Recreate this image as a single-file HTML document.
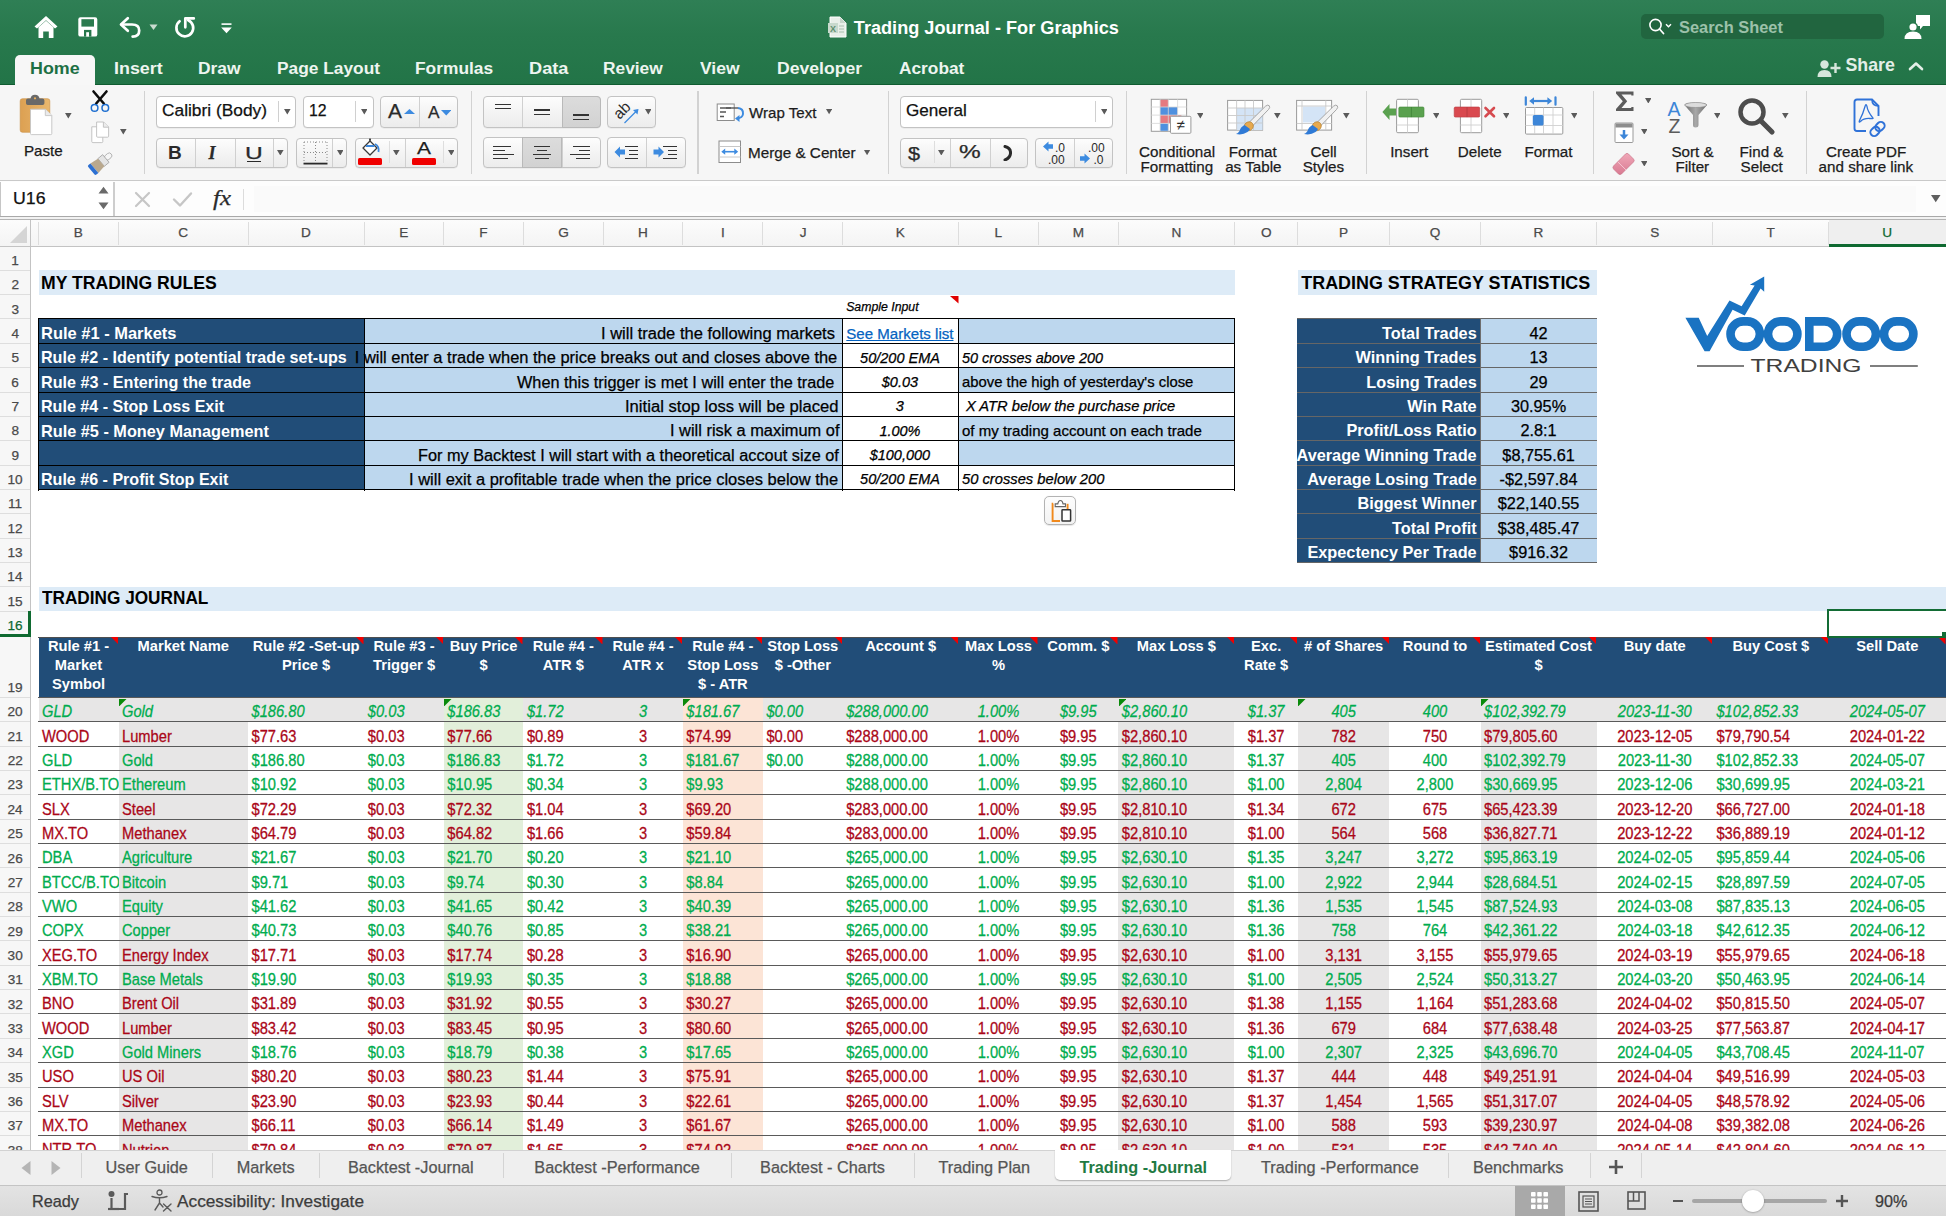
<!DOCTYPE html>
<html><head><meta charset="utf-8"><title>Trading Journal - For Graphics</title>
<style>
html,body{margin:0;padding:0;}
body{width:1946px;height:1216px;overflow:hidden;position:relative;background:#fff;font-family:"Liberation Sans",sans-serif;}
div{box-sizing:border-box;}
div[style*="font-weight:normal"]{-webkit-text-stroke:0.25px currentColor;}
</style></head><body>
<div style="position:absolute;left:0.00px;top:0.00px;width:1946.00px;height:85.00px;background:linear-gradient(180deg,#2f7f55 0%,#28794d 40%,#227447 100%);"></div><div style="position:absolute;left:0.00px;top:84.00px;width:1946.00px;height:1.00px;background:#105c31;"></div><svg style="position:absolute;left:33.00px;top:14.00px;" width="26" height="25" viewBox="0 0 26 25"><path d="M13 2 L1.5 12.5 L4 14.5 L13 6.3 L22 14.5 L24.5 12.5 Z" fill="#fff"/><path d="M5.5 13.2 L13 6.8 L20.5 13.2 L20.5 23.5 Q20.5 24 20 24 L15.8 24 L15.8 17.5 L10.2 17.5 L10.2 24 L6 24 Q5.5 24 5.5 23.5 Z" fill="#fff"/></svg><svg style="position:absolute;left:78.00px;top:17.00px;" width="20" height="20" viewBox="0 0 20 20"><rect x="0.3" y="0.2" width="19" height="19.4" rx="2.2" fill="#fff"/><rect x="3.4" y="2.2" width="12.6" height="7.4" fill="#2a7a4e"/><rect x="6" y="12.9" width="7.4" height="6.7" fill="#26774b"/><rect x="8.2" y="15.2" width="2.8" height="4.4" fill="#fff"/></svg><svg style="position:absolute;left:118.00px;top:15.00px;" width="25" height="24" viewBox="0 0 25 24"><path d="M9.8 3.2 L3 9.5 L9.8 15.8" stroke="#fff" stroke-width="2.7" fill="none" stroke-linecap="round" stroke-linejoin="round"/><path d="M3.8 9.5 L14 9.5 Q21.2 9.5 21.2 15.5 Q21.2 21.6 14.6 21.6" stroke="#fff" stroke-width="2.7" fill="none" stroke-linecap="round"/></svg><svg style="position:absolute;left:149.00px;top:24.00px;" width="9" height="7" viewBox="0 0 9 7"><path d="M0.5 0.5 L8.5 0.5 L4.5 6 Z" fill="#c9dccf"/></svg><svg style="position:absolute;left:172.00px;top:15.00px;" width="25" height="25" viewBox="0 0 25 25"><path d="M7.6 6.3 A8.4 8.4 0 1 0 16.2 5.2" stroke="#fff" stroke-width="2.7" fill="none" stroke-linecap="round"/><path d="M13.3 12.3 L13.3 3.4 L21.8 3.4" stroke="#fff" stroke-width="2.7" fill="none" stroke-linecap="round" stroke-linejoin="round"/></svg><svg style="position:absolute;left:220.00px;top:22.00px;" width="13" height="12" viewBox="0 0 13 12"><rect x="1.5" y="1.3" width="10" height="1.6" fill="#fff"/><path d="M1.2 5.6 L11.8 5.6 L6.5 11.2 Z" fill="#fff"/></svg><svg style="position:absolute;left:827.00px;top:16.00px;" width="21" height="22" viewBox="0 0 21 22"><path d="M3 1 L13 1 L19 7 L19 21 L3 21 Z" fill="#e8efe9" stroke="#fff" stroke-width="1"/><path d="M13 1 L13 7 L19 7" fill="#c7d6cb"/><rect x="1" y="7" width="10" height="10" fill="#c8d9cd"/><text x="6" y="15.5" font-size="9" font-weight="bold" text-anchor="middle" fill="#5d8f6d" font-family="Liberation Sans">X</text><path d="M12 10 h5 M12 13 h5 M12 16 h5" stroke="#a8c0ae" stroke-width="1"/></svg><div style="position:absolute;left:853.82px;top:19.43px;font-size:18.15px;line-height:18.15px;color:#fff;font-weight:bold;font-style:normal;white-space:nowrap;">Trading Journal - For Graphics</div><div style="position:absolute;left:1641.00px;top:14.20px;width:242.60px;height:25.30px;background:#21653f;border-radius:5px;"></div><svg style="position:absolute;left:1648.00px;top:18.00px;" width="26" height="18" viewBox="0 0 26 18"><circle cx="7.5" cy="7" r="5.6" stroke="#fff" stroke-width="1.6" fill="none"/><path d="M11.5 11 L15.5 15.5" stroke="#fff" stroke-width="1.8" stroke-linecap="round"/><path d="M18 6.2 L20.5 8.8 L23 6.2" stroke="#fff" stroke-width="1.4" fill="none"/></svg><div style="position:absolute;left:1678.51px;top:19.75px;font-size:16.60px;line-height:16.60px;color:#9cc1aa;font-weight:bold;font-style:normal;white-space:nowrap;transform:scaleX(0.9885);transform-origin:0 0;">Search Sheet</div><svg style="position:absolute;left:1903.00px;top:14.00px;" width="28" height="26" viewBox="0 0 28 26"><path d="M13 1 H27 V12 H20 L17 15.5 L17 12 H13 Z" fill="#fff"/><circle cx="10" cy="13" r="4.3" fill="#fff" stroke="#26784b" stroke-width="1.4"/><path d="M1.5 25 Q1.5 17.5 10 17.5 Q18.5 17.5 18.5 25 Z" fill="#fff"/></svg><div style="position:absolute;left:15.00px;top:55.00px;width:80.00px;height:31.00px;background:#f7f7f7;border-radius:5px 5px 0 0;"></div><div style="position:absolute;left:29.64px;top:59.57px;font-size:17.40px;line-height:17.40px;color:#1d7044;font-weight:bold;font-style:normal;white-space:nowrap;transform:scaleX(1.0270);transform-origin:0 0;">Home</div><div style="position:absolute;left:114.14px;top:59.57px;font-size:17.40px;line-height:17.40px;color:#eef5f0;font-weight:bold;font-style:normal;white-space:nowrap;transform:scaleX(1.0277);transform-origin:0 0;">Insert</div><div style="position:absolute;left:198.47px;top:59.57px;font-size:17.40px;line-height:17.40px;color:#eef5f0;font-weight:bold;font-style:normal;white-space:nowrap;transform:scaleX(1.0024);transform-origin:0 0;">Draw</div><div style="position:absolute;left:276.57px;top:59.57px;font-size:17.40px;line-height:17.40px;color:#eef5f0;font-weight:bold;font-style:normal;white-space:nowrap;transform:scaleX(0.9967);transform-origin:0 0;">Page Layout</div><div style="position:absolute;left:415.37px;top:59.57px;font-size:17.40px;line-height:17.40px;color:#eef5f0;font-weight:bold;font-style:normal;white-space:nowrap;transform:scaleX(0.9977);transform-origin:0 0;">Formulas</div><div style="position:absolute;left:528.72px;top:59.57px;font-size:17.40px;line-height:17.40px;color:#eef5f0;font-weight:bold;font-style:normal;white-space:nowrap;transform:scaleX(1.0459);transform-origin:0 0;">Data</div><div style="position:absolute;left:603.17px;top:59.57px;font-size:17.40px;line-height:17.40px;color:#eef5f0;font-weight:bold;font-style:normal;white-space:nowrap;transform:scaleX(0.9966);transform-origin:0 0;">Review</div><div style="position:absolute;left:700.31px;top:59.57px;font-size:17.40px;line-height:17.40px;color:#eef5f0;font-weight:bold;font-style:normal;white-space:nowrap;transform:scaleX(1.0070);transform-origin:0 0;">View</div><div style="position:absolute;left:776.55px;top:59.57px;font-size:17.40px;line-height:17.40px;color:#eef5f0;font-weight:bold;font-style:normal;white-space:nowrap;transform:scaleX(1.0128);transform-origin:0 0;">Developer</div><div style="position:absolute;left:898.87px;top:59.57px;font-size:17.40px;line-height:17.40px;color:#eef5f0;font-weight:bold;font-style:normal;white-space:nowrap;transform:scaleX(0.9942);transform-origin:0 0;">Acrobat</div><svg style="position:absolute;left:1817.00px;top:59.00px;" width="25" height="19" viewBox="0 0 25 19"><circle cx="7.5" cy="5.5" r="4.2" fill="#d6e6dc"/><path d="M0.5 18 Q0.5 11 7.5 11 Q14.5 11 14.5 18 Z" fill="#d6e6dc"/><path d="M18.5 4 V14 M13.5 9 H23.5" stroke="#d6e6dc" stroke-width="2.4"/></svg><div style="position:absolute;left:1845.47px;top:56.94px;font-size:17.79px;line-height:17.79px;color:#e3eee7;font-weight:bold;font-style:normal;white-space:nowrap;">Share</div><svg style="position:absolute;left:1908.00px;top:61.00px;" width="16" height="10" viewBox="0 0 16 10"><path d="M2 8 L8 2.5 L14 8" stroke="#e3eee7" stroke-width="2.6" fill="none" stroke-linecap="round" stroke-linejoin="round"/></svg><div style="position:absolute;left:0.00px;top:85.00px;width:1946.00px;height:95.50px;background:#f6f6f6;"></div><div style="position:absolute;left:0.00px;top:180.00px;width:1946.00px;height:1.20px;background:#c9c9c9;"></div><svg style="position:absolute;left:19.00px;top:94.00px;" width="34" height="42" viewBox="0 0 34 42">
<defs><linearGradient id="cb" x1="0" y1="0" x2="1" y2="0"><stop offset="0" stop-color="#dca052"/><stop offset="1" stop-color="#eab86e"/></linearGradient></defs>
<rect x="1.2" y="4.7" width="29.6" height="33.6" rx="2.2" fill="url(#cb)" stroke="#c98d3f" stroke-width="0.6"/>
<path d="M7 6.5 Q7 4.6 9 4.6 L11.5 4.6 Q12 0.8 16 0.8 Q20 0.8 20.5 4.6 L23.3 4.6 Q25.4 4.6 25.4 6.5 L25.4 9.3 Q25.4 10.9 23.6 10.9 L8.8 10.9 Q7 10.9 7 9.3 Z" fill="#696969"/>
<circle cx="16" cy="4.3" r="1.1" fill="#f0b35c"/>
<path d="M11.5 15.2 L26.5 15.2 L32.8 21.5 L32.8 39.6 Q32.8 40.6 31.8 40.6 L12.5 40.6 Q11.5 40.6 11.5 39.6 Z" fill="#fff" stroke="#c4c4c4" stroke-width="0.9"/>
<path d="M26.3 15.2 L26.3 21.6 L32.8 21.6" fill="#eaeaea" stroke="#c4c4c4" stroke-width="0.9"/>
</svg><svg style="position:absolute;left:65.00px;top:113.05px;" width="6.6" height="5.5" viewBox="0 0 6.6 5.5"><path d="M0 0 L6.6 0 L3.3 5.5 Z" fill="#5a5a5a"/></svg><div style="position:absolute;left:23.59px;top:144.14px;font-size:14.60px;line-height:14.60px;color:#1a1a1a;font-weight:normal;font-style:normal;white-space:nowrap;transform:scaleX(1.0373);transform-origin:0 0;">Paste</div><svg style="position:absolute;left:89.00px;top:89.00px;" width="22" height="25" viewBox="0 0 22 25">
<path d="M4.5 2.5 L14.8 14.5 M17.5 2.5 L7.2 14.5" stroke="#0d0d0d" stroke-width="2.6" stroke-linecap="round"/>
<circle cx="5.6" cy="18.9" r="3.3" fill="none" stroke="#1f6fd0" stroke-width="1.5"/>
<circle cx="16.3" cy="18.9" r="3.3" fill="none" stroke="#1f6fd0" stroke-width="1.5"/>
</svg><svg style="position:absolute;left:90.00px;top:121.00px;" width="20" height="23" viewBox="0 0 20 23">
<path d="M1.8 5.8 L8.3 5.8 L12.8 10.3 L12.8 20.6 Q12.8 21.6 11.8 21.6 L2.8 21.6 Q1.8 21.6 1.8 20.6 Z" fill="#fff" stroke="#bdbdbd" stroke-width="0.9"/>
<path d="M6.6 1 L13.6 1 L18.6 6 L18.6 15.2 Q18.6 16.2 17.6 16.2 L7.6 16.2 Q6.6 16.2 6.6 15.2 Z" fill="#fff" stroke="#bdbdbd" stroke-width="0.9"/>
<path d="M13.4 1 L13.4 6.2 L18.6 6.2" fill="#ececec" stroke="#bdbdbd" stroke-width="0.9"/>
</svg><svg style="position:absolute;left:120.40px;top:129.45px;" width="6.6" height="5.5" viewBox="0 0 6.6 5.5"><path d="M0 0 L6.6 0 L3.3 5.5 Z" fill="#5a5a5a"/></svg><svg style="position:absolute;left:86.00px;top:149.00px;" width="30" height="28" viewBox="0 0 30 28"><g transform="translate(14.5,14) rotate(50)">
<rect x="-2.7" y="-14" width="5.4" height="8" rx="2.6" fill="#f6f6f6" stroke="#a9a9a9" stroke-width="0.8"/>
<rect x="-5" y="-7" width="10" height="6.2" fill="#e4e4e4" stroke="#a3a3a3" stroke-width="0.8"/>
<path d="M-5 -0.8 L5 -0.8 L6.2 8 L-6.2 8 Z" fill="#b9a88d"/>
<path d="M-6.2 8 L6.2 8 L6.2 10.5 Q6.2 12 4.7 12 L-4.7 12 Q-6.2 12 -6.2 10.5 Z" fill="#2d70d2"/>
</g></svg><div style="position:absolute;left:143.50px;top:90.60px;width:1.20px;height:83.20px;background:#d2d2d2;"></div><div style="position:absolute;left:155.80px;top:96.20px;width:140.60px;height:31.60px;background:#ffffff;border:1px solid #c3c3c3;border-radius:4px;box-shadow:0 0.5px 0.5px rgba(0,0,0,0.08);"></div><div style="position:absolute;left:277.50px;top:100.80px;width:1.00px;height:21.70px;background:#d0d0d0;"></div><div style="position:absolute;left:161.93px;top:103.38px;font-size:16.80px;line-height:16.80px;color:#111;font-weight:normal;font-style:normal;white-space:nowrap;transform:scaleX(1.0333);transform-origin:0 0;">Calibri (Body)</div><svg style="position:absolute;left:284.00px;top:109.35px;" width="6.6" height="5.5" viewBox="0 0 6.6 5.5"><path d="M0 0 L6.6 0 L3.3 5.5 Z" fill="#5a5a5a"/></svg><div style="position:absolute;left:303.00px;top:96.20px;width:70.70px;height:31.60px;background:#ffffff;border:1px solid #c3c3c3;border-radius:4px;box-shadow:0 0.5px 0.5px rgba(0,0,0,0.08);"></div><div style="position:absolute;left:354.80px;top:100.80px;width:1.00px;height:21.70px;background:#d0d0d0;"></div><div style="position:absolute;left:309.21px;top:103.38px;font-size:16.80px;line-height:16.80px;color:#111;font-weight:normal;font-style:normal;white-space:nowrap;transform:scaleX(0.9427);transform-origin:0 0;">12</div><svg style="position:absolute;left:360.90px;top:109.35px;" width="6.6" height="5.5" viewBox="0 0 6.6 5.5"><path d="M0 0 L6.6 0 L3.3 5.5 Z" fill="#5a5a5a"/></svg><div style="position:absolute;left:380.30px;top:96.20px;width:78.10px;height:31.60px;background:linear-gradient(180deg,#fdfdfd 0%,#f3f3f3 55%,#ececec 100%);border:1px solid #c3c3c3;border-radius:4px;box-shadow:0 0.5px 0.5px rgba(0,0,0,0.08);"></div><div style="position:absolute;left:419.20px;top:97.20px;width:1.00px;height:29.60px;background:#d0d0d0;"></div><div style="position:absolute;left:387.70px;top:102.29px;font-size:19.50px;line-height:19.50px;color:#2a2a2a;font-weight:normal;font-style:normal;white-space:nowrap;transform:scaleX(1.0719);transform-origin:0 0;">A</div><svg style="position:absolute;left:403.50px;top:109.00px;" width="11" height="5" viewBox="0 0 11 5"><path d="M0 5 L5.5 0 L11 5 Z" fill="#3d8be0"/></svg><div style="position:absolute;left:428.00px;top:105.26px;font-size:16.00px;line-height:16.00px;color:#2a2a2a;font-weight:normal;font-style:normal;white-space:nowrap;transform:scaleX(1.0808);transform-origin:0 0;">A</div><svg style="position:absolute;left:440.80px;top:110.00px;" width="10.5" height="5.5" viewBox="0 0 10.5 5.5"><path d="M0 0 L10.5 0 L5.25 5.5 Z" fill="#3d8be0"/></svg><div style="position:absolute;left:156.20px;top:137.70px;width:132.00px;height:29.90px;background:linear-gradient(180deg,#fdfdfd 0%,#f3f3f3 55%,#ececec 100%);border:1px solid #c3c3c3;border-radius:4px;box-shadow:0 0.5px 0.5px rgba(0,0,0,0.08);"></div><div style="position:absolute;left:195.20px;top:138.70px;width:1.00px;height:27.90px;background:#d0d0d0;"></div><div style="position:absolute;left:234.70px;top:138.70px;width:1.00px;height:27.90px;background:#d0d0d0;"></div><div style="position:absolute;left:272.50px;top:138.70px;width:1.00px;height:27.90px;background:#d0d0d0;"></div><div style="position:absolute;left:168.46px;top:143.76px;font-size:18.00px;line-height:18.00px;color:#2a2a2a;font-weight:bold;font-style:normal;white-space:nowrap;transform:scaleX(1.0565);transform-origin:0 0;">B</div><div style="position:absolute;left:208.48px;top:143.76px;font-size:18.00px;line-height:18.00px;color:#2a2a2a;font-weight:normal;font-style:italic;white-space:nowrap;font-family:'Liberation Serif',serif;font-weight:bold;">I</div><div style="position:absolute;left:245.16px;top:144.61px;font-size:17.00px;line-height:17.00px;color:#2a2a2a;font-weight:normal;font-style:normal;white-space:nowrap;transform:scaleX(1.4448);transform-origin:0 0;">U</div><div style="position:absolute;left:247.00px;top:160.50px;width:14.00px;height:1.60px;background:#2a2a2a;"></div><svg style="position:absolute;left:277.40px;top:149.75px;" width="6.6" height="5.5" viewBox="0 0 6.6 5.5"><path d="M0 0 L6.6 0 L3.3 5.5 Z" fill="#5a5a5a"/></svg><div style="position:absolute;left:295.60px;top:137.70px;width:51.80px;height:29.90px;background:linear-gradient(180deg,#fdfdfd 0%,#f3f3f3 55%,#ececec 100%);border:1px solid #c3c3c3;border-radius:4px;box-shadow:0 0.5px 0.5px rgba(0,0,0,0.08);"></div><div style="position:absolute;left:331.70px;top:138.70px;width:1.00px;height:27.90px;background:#d0d0d0;"></div><svg style="position:absolute;left:302.50px;top:140.50px;" width="25" height="24" viewBox="0 0 25 24">
<g stroke="#8a8a8a" stroke-width="1" stroke-dasharray="1 2" fill="none">
<path d="M1 1 H24 M1 11.5 H24 M1 1 V22 M12.5 1 V22 M24 1 V22"/></g>
<path d="M0.5 22.6 H24.5" stroke="#2a2a2a" stroke-width="1.8"/></svg><svg style="position:absolute;left:336.70px;top:149.75px;" width="6.6" height="5.5" viewBox="0 0 6.6 5.5"><path d="M0 0 L6.6 0 L3.3 5.5 Z" fill="#5a5a5a"/></svg><div style="position:absolute;left:354.80px;top:137.70px;width:103.60px;height:29.90px;background:linear-gradient(180deg,#fdfdfd 0%,#f3f3f3 55%,#ececec 100%);border:1px solid #c3c3c3;border-radius:4px;box-shadow:0 0.5px 0.5px rgba(0,0,0,0.08);"></div><div style="position:absolute;left:405.00px;top:138.70px;width:1.00px;height:27.90px;background:#d0d0d0;"></div><div style="position:absolute;left:388.50px;top:141.00px;width:1.00px;height:22.00px;background:#dedede;"></div><div style="position:absolute;left:442.80px;top:141.00px;width:1.00px;height:22.00px;background:#dedede;"></div><svg style="position:absolute;left:360.00px;top:138.00px;" width="21" height="20" viewBox="0 0 21 20">
<path d="M3 10 L10 3 L17 10 L10 17 Z" fill="#fff" stroke="#3a3a3a" stroke-width="1.3" stroke-linejoin="round"/>
<path d="M10 3 L10 0.8" stroke="#3a3a3a" stroke-width="1.2"/><circle cx="10" cy="1.5" r="1" fill="#3a3a3a"/>
<path d="M6 8 L14.5 8" stroke="#3b87dc" stroke-width="2"/>
<path d="M15 6 Q19.5 8 18.5 14" stroke="#3b87dc" stroke-width="1.8" fill="none"/>
</svg><div style="position:absolute;left:358.00px;top:158.30px;width:24.20px;height:6.50px;background:#f00000;border-radius:1.5px;"></div><svg style="position:absolute;left:393.40px;top:149.75px;" width="6.6" height="5.5" viewBox="0 0 6.6 5.5"><path d="M0 0 L6.6 0 L3.3 5.5 Z" fill="#5a5a5a"/></svg><div style="position:absolute;left:417.30px;top:140.11px;font-size:17.00px;line-height:17.00px;color:#1e1e1e;font-weight:normal;font-style:normal;white-space:nowrap;transform:scaleX(1.2295);transform-origin:0 0;">A</div><div style="position:absolute;left:412.30px;top:158.30px;width:23.90px;height:6.50px;background:#f00000;border-radius:1.5px;"></div><svg style="position:absolute;left:447.70px;top:149.75px;" width="6.6" height="5.5" viewBox="0 0 6.6 5.5"><path d="M0 0 L6.6 0 L3.3 5.5 Z" fill="#5a5a5a"/></svg><div style="position:absolute;left:470.50px;top:90.60px;width:1.20px;height:83.20px;background:#d2d2d2;"></div><div style="position:absolute;left:483.20px;top:96.30px;width:117.40px;height:31.30px;background:linear-gradient(180deg,#fdfdfd 0%,#f3f3f3 55%,#ececec 100%);border:1px solid #c3c3c3;border-radius:4px;box-shadow:0 0.5px 0.5px rgba(0,0,0,0.08);"></div><div style="position:absolute;left:562.00px;top:96.30px;width:38.60px;height:31.30px;background:linear-gradient(180deg,#dcdcdc,#d2d2d2);border:1px solid #b9b9b9;border-radius:0 4px 4px 0;"></div><div style="position:absolute;left:522.30px;top:97.30px;width:1.00px;height:29.30px;background:#d0d0d0;"></div><div style="position:absolute;left:494.90px;top:103.95px;width:15.90px;height:1.50px;background:#333;"></div><div style="position:absolute;left:494.90px;top:107.95px;width:15.90px;height:1.50px;background:#333;"></div><div style="position:absolute;left:534.00px;top:109.05px;width:16.00px;height:1.50px;background:#333;"></div><div style="position:absolute;left:534.00px;top:113.65px;width:16.00px;height:1.50px;background:#333;"></div><div style="position:absolute;left:573.00px;top:114.45px;width:16.00px;height:1.50px;background:#333;"></div><div style="position:absolute;left:573.00px;top:118.75px;width:16.00px;height:1.50px;background:#333;"></div><div style="position:absolute;left:607.30px;top:96.30px;width:48.40px;height:31.30px;background:linear-gradient(180deg,#fdfdfd 0%,#f3f3f3 55%,#ececec 100%);border:1px solid #c3c3c3;border-radius:4px;box-shadow:0 0.5px 0.5px rgba(0,0,0,0.08);"></div><svg style="position:absolute;left:612.00px;top:100.00px;" width="30" height="26" viewBox="0 0 30 26">
<text x="0" y="0" transform="translate(7.5,20) rotate(-45)" font-family="Liberation Sans" font-size="15.5" fill="#2a2a2a">ab</text>
<path d="M12.5 23 L25.5 10" stroke="#3d8be0" stroke-width="1.3"/><path d="M26.5 9 L21 10 L25.5 14.5 Z" fill="#3d8be0"/></svg><svg style="position:absolute;left:644.50px;top:109.05px;" width="6.6" height="5.5" viewBox="0 0 6.6 5.5"><path d="M0 0 L6.6 0 L3.3 5.5 Z" fill="#5a5a5a"/></svg><div style="position:absolute;left:483.20px;top:137.30px;width:117.40px;height:30.80px;background:linear-gradient(180deg,#fdfdfd 0%,#f3f3f3 55%,#ececec 100%);border:1px solid #c3c3c3;border-radius:4px;box-shadow:0 0.5px 0.5px rgba(0,0,0,0.08);"></div><div style="position:absolute;left:522.30px;top:137.30px;width:39.70px;height:30.80px;background:linear-gradient(180deg,#dcdcdc,#d2d2d2);border:1px solid #b9b9b9;"></div><div style="position:absolute;left:562.00px;top:138.30px;width:1.00px;height:28.80px;background:#d0d0d0;"></div><div style="position:absolute;left:493.00px;top:145.75px;width:17.80px;height:1.50px;background:#333;"></div><div style="position:absolute;left:493.00px;top:149.75px;width:12.00px;height:1.50px;background:#333;"></div><div style="position:absolute;left:493.00px;top:153.85px;width:20.50px;height:1.50px;background:#333;"></div><div style="position:absolute;left:493.00px;top:157.95px;width:14.80px;height:1.50px;background:#333;"></div><div style="position:absolute;left:534.00px;top:145.75px;width:16.00px;height:1.50px;background:#333;"></div><div style="position:absolute;left:536.70px;top:149.75px;width:10.50px;height:1.50px;background:#333;"></div><div style="position:absolute;left:532.50px;top:153.85px;width:18.80px;height:1.50px;background:#333;"></div><div style="position:absolute;left:535.00px;top:157.95px;width:13.70px;height:1.50px;background:#333;"></div><div style="position:absolute;left:573.00px;top:145.75px;width:17.30px;height:1.50px;background:#333;"></div><div style="position:absolute;left:578.70px;top:149.75px;width:11.60px;height:1.50px;background:#333;"></div><div style="position:absolute;left:570.40px;top:153.85px;width:19.90px;height:1.50px;background:#333;"></div><div style="position:absolute;left:575.80px;top:157.95px;width:14.50px;height:1.50px;background:#333;"></div><div style="position:absolute;left:607.30px;top:137.30px;width:78.30px;height:30.80px;background:linear-gradient(180deg,#fdfdfd 0%,#f3f3f3 55%,#ececec 100%);border:1px solid #c3c3c3;border-radius:4px;box-shadow:0 0.5px 0.5px rgba(0,0,0,0.08);"></div><div style="position:absolute;left:646.20px;top:138.30px;width:1.00px;height:28.80px;background:#d0d0d0;"></div><svg style="position:absolute;left:614.00px;top:146.00px;" width="11.5" height="12" viewBox="0 0 11.5 12"><path d="M0.5 6 L6 0.5 L6 3.5 L11 3.5 L11 8.5 L6 8.5 L6 11.5 Z" fill="#3d8be0"/></svg><div style="position:absolute;left:624.60px;top:145.75px;width:13.20px;height:1.50px;background:#333;"></div><div style="position:absolute;left:629.30px;top:149.75px;width:8.50px;height:1.50px;background:#333;"></div><div style="position:absolute;left:629.30px;top:153.85px;width:8.50px;height:1.50px;background:#333;"></div><div style="position:absolute;left:624.60px;top:157.95px;width:13.20px;height:1.50px;background:#333;"></div><svg style="position:absolute;left:653.00px;top:146.00px;" width="11.5" height="12" viewBox="0 0 11.5 12"><path d="M11 6 L5.5 0.5 L5.5 3.5 L0.5 3.5 L0.5 8.5 L5.5 8.5 L5.5 11.5 Z" fill="#3d8be0"/></svg><div style="position:absolute;left:663.40px;top:145.75px;width:13.60px;height:1.50px;background:#333;"></div><div style="position:absolute;left:668.00px;top:149.75px;width:9.00px;height:1.50px;background:#333;"></div><div style="position:absolute;left:668.00px;top:153.85px;width:9.00px;height:1.50px;background:#333;"></div><div style="position:absolute;left:663.40px;top:157.95px;width:13.60px;height:1.50px;background:#333;"></div><div style="position:absolute;left:697.40px;top:90.60px;width:1.20px;height:83.20px;background:#d2d2d2;"></div><svg style="position:absolute;left:715.50px;top:102.00px;" width="30" height="21" viewBox="0 0 30 21">
<rect x="1.2" y="2" width="17" height="16.5" fill="#fff" stroke="#8c8c8c" stroke-width="1"/>
<path d="M4 6 H15 M4 10 H10 M4 14.5 H8" stroke="#555" stroke-width="1.4"/>
<path d="M10 6 H22" stroke="#555" stroke-width="1.4"/>
<path d="M22 6 Q27.5 6.5 27 12 Q26.5 16 21 16.5" stroke="#3d8be0" stroke-width="2" fill="none"/>
<path d="M19 16.5 L23.5 13 L23.5 20 Z" fill="#3d8be0"/></svg><div style="position:absolute;left:748.72px;top:105.26px;font-size:15.40px;line-height:15.40px;color:#1c1c1c;font-weight:normal;font-style:normal;white-space:nowrap;transform:scaleX(0.9806);transform-origin:0 0;">Wrap Text</div><svg style="position:absolute;left:825.90px;top:109.40px;" width="6.2" height="5.2" viewBox="0 0 6.2 5.2"><path d="M0 0 L6.2 0 L3.1 5.2 Z" fill="#5a5a5a"/></svg><svg style="position:absolute;left:717.50px;top:140.00px;" width="24" height="24" viewBox="0 0 24 24">
<rect x="1" y="1" width="21.5" height="21.5" fill="#fff" stroke="#8c8c8c" stroke-width="1"/>
<path d="M1 6.5 H22.5 M1 17 H22.5" stroke="#c8c8c8" stroke-width="1"/>
<path d="M5.5 11.7 H18" stroke="#3d8be0" stroke-width="1.6"/>
<path d="M3.3 11.7 L7.2 8.6 L7.2 14.8 Z M20.2 11.7 L16.3 8.6 L16.3 14.8 Z" fill="#3d8be0"/></svg><div style="position:absolute;left:747.58px;top:145.26px;font-size:15.40px;line-height:15.40px;color:#1c1c1c;font-weight:normal;font-style:normal;white-space:nowrap;transform:scaleX(0.9908);transform-origin:0 0;">Merge &amp; Center</div><svg style="position:absolute;left:864.40px;top:149.60px;" width="6.2" height="5.2" viewBox="0 0 6.2 5.2"><path d="M0 0 L6.2 0 L3.1 5.2 Z" fill="#5a5a5a"/></svg><div style="position:absolute;left:888.00px;top:90.60px;width:1.20px;height:83.20px;background:#d2d2d2;"></div><div style="position:absolute;left:899.80px;top:96.30px;width:213.50px;height:31.30px;background:#ffffff;border:1px solid #c3c3c3;border-radius:4px;box-shadow:0 0.5px 0.5px rgba(0,0,0,0.08);"></div><div style="position:absolute;left:1094.70px;top:100.80px;width:1.00px;height:21.70px;background:#d0d0d0;"></div><div style="position:absolute;left:905.74px;top:103.38px;font-size:16.80px;line-height:16.80px;color:#111;font-weight:normal;font-style:normal;white-space:nowrap;transform:scaleX(1.0192);transform-origin:0 0;">General</div><svg style="position:absolute;left:1100.70px;top:109.35px;" width="6.6" height="5.5" viewBox="0 0 6.6 5.5"><path d="M0 0 L6.6 0 L3.3 5.5 Z" fill="#5a5a5a"/></svg><div style="position:absolute;left:900.30px;top:137.50px;width:128.20px;height:30.50px;background:linear-gradient(180deg,#fdfdfd 0%,#f3f3f3 55%,#ececec 100%);border:1px solid #c3c3c3;border-radius:4px;box-shadow:0 0.5px 0.5px rgba(0,0,0,0.08);"></div><div style="position:absolute;left:950.00px;top:138.50px;width:1.00px;height:28.50px;background:#d0d0d0;"></div><div style="position:absolute;left:989.60px;top:138.50px;width:1.00px;height:28.50px;background:#d0d0d0;"></div><div style="position:absolute;left:933.70px;top:141.00px;width:1.00px;height:22.00px;background:#dedede;"></div><div style="position:absolute;left:907.78px;top:143.92px;font-size:19.00px;line-height:19.00px;color:#2a2a2a;font-weight:normal;font-style:normal;white-space:nowrap;transform:scaleX(1.1420);transform-origin:0 0;">$</div><svg style="position:absolute;left:938.20px;top:149.75px;" width="6.6" height="5.5" viewBox="0 0 6.6 5.5"><path d="M0 0 L6.6 0 L3.3 5.5 Z" fill="#5a5a5a"/></svg><div style="position:absolute;left:959.15px;top:143.34px;font-size:18.50px;line-height:18.50px;color:#2a2a2a;font-weight:normal;font-style:normal;white-space:nowrap;transform:scaleX(1.3184);transform-origin:0 0;">%</div><svg style="position:absolute;left:1003.00px;top:145.00px;" width="9" height="16" viewBox="0 0 9 16"><path d="M2 1.5 Q8 3 7.5 8.5 Q7 13 2 15" stroke="#2a2a2a" stroke-width="3" fill="none" stroke-linecap="round"/></svg><div style="position:absolute;left:1035.30px;top:137.50px;width:78.00px;height:30.50px;background:linear-gradient(180deg,#fdfdfd 0%,#f3f3f3 55%,#ececec 100%);border:1px solid #c3c3c3;border-radius:4px;box-shadow:0 0.5px 0.5px rgba(0,0,0,0.08);"></div><div style="position:absolute;left:1074.40px;top:138.50px;width:1.00px;height:28.50px;background:#d0d0d0;"></div><svg style="position:absolute;left:1042.00px;top:140.00px;" width="30" height="26" viewBox="0 0 30 26">
<path d="M1 6.5 L6.5 1.5 L6.5 4.3 L11 4.3 L11 8.7 L6.5 8.7 L6.5 11.5 Z" fill="#3d8be0"/>
<text x="13" y="11.5" font-family="Liberation Sans" font-size="12" fill="#2a2a2a">.0</text>
<text x="6" y="24" font-family="Liberation Sans" font-size="12" fill="#2a2a2a">.00</text></svg><svg style="position:absolute;left:1078.00px;top:140.00px;" width="32" height="26" viewBox="0 0 32 26">
<text x="10" y="11.5" font-family="Liberation Sans" font-size="12" fill="#2a2a2a">.00</text>
<path d="M12 18.5 L6.5 13.5 L6.5 16.3 L2 16.3 L2 20.7 L6.5 20.7 L6.5 23.5 Z" fill="#3d8be0"/>
<text x="15.5" y="24" font-family="Liberation Sans" font-size="12" fill="#2a2a2a">.0</text></svg><div style="position:absolute;left:1125.90px;top:90.60px;width:1.20px;height:83.20px;background:#d2d2d2;"></div><svg style="position:absolute;left:1150.00px;top:98.00px;" width="42" height="38" viewBox="0 0 42 38">
<g transform="translate(1.3,1.3)">
<rect x="0" y="0" width="35.3" height="32" fill="#fff" stroke="#9a9a9a" stroke-width="1"/>
<rect x="8.8" y="0.5" width="8.2" height="7.7" fill="#e57a80"/>
<rect x="8.8" y="7.7" width="17.5" height="8.1" fill="#4f90df"/>
<rect x="8.8" y="15.8" width="21.3" height="8.3" fill="#e57a80"/>
<rect x="8.8" y="24.1" width="8.2" height="7.4" fill="#4f90df"/>
<path d="M8.8 0 V32 M17 0 V32 M26.3 0 V32 M0 7.7 H35.3 M0 15.8 H35.3 M0 24.1 H35.3" stroke="#d6d6d6" stroke-width="0.8"/>
<rect x="19.2" y="17" width="20.4" height="17" rx="1" fill="#fff" stroke="#9a9a9a" stroke-width="1"/>
<text x="29.4" y="31" text-anchor="middle" font-family="Liberation Sans" font-size="15" fill="#2a2a2a">≠</text>
</g></svg><svg style="position:absolute;left:1196.90px;top:113.05px;" width="6.6" height="5.5" viewBox="0 0 6.6 5.5"><path d="M0 0 L6.6 0 L3.3 5.5 Z" fill="#5a5a5a"/></svg><div style="position:absolute;left:1139.11px;top:143.63px;font-size:15.20px;line-height:15.20px;color:#1c1c1c;font-weight:normal;font-style:normal;white-space:nowrap;">Conditional</div><div style="position:absolute;left:1140.56px;top:159.43px;font-size:15.20px;line-height:15.20px;color:#1c1c1c;font-weight:normal;font-style:normal;white-space:nowrap;">Formatting</div><svg style="position:absolute;left:1226.00px;top:99.00px;" width="46" height="38" viewBox="0 0 46 38">
<rect x="1.6" y="1.4" width="35" height="29.7" fill="#fff" stroke="#9a9a9a" stroke-width="1"/>
<rect x="10.6" y="9" width="26" height="22" fill="#d4e4f6"/>
<path d="M10.6 1.4 V31 M19 1.4 V31 M27.5 1.4 V31 M1.6 9 H36.6 M1.6 16.5 H36.6 M1.6 24 H36.6" stroke="#c9c9c9" stroke-width="0.9"/>
<g transform="translate(9.5,4)">
<path d="M13 20 L30 3.2 Q32.5 1.2 33.8 2.8 Q35 4.5 33 6.5 L16.5 23.5 Z" fill="#f1f1f1" stroke="#9c9c9c" stroke-width="0.9"/>
<ellipse cx="13.2" cy="23.3" rx="4.8" ry="4.3" transform="rotate(-40 13.2 23.3)" fill="#e6a94f" stroke="#b88434" stroke-width="0.7"/>
<path d="M9 22 Q5 24 4 28 Q2.5 30.5 0.5 31 Q7 32.5 12 29 Q14 27.5 14.5 26 Z" fill="#2f7ad6"/>
</g></svg><svg style="position:absolute;left:1274.30px;top:113.05px;" width="6.6" height="5.5" viewBox="0 0 6.6 5.5"><path d="M0 0 L6.6 0 L3.3 5.5 Z" fill="#5a5a5a"/></svg><div style="position:absolute;left:1228.68px;top:143.63px;font-size:15.20px;line-height:15.20px;color:#1c1c1c;font-weight:normal;font-style:normal;white-space:nowrap;">Format</div><div style="position:absolute;left:1225.18px;top:159.43px;font-size:15.20px;line-height:15.20px;color:#1c1c1c;font-weight:normal;font-style:normal;white-space:nowrap;">as Table</div><svg style="position:absolute;left:1295.00px;top:99.00px;" width="46" height="38" viewBox="0 0 46 38">
<rect x="1.6" y="1.4" width="35" height="29.7" fill="#fff" stroke="#9a9a9a" stroke-width="1"/>
<rect x="8" y="7.5" width="22" height="16" fill="#d4e4f6"/>
<path d="M7 1.4 V31 M30.8 1.4 V31 M1.6 7 H36.6 M1.6 24.5 H36.6" stroke="#c9c9c9" stroke-width="0.9"/>
<g transform="translate(8.5,4)">
<path d="M13 20 L30 3.2 Q32.5 1.2 33.8 2.8 Q35 4.5 33 6.5 L16.5 23.5 Z" fill="#f1f1f1" stroke="#9c9c9c" stroke-width="0.9"/>
<ellipse cx="13.2" cy="23.3" rx="4.8" ry="4.3" transform="rotate(-40 13.2 23.3)" fill="#e6a94f" stroke="#b88434" stroke-width="0.7"/>
<path d="M9 22 Q5 24 4 28 Q2.5 30.5 0.5 31 Q7 32.5 12 29 Q14 27.5 14.5 26 Z" fill="#2f7ad6"/>
</g></svg><svg style="position:absolute;left:1343.30px;top:113.05px;" width="6.6" height="5.5" viewBox="0 0 6.6 5.5"><path d="M0 0 L6.6 0 L3.3 5.5 Z" fill="#5a5a5a"/></svg><div style="position:absolute;left:1310.54px;top:143.63px;font-size:15.20px;line-height:15.20px;color:#1c1c1c;font-weight:normal;font-style:normal;white-space:nowrap;">Cell</div><div style="position:absolute;left:1302.71px;top:159.43px;font-size:15.20px;line-height:15.20px;color:#1c1c1c;font-weight:normal;font-style:normal;white-space:nowrap;">Styles</div><div style="position:absolute;left:1366.20px;top:90.60px;width:1.20px;height:83.20px;background:#d2d2d2;"></div><svg style="position:absolute;left:1381.00px;top:97.00px;" width="46" height="38" viewBox="0 0 46 38">
<rect x="15.6" y="2.3" width="21.8" height="33.4" rx="1.2" fill="#fff" stroke="#9a9a9a" stroke-width="1"/>
<path d="M26.5 2.3 V35.7 M15.6 28 H37.4" stroke="#cfcfcf" stroke-width="0.9"/>
<rect x="17.8" y="10" width="25.2" height="10.1" rx="1.2" fill="#5aa14f" stroke="#438a3a" stroke-width="0.6"/>
<path d="M30.4 10 V20.1" stroke="#3f8236" stroke-width="0.8"/>
<path d="M1.4 15 L8.5 7.1 L8.5 11.5 L15 11.5 L15 18.6 L8.5 18.6 L8.5 23 Z" fill="#5aa14f"/></svg><svg style="position:absolute;left:1432.60px;top:113.05px;" width="6.6" height="5.5" viewBox="0 0 6.6 5.5"><path d="M0 0 L6.6 0 L3.3 5.5 Z" fill="#5a5a5a"/></svg><div style="position:absolute;left:1390.15px;top:143.63px;font-size:15.20px;line-height:15.20px;color:#1c1c1c;font-weight:normal;font-style:normal;white-space:nowrap;">Insert</div><svg style="position:absolute;left:1453.00px;top:97.00px;" width="44" height="38" viewBox="0 0 44 38">
<rect x="7.4" y="2.3" width="21.3" height="33.4" rx="1.2" fill="#fff" stroke="#9a9a9a" stroke-width="1"/>
<path d="M18 2.3 V35.7 M7.4 28 H28.7" stroke="#cfcfcf" stroke-width="0.9"/>
<rect x="1.2" y="10" width="25.5" height="10.1" rx="1.2" fill="#d9494f" stroke="#b83a3f" stroke-width="0.6"/>
<path d="M14 10 V20.1" stroke="#b23a3f" stroke-width="0.8"/>
<path d="M32.5 11 L41 19.3 M41 11 L32.5 19.3" stroke="#d64a4f" stroke-width="2.6" stroke-linecap="round"/></svg><svg style="position:absolute;left:1502.90px;top:113.05px;" width="6.6" height="5.5" viewBox="0 0 6.6 5.5"><path d="M0 0 L6.6 0 L3.3 5.5 Z" fill="#5a5a5a"/></svg><div style="position:absolute;left:1457.77px;top:143.63px;font-size:15.20px;line-height:15.20px;color:#1c1c1c;font-weight:normal;font-style:normal;white-space:nowrap;">Delete</div><svg style="position:absolute;left:1524.00px;top:96.00px;" width="42" height="40" viewBox="0 0 42 40">
<rect x="1.5" y="11.5" width="37.3" height="26.6" rx="1" fill="#fff" stroke="#9a9a9a" stroke-width="1"/>
<path d="M10.7 11.5 V38 M19.5 11.5 V38 M29 11.5 V38 M1.5 19 H38.8 M1.5 29.5 H38.8" stroke="#d0d0d0" stroke-width="0.9"/>
<rect x="8.8" y="18.9" width="10.7" height="10.7" rx="1.5" fill="#3d86d8"/>
<path d="M1.8 1.3 V8.7 M31.5 1.3 V8.7" stroke="#3d86d8" stroke-width="2.2" stroke-linecap="round"/>
<path d="M9 5 H24.5" stroke="#3d86d8" stroke-width="2.2"/>
<path d="M5.2 5 L10 1.3 L10 8.7 Z M28.2 5 L23.4 1.3 L23.4 8.7 Z" fill="#3d86d8"/></svg><svg style="position:absolute;left:1570.60px;top:113.05px;" width="6.6" height="5.5" viewBox="0 0 6.6 5.5"><path d="M0 0 L6.6 0 L3.3 5.5 Z" fill="#5a5a5a"/></svg><div style="position:absolute;left:1524.38px;top:143.63px;font-size:15.20px;line-height:15.20px;color:#1c1c1c;font-weight:normal;font-style:normal;white-space:nowrap;">Format</div><div style="position:absolute;left:1593.10px;top:90.60px;width:1.20px;height:83.20px;background:#d2d2d2;"></div><svg style="position:absolute;left:1614.00px;top:89.00px;" width="22" height="25" viewBox="0 0 22 25"><path d="M2 2.5 H19.5 V6.5 H17.3 V5.5 H7.5 L13.2 12.2 L7.5 19 H17.3 V18 H19.5 V22 H2 V20 L8.8 12.2 L2 4.5 Z" fill="#5b5b5b"/></svg><svg style="position:absolute;left:1644.70px;top:97.75px;" width="6.6" height="5.5" viewBox="0 0 6.6 5.5"><path d="M0 0 L6.6 0 L3.3 5.5 Z" fill="#5a5a5a"/></svg><svg style="position:absolute;left:1614.00px;top:122.00px;" width="21" height="22" viewBox="0 0 21 22">
<rect x="1" y="1" width="18" height="19.5" rx="1" fill="#fff" stroke="#9a9a9a" stroke-width="1"/>
<rect x="1.5" y="1.5" width="17" height="4" fill="#8d8d8d"/>
<path d="M10 8 V14" stroke="#3d86d8" stroke-width="2.5"/><path d="M5.5 12.5 L10 17.5 L14.5 12.5 Z" fill="#3d86d8"/></svg><svg style="position:absolute;left:1640.70px;top:128.95px;" width="6.6" height="5.5" viewBox="0 0 6.6 5.5"><path d="M0 0 L6.6 0 L3.3 5.5 Z" fill="#5a5a5a"/></svg><svg style="position:absolute;left:1612.00px;top:151.00px;" width="24" height="24" viewBox="0 0 24 24">
<defs><linearGradient id="er" x1="0" y1="0" x2="0" y2="1"><stop offset="0" stop-color="#f0a8b8"/><stop offset="1" stop-color="#d97a92"/></linearGradient></defs>
<path d="M1.5 15 L13.5 3 Q15 1.6 16.5 3 L21.5 8 Q23 9.5 21.5 11 L9.5 23 Q8 24 6.5 23 L1.5 18 Q0.3 16.5 1.5 15 Z" fill="url(#er)" stroke="#c56b82" stroke-width="0.6"/>
<path d="M6 11 L14 19" stroke="#f7d0da" stroke-width="0.8"/></svg><svg style="position:absolute;left:1640.70px;top:160.55px;" width="6.6" height="5.5" viewBox="0 0 6.6 5.5"><path d="M0 0 L6.6 0 L3.3 5.5 Z" fill="#5a5a5a"/></svg><svg style="position:absolute;left:1667.00px;top:98.00px;" width="46" height="36" viewBox="0 0 46 36">
<text x="0.5" y="18" font-family="Liberation Sans" font-size="19.5" fill="#3d86d8">A</text>
<text x="1.5" y="35" font-family="Liberation Sans" font-size="19.5" fill="#5b5b5b">Z</text>
<defs><linearGradient id="fn" x1="0" y1="0" x2="1" y2="0"><stop offset="0" stop-color="#6d6d6d"/><stop offset="0.5" stop-color="#a9a9a9"/><stop offset="1" stop-color="#6d6d6d"/></linearGradient></defs>
<path d="M17.5 7 Q17.5 4.5 28.5 4.5 Q40 4.5 40 7 L31.5 17 L31.5 27 Q31.5 29.5 28.5 29.5 Q26 29.5 26 27 L26 17 Z" fill="url(#fn)"/>
<ellipse cx="28.7" cy="7" rx="11" ry="2.5" fill="#dcdcdc" stroke="#8a8a8a" stroke-width="0.6"/></svg><svg style="position:absolute;left:1713.70px;top:113.05px;" width="6.6" height="5.5" viewBox="0 0 6.6 5.5"><path d="M0 0 L6.6 0 L3.3 5.5 Z" fill="#5a5a5a"/></svg><div style="position:absolute;left:1671.48px;top:143.63px;font-size:15.20px;line-height:15.20px;color:#1c1c1c;font-weight:normal;font-style:normal;white-space:nowrap;">Sort &amp;</div><div style="position:absolute;left:1675.43px;top:159.43px;font-size:15.20px;line-height:15.20px;color:#1c1c1c;font-weight:normal;font-style:normal;white-space:nowrap;">Filter</div><svg style="position:absolute;left:1737.00px;top:97.00px;" width="40" height="40" viewBox="0 0 40 40"><circle cx="15" cy="15" r="11.5" fill="none" stroke="#4d4d4d" stroke-width="4.5"/><path d="M23.5 23.5 L35 35" stroke="#4d4d4d" stroke-width="5.2" stroke-linecap="round"/></svg><svg style="position:absolute;left:1782.40px;top:113.05px;" width="6.6" height="5.5" viewBox="0 0 6.6 5.5"><path d="M0 0 L6.6 0 L3.3 5.5 Z" fill="#5a5a5a"/></svg><div style="position:absolute;left:1739.54px;top:143.63px;font-size:15.20px;line-height:15.20px;color:#1c1c1c;font-weight:normal;font-style:normal;white-space:nowrap;">Find &amp;</div><div style="position:absolute;left:1740.61px;top:159.43px;font-size:15.20px;line-height:15.20px;color:#1c1c1c;font-weight:normal;font-style:normal;white-space:nowrap;">Select</div><div style="position:absolute;left:1805.50px;top:90.60px;width:1.20px;height:83.20px;background:#d2d2d2;"></div><svg style="position:absolute;left:1852.00px;top:98.00px;" width="38" height="42" viewBox="0 0 38 42">
<path d="M2.5 4 Q2.5 1.5 5 1.5 L20 1.5 L26.5 8 L26.5 18" fill="none" stroke="#2f72d8" stroke-width="1.9"/>
<path d="M2.5 4 L2.5 30.5 Q2.5 33 5 33 L14 33" fill="none" stroke="#2f72d8" stroke-width="1.9"/>
<path d="M20 1.5 Q20 8 26.5 8" fill="none" stroke="#2f72d8" stroke-width="1.6"/>
<path d="M7.5 22.5 Q11 16 13 8.5 Q14 5 15 8.5 Q15.5 13 20.5 19.5 Q22.5 21 18 20.5 Q12 20 8.5 23.5 Q6.5 25 7.5 22.5 Z" fill="none" stroke="#2f72d8" stroke-width="1.3"/>
<g transform="rotate(-45 25.5 31)"><rect x="17" y="27.2" width="10" height="7.6" rx="3.8" fill="none" stroke="#2f72d8" stroke-width="2"/><rect x="24" y="27.2" width="10" height="7.6" rx="3.8" fill="none" stroke="#2f72d8" stroke-width="2"/></g></svg><div style="position:absolute;left:1826.00px;top:143.63px;font-size:15.20px;line-height:15.20px;color:#1c1c1c;font-weight:normal;font-style:normal;white-space:nowrap;">Create PDF</div><div style="position:absolute;left:1818.59px;top:159.43px;font-size:15.20px;line-height:15.20px;color:#1c1c1c;font-weight:normal;font-style:normal;white-space:nowrap;">and share link</div><div style="position:absolute;left:0.00px;top:181.20px;width:1946.00px;height:35.30px;background:#fdfdfd;"></div><div style="position:absolute;left:254.00px;top:186.40px;width:1662.00px;height:25.20px;background:#fafafa;"></div><div style="position:absolute;left:0.00px;top:181.50px;width:115.00px;height:34.60px;background:#fff;border-left:1.5px solid #c6c6c6;border-right:2px solid #cdcdcd;"></div><div style="position:absolute;left:12.87px;top:191.15px;font-size:16.60px;line-height:16.60px;color:#111;font-weight:normal;font-style:normal;white-space:nowrap;transform:scaleX(1.0682);transform-origin:0 0;">U16</div><svg style="position:absolute;left:98.00px;top:186.00px;" width="11" height="25" viewBox="0 0 11 25"><path d="M0.5 7.5 L5.5 0.8 L10.5 7.5 Z M0.5 16.5 L10.5 16.5 L5.5 23.3 Z" fill="#6a6a6a"/></svg><svg style="position:absolute;left:134.00px;top:191.00px;" width="17" height="17" viewBox="0 0 17 17"><path d="M2 2 L15 15 M15 2 L2 15" stroke="#c6c6c6" stroke-width="2.2" stroke-linecap="round"/></svg><svg style="position:absolute;left:172.00px;top:191.00px;" width="21" height="17" viewBox="0 0 21 17"><path d="M2 8.5 L8 14.5 L19 2.5" stroke="#c6c6c6" stroke-width="2.4" fill="none" stroke-linecap="round" stroke-linejoin="round"/></svg><div style="position:absolute;left:212.63px;top:188.22px;font-size:21.00px;line-height:21.00px;color:#2a2a2a;font-weight:normal;font-style:italic;white-space:nowrap;transform:scaleX(1.1859);transform-origin:0 0;font-family:'Liberation Serif',serif;">fx</div><div style="position:absolute;left:243.10px;top:189.00px;width:1.20px;height:20.50px;background:#dcdcdc;"></div><svg style="position:absolute;left:1931.00px;top:195.00px;" width="9.5" height="7.5" viewBox="0 0 9.5 7.5"><path d="M0 0 L9.5 0 L4.75 7.3 Z" fill="#5e5e5e"/></svg><div style="position:absolute;left:0.00px;top:216.00px;width:1946.00px;height:1.10px;background:#a9a9a9;"></div><div style="position:absolute;left:0.00px;top:217.10px;width:1946.00px;height:2.00px;background:#f2f2f2;"></div><div style="position:absolute;left:0.00px;top:219.00px;width:1946.00px;height:1.10px;background:#b4b4b4;"></div><div style="position:absolute;left:0.00px;top:220.10px;width:1946.00px;height:26.20px;background:linear-gradient(180deg,#fcfcfc,#f4f4f4);"></div><div style="position:absolute;left:1828.60px;top:220.10px;width:117.40px;height:26.20px;background:#efefef;"></div><div style="position:absolute;left:0.00px;top:246.20px;width:1946.00px;height:1.20px;background:#c3c3c3;"></div><div style="position:absolute;left:1828.60px;top:244.30px;width:117.40px;height:2.80px;background:#0f6a31;"></div><div style="position:absolute;left:38.00px;top:222.00px;width:1.00px;height:23.00px;background:#dddddd;"></div><div style="position:absolute;left:118.00px;top:222.00px;width:1.00px;height:23.00px;background:#dddddd;"></div><div style="position:absolute;left:73.77px;top:226.49px;font-size:13.60px;line-height:13.60px;color:#4a4a4a;font-weight:normal;font-style:normal;white-space:nowrap;">B</div><div style="position:absolute;left:247.50px;top:222.00px;width:1.00px;height:23.00px;background:#dddddd;"></div><div style="position:absolute;left:178.25px;top:226.49px;font-size:13.60px;line-height:13.60px;color:#4a4a4a;font-weight:normal;font-style:normal;white-space:nowrap;">C</div><div style="position:absolute;left:363.80px;top:222.00px;width:1.00px;height:23.00px;background:#dddddd;"></div><div style="position:absolute;left:301.02px;top:226.49px;font-size:13.60px;line-height:13.60px;color:#4a4a4a;font-weight:normal;font-style:normal;white-space:nowrap;">D</div><div style="position:absolute;left:443.30px;top:222.00px;width:1.00px;height:23.00px;background:#dddddd;"></div><div style="position:absolute;left:399.26px;top:226.49px;font-size:13.60px;line-height:13.60px;color:#4a4a4a;font-weight:normal;font-style:normal;white-space:nowrap;">E</div><div style="position:absolute;left:522.90px;top:222.00px;width:1.00px;height:23.00px;background:#dddddd;"></div><div style="position:absolute;left:479.18px;top:226.49px;font-size:13.60px;line-height:13.60px;color:#4a4a4a;font-weight:normal;font-style:normal;white-space:nowrap;">F</div><div style="position:absolute;left:602.70px;top:222.00px;width:1.00px;height:23.00px;background:#dddddd;"></div><div style="position:absolute;left:558.17px;top:226.49px;font-size:13.60px;line-height:13.60px;color:#4a4a4a;font-weight:normal;font-style:normal;white-space:nowrap;">G</div><div style="position:absolute;left:682.30px;top:222.00px;width:1.00px;height:23.00px;background:#dddddd;"></div><div style="position:absolute;left:638.10px;top:226.49px;font-size:13.60px;line-height:13.60px;color:#4a4a4a;font-weight:normal;font-style:normal;white-space:nowrap;">H</div><div style="position:absolute;left:762.40px;top:222.00px;width:1.00px;height:23.00px;background:#dddddd;"></div><div style="position:absolute;left:720.98px;top:226.49px;font-size:13.60px;line-height:13.60px;color:#4a4a4a;font-weight:normal;font-style:normal;white-space:nowrap;">I</div><div style="position:absolute;left:842.20px;top:222.00px;width:1.00px;height:23.00px;background:#dddddd;"></div><div style="position:absolute;left:799.81px;top:226.49px;font-size:13.60px;line-height:13.60px;color:#4a4a4a;font-weight:normal;font-style:normal;white-space:nowrap;">J</div><div style="position:absolute;left:958.10px;top:222.00px;width:1.00px;height:23.00px;background:#dddddd;"></div><div style="position:absolute;left:895.65px;top:226.49px;font-size:13.60px;line-height:13.60px;color:#4a4a4a;font-weight:normal;font-style:normal;white-space:nowrap;">K</div><div style="position:absolute;left:1037.90px;top:222.00px;width:1.00px;height:23.00px;background:#dddddd;"></div><div style="position:absolute;left:994.39px;top:226.49px;font-size:13.60px;line-height:13.60px;color:#4a4a4a;font-weight:normal;font-style:normal;white-space:nowrap;">L</div><div style="position:absolute;left:1117.80px;top:222.00px;width:1.00px;height:23.00px;background:#dddddd;"></div><div style="position:absolute;left:1072.71px;top:226.49px;font-size:13.60px;line-height:13.60px;color:#4a4a4a;font-weight:normal;font-style:normal;white-space:nowrap;">M</div><div style="position:absolute;left:1234.00px;top:222.00px;width:1.00px;height:23.00px;background:#dddddd;"></div><div style="position:absolute;left:1171.50px;top:226.49px;font-size:13.60px;line-height:13.60px;color:#4a4a4a;font-weight:normal;font-style:normal;white-space:nowrap;">N</div><div style="position:absolute;left:1297.30px;top:222.00px;width:1.00px;height:23.00px;background:#dddddd;"></div><div style="position:absolute;left:1260.88px;top:226.49px;font-size:13.60px;line-height:13.60px;color:#4a4a4a;font-weight:normal;font-style:normal;white-space:nowrap;">O</div><div style="position:absolute;left:1389.00px;top:222.00px;width:1.00px;height:23.00px;background:#dddddd;"></div><div style="position:absolute;left:1338.92px;top:226.49px;font-size:13.60px;line-height:13.60px;color:#4a4a4a;font-weight:normal;font-style:normal;white-space:nowrap;">P</div><div style="position:absolute;left:1480.00px;top:222.00px;width:1.00px;height:23.00px;background:#dddddd;"></div><div style="position:absolute;left:1429.73px;top:226.49px;font-size:13.60px;line-height:13.60px;color:#4a4a4a;font-weight:normal;font-style:normal;white-space:nowrap;">Q</div><div style="position:absolute;left:1596.10px;top:222.00px;width:1.00px;height:23.00px;background:#dddddd;"></div><div style="position:absolute;left:1533.42px;top:226.49px;font-size:13.60px;line-height:13.60px;color:#4a4a4a;font-weight:normal;font-style:normal;white-space:nowrap;">R</div><div style="position:absolute;left:1712.40px;top:222.00px;width:1.00px;height:23.00px;background:#dddddd;"></div><div style="position:absolute;left:1650.23px;top:226.49px;font-size:13.60px;line-height:13.60px;color:#4a4a4a;font-weight:normal;font-style:normal;white-space:nowrap;">S</div><div style="position:absolute;left:1828.10px;top:222.00px;width:1.00px;height:23.00px;background:#dddddd;"></div><div style="position:absolute;left:1766.60px;top:226.49px;font-size:13.60px;line-height:13.60px;color:#4a4a4a;font-weight:normal;font-style:normal;white-space:nowrap;">T</div><div style="position:absolute;left:1959.50px;top:222.00px;width:1.00px;height:23.00px;background:#dddddd;"></div><div style="position:absolute;left:1882.30px;top:226.49px;font-size:13.60px;line-height:13.60px;color:#0f6a31;font-weight:normal;font-style:normal;white-space:nowrap;">U</div><div style="position:absolute;left:30.00px;top:220.10px;width:1.30px;height:1946.00px;background:#c3c3c3;"></div><svg style="position:absolute;left:9.00px;top:225.00px;" width="19" height="19" viewBox="0 0 19 19"><path d="M1 18 L18 1 L18 18 Z" fill="#d5d5d5"/></svg><div style="position:absolute;left:38.50px;top:270.25px;width:1196.00px;height:24.35px;background:#ddebf7;"></div><div style="position:absolute;left:1297.80px;top:270.25px;width:298.80px;height:24.35px;background:#ddebf7;"></div><div style="position:absolute;left:38.50px;top:586.80px;width:1907.50px;height:24.35px;background:#ddebf7;"></div><div style="position:absolute;left:41.36px;top:275.05px;font-size:17.90px;line-height:17.90px;color:#000;font-weight:bold;font-style:normal;white-space:nowrap;transform:scaleX(0.9839);transform-origin:0 0;">MY TRADING RULES</div><div style="position:absolute;left:1301.32px;top:275.25px;font-size:17.90px;line-height:17.90px;color:#000;font-weight:bold;font-style:normal;white-space:nowrap;">TRADING STRATEGY STATISTICS</div><div style="position:absolute;left:41.93px;top:590.05px;font-size:17.90px;line-height:17.90px;color:#000;font-weight:bold;font-style:normal;white-space:nowrap;transform:scaleX(0.9618);transform-origin:0 0;">TRADING JOURNAL</div><div style="position:absolute;left:846.13px;top:301.39px;font-size:12.30px;line-height:12.30px;color:#000;font-weight:normal;font-style:italic;white-space:nowrap;">Sample Input</div><svg style="position:absolute;left:950.00px;top:295.50px;" width="9" height="8" viewBox="0 0 9 8"><path d="M0 0 L8.5 0 L8.5 7.5 Z" fill="#e00000"/></svg><div style="position:absolute;left:38.50px;top:318.95px;width:325.80px;height:170.45px;background:#214d78;"></div><div style="position:absolute;left:364.30px;top:318.95px;width:478.40px;height:170.45px;background:#bdd7ee;"></div><div style="position:absolute;left:958.60px;top:318.95px;width:275.90px;height:24.35px;background:#bdd7ee;"></div><div style="position:absolute;left:958.60px;top:343.30px;width:275.90px;height:24.35px;background:#fff;"></div><div style="position:absolute;left:958.60px;top:367.65px;width:275.90px;height:24.35px;background:#bdd7ee;"></div><div style="position:absolute;left:958.60px;top:392.00px;width:275.90px;height:24.35px;background:#fff;"></div><div style="position:absolute;left:958.60px;top:416.35px;width:275.90px;height:24.35px;background:#bdd7ee;"></div><div style="position:absolute;left:958.60px;top:440.70px;width:275.90px;height:24.35px;background:#bdd7ee;"></div><div style="position:absolute;left:958.60px;top:465.05px;width:275.90px;height:24.35px;background:#fff;"></div><div style="position:absolute;left:40.93px;top:325.10px;font-size:16.30px;line-height:16.30px;color:#fff;font-weight:bold;font-style:normal;white-space:nowrap;transform:scaleX(1.0117);transform-origin:0 0;">Rule #1 - Markets</div><div style="position:absolute;left:600.61px;top:325.08px;font-size:16.45px;line-height:16.45px;color:#000;font-weight:normal;font-style:normal;white-space:nowrap;transform:scaleX(1.0042);transform-origin:0 0;">I will trade the following markets</div><div style="position:absolute;left:846.32px;top:325.54px;font-size:15.07px;line-height:15.07px;color:#0563c1;font-weight:normal;font-style:normal;white-space:nowrap;text-decoration:underline;">See Markets list</div><div style="position:absolute;left:40.95px;top:349.45px;font-size:16.30px;line-height:16.30px;color:#fff;font-weight:bold;font-style:normal;white-space:nowrap;transform:scaleX(0.9883);transform-origin:0 0;">Rule #2 - Identify potential trade set-ups</div><div style="position:absolute;left:354.82px;top:349.43px;font-size:16.45px;line-height:16.45px;color:#000;font-weight:normal;font-style:normal;white-space:nowrap;">I will enter a trade when the price breaks out and closes above the</div><div style="position:absolute;left:860.11px;top:350.68px;font-size:14.50px;line-height:14.50px;color:#000;font-weight:normal;font-style:italic;white-space:nowrap;">50/200 EMA</div><div style="position:absolute;left:961.94px;top:350.69px;font-size:14.60px;line-height:14.60px;color:#000;font-weight:normal;font-style:italic;white-space:nowrap;transform:scaleX(0.9879);transform-origin:0 0;">50 crosses above 200</div><div style="position:absolute;left:40.95px;top:373.80px;font-size:16.30px;line-height:16.30px;color:#fff;font-weight:bold;font-style:normal;white-space:nowrap;transform:scaleX(0.9921);transform-origin:0 0;">Rule #3 - Entering the trade</div><div style="position:absolute;left:517.02px;top:373.78px;font-size:16.45px;line-height:16.45px;color:#000;font-weight:normal;font-style:normal;white-space:nowrap;transform:scaleX(0.9896);transform-origin:0 0;">When this trigger is met I will enter the trade</div><div style="position:absolute;left:881.75px;top:375.03px;font-size:14.50px;line-height:14.50px;color:#000;font-weight:normal;font-style:italic;white-space:nowrap;">$0.03</div><div style="position:absolute;left:961.71px;top:375.04px;font-size:14.60px;line-height:14.60px;color:#000;font-weight:normal;font-style:normal;white-space:nowrap;transform:scaleX(1.0169);transform-origin:0 0;">above the high of yesterday&#x27;s close</div><div style="position:absolute;left:40.95px;top:398.15px;font-size:16.30px;line-height:16.30px;color:#fff;font-weight:bold;font-style:normal;white-space:nowrap;transform:scaleX(0.9873);transform-origin:0 0;">Rule #4 - Stop Loss Exit</div><div style="position:absolute;left:625.10px;top:398.13px;font-size:16.45px;line-height:16.45px;color:#000;font-weight:normal;font-style:normal;white-space:nowrap;transform:scaleX(1.0117);transform-origin:0 0;">Initial stop loss will be placed</div><div style="position:absolute;left:895.63px;top:399.38px;font-size:14.50px;line-height:14.50px;color:#000;font-weight:normal;font-style:italic;white-space:nowrap;">3</div><div style="position:absolute;left:966.22px;top:399.39px;font-size:14.60px;line-height:14.60px;color:#000;font-weight:normal;font-style:italic;white-space:nowrap;transform:scaleX(1.0079);transform-origin:0 0;">X ATR below the purchase price</div><div style="position:absolute;left:40.94px;top:422.50px;font-size:16.30px;line-height:16.30px;color:#fff;font-weight:bold;font-style:normal;white-space:nowrap;">Rule #5 - Money Management</div><div style="position:absolute;left:669.82px;top:422.48px;font-size:16.45px;line-height:16.45px;color:#000;font-weight:normal;font-style:normal;white-space:nowrap;transform:scaleX(0.9974);transform-origin:0 0;">I will risk a maximum of</div><div style="position:absolute;left:879.39px;top:423.73px;font-size:14.50px;line-height:14.50px;color:#000;font-weight:normal;font-style:italic;white-space:nowrap;">1.00%</div><div style="position:absolute;left:961.70px;top:423.74px;font-size:14.60px;line-height:14.60px;color:#000;font-weight:normal;font-style:normal;white-space:nowrap;transform:scaleX(1.0298);transform-origin:0 0;">of my trading account on each trade</div><div style="position:absolute;left:418.20px;top:446.83px;font-size:16.45px;line-height:16.45px;color:#000;font-weight:normal;font-style:normal;white-space:nowrap;transform:scaleX(0.9907);transform-origin:0 0;">For my Backtest I will start with a theoretical accout size of</div><div style="position:absolute;left:869.64px;top:448.08px;font-size:14.50px;line-height:14.50px;color:#000;font-weight:normal;font-style:italic;white-space:nowrap;">$100,000</div><div style="position:absolute;left:40.96px;top:471.20px;font-size:16.30px;line-height:16.30px;color:#fff;font-weight:bold;font-style:normal;white-space:nowrap;transform:scaleX(0.9861);transform-origin:0 0;">Rule #6 - Profit Stop Exit</div><div style="position:absolute;left:408.91px;top:471.18px;font-size:16.45px;line-height:16.45px;color:#000;font-weight:normal;font-style:normal;white-space:nowrap;transform:scaleX(1.0037);transform-origin:0 0;">I will exit a profitable trade when the price closes below the</div><div style="position:absolute;left:860.11px;top:472.43px;font-size:14.50px;line-height:14.50px;color:#000;font-weight:normal;font-style:italic;white-space:nowrap;">50/200 EMA</div><div style="position:absolute;left:961.93px;top:472.44px;font-size:14.60px;line-height:14.60px;color:#000;font-weight:normal;font-style:italic;white-space:nowrap;transform:scaleX(1.0089);transform-origin:0 0;">50 crosses below 200</div><div style="position:absolute;left:38.00px;top:318.00px;width:1197.00px;height:1.00px;background:#000;"></div><div style="position:absolute;left:38.00px;top:343.00px;width:1197.00px;height:1.00px;background:#000;"></div><div style="position:absolute;left:38.00px;top:367.00px;width:1197.00px;height:1.00px;background:#000;"></div><div style="position:absolute;left:38.00px;top:392.00px;width:1197.00px;height:1.00px;background:#000;"></div><div style="position:absolute;left:38.00px;top:416.00px;width:1197.00px;height:1.00px;background:#000;"></div><div style="position:absolute;left:38.00px;top:440.00px;width:1197.00px;height:1.00px;background:#000;"></div><div style="position:absolute;left:38.00px;top:465.00px;width:1197.00px;height:1.00px;background:#000;"></div><div style="position:absolute;left:38.00px;top:489.00px;width:1197.00px;height:1.00px;background:#000;"></div><div style="position:absolute;left:38.00px;top:318.00px;width:1.00px;height:173.00px;background:#000;"></div><div style="position:absolute;left:364.00px;top:318.00px;width:1.00px;height:173.00px;background:#000;"></div><div style="position:absolute;left:842.00px;top:318.00px;width:1.00px;height:173.00px;background:#000;"></div><div style="position:absolute;left:958.00px;top:318.00px;width:1.00px;height:173.00px;background:#000;"></div><div style="position:absolute;left:1234.00px;top:318.00px;width:1.00px;height:173.00px;background:#000;"></div><div style="position:absolute;left:1043.50px;top:496.00px;width:32.00px;height:29.00px;background:linear-gradient(#fdfdfd,#f3f3f3);border:1.3px solid #b3b3b3;border-radius:5px;box-shadow:0 0.5px 1px rgba(0,0,0,0.1);"></div><svg style="position:absolute;left:1043.50px;top:496.00px;" width="32" height="29" viewBox="0 0 32 29"><path d="M9.2 7.8 H8.6 V25 H16" fill="none" stroke="#f0891c" stroke-width="1.9"/><path d="M23.6 7.8 V13" fill="none" stroke="#f0891c" stroke-width="1.9"/><path d="M11.2 10.6 V7.9 H13.8 Q14.3 4.5 16.4 4.5 Q18.6 4.5 19 7.9 H21.5 V10.6 Z" fill="#fff" stroke="#666" stroke-width="1.1"/><rect x="18" y="13.8" width="8.6" height="11.2" rx="0.6" fill="#fff" stroke="#333" stroke-width="1.5"/></svg><div style="position:absolute;left:1297.20px;top:318.95px;width:182.80px;height:243.50px;background:#214d78;"></div><div style="position:absolute;left:1480.50px;top:318.95px;width:116.10px;height:243.50px;background:#bdd7ee;"></div><div style="position:absolute;left:476.70px;width:1000px;text-align:right;top:324.90px;font-size:16.3px;line-height:16.3px;color:#fff;font-weight:bold;font-style:normal;white-space:nowrap;">Total Trades</div><div style="position:absolute;left:1038.55px;width:1000px;text-align:center;top:324.90px;font-size:16.3px;line-height:16.3px;color:#000;font-weight:normal;font-style:normal;white-space:nowrap;">42</div><div style="position:absolute;left:476.70px;width:1000px;text-align:right;top:349.25px;font-size:16.3px;line-height:16.3px;color:#fff;font-weight:bold;font-style:normal;white-space:nowrap;">Winning Trades</div><div style="position:absolute;left:1038.55px;width:1000px;text-align:center;top:349.25px;font-size:16.3px;line-height:16.3px;color:#000;font-weight:normal;font-style:normal;white-space:nowrap;">13</div><div style="position:absolute;left:476.70px;width:1000px;text-align:right;top:373.60px;font-size:16.3px;line-height:16.3px;color:#fff;font-weight:bold;font-style:normal;white-space:nowrap;">Losing Trades</div><div style="position:absolute;left:1038.55px;width:1000px;text-align:center;top:373.60px;font-size:16.3px;line-height:16.3px;color:#000;font-weight:normal;font-style:normal;white-space:nowrap;">29</div><div style="position:absolute;left:476.70px;width:1000px;text-align:right;top:397.95px;font-size:16.3px;line-height:16.3px;color:#fff;font-weight:bold;font-style:normal;white-space:nowrap;">Win Rate</div><div style="position:absolute;left:1038.55px;width:1000px;text-align:center;top:397.95px;font-size:16.3px;line-height:16.3px;color:#000;font-weight:normal;font-style:normal;white-space:nowrap;">30.95%</div><div style="position:absolute;left:476.70px;width:1000px;text-align:right;top:422.30px;font-size:16.3px;line-height:16.3px;color:#fff;font-weight:bold;font-style:normal;white-space:nowrap;">Profit/Loss Ratio</div><div style="position:absolute;left:1038.55px;width:1000px;text-align:center;top:422.30px;font-size:16.3px;line-height:16.3px;color:#000;font-weight:normal;font-style:normal;white-space:nowrap;">2.8:1</div><div style="position:absolute;left:476.70px;width:1000px;text-align:right;top:446.65px;font-size:16.3px;line-height:16.3px;color:#fff;font-weight:bold;font-style:normal;white-space:nowrap;">Average Winning Trade</div><div style="position:absolute;left:1038.55px;width:1000px;text-align:center;top:446.65px;font-size:16.3px;line-height:16.3px;color:#000;font-weight:normal;font-style:normal;white-space:nowrap;">$8,755.61</div><div style="position:absolute;left:476.70px;width:1000px;text-align:right;top:471.00px;font-size:16.3px;line-height:16.3px;color:#fff;font-weight:bold;font-style:normal;white-space:nowrap;">Average Losing Trade</div><div style="position:absolute;left:1038.55px;width:1000px;text-align:center;top:471.00px;font-size:16.3px;line-height:16.3px;color:#000;font-weight:normal;font-style:normal;white-space:nowrap;">-$2,597.84</div><div style="position:absolute;left:476.70px;width:1000px;text-align:right;top:495.35px;font-size:16.3px;line-height:16.3px;color:#fff;font-weight:bold;font-style:normal;white-space:nowrap;">Biggest Winner</div><div style="position:absolute;left:1038.55px;width:1000px;text-align:center;top:495.35px;font-size:16.3px;line-height:16.3px;color:#000;font-weight:normal;font-style:normal;white-space:nowrap;">$22,140.55</div><div style="position:absolute;left:476.70px;width:1000px;text-align:right;top:519.70px;font-size:16.3px;line-height:16.3px;color:#fff;font-weight:bold;font-style:normal;white-space:nowrap;">Total Profit</div><div style="position:absolute;left:1038.55px;width:1000px;text-align:center;top:519.70px;font-size:16.3px;line-height:16.3px;color:#000;font-weight:normal;font-style:normal;white-space:nowrap;">$38,485.47</div><div style="position:absolute;left:476.70px;width:1000px;text-align:right;top:544.05px;font-size:16.3px;line-height:16.3px;color:#fff;font-weight:bold;font-style:normal;white-space:nowrap;">Expectency Per Trade</div><div style="position:absolute;left:1038.55px;width:1000px;text-align:center;top:544.05px;font-size:16.3px;line-height:16.3px;color:#000;font-weight:normal;font-style:normal;white-space:nowrap;">$916.32</div><div style="position:absolute;left:1297.00px;top:318.00px;width:300.00px;height:1.00px;background:#666666;"></div><div style="position:absolute;left:1297.00px;top:343.00px;width:300.00px;height:1.00px;background:#666666;"></div><div style="position:absolute;left:1297.00px;top:367.00px;width:300.00px;height:1.00px;background:#666666;"></div><div style="position:absolute;left:1297.00px;top:392.00px;width:300.00px;height:1.00px;background:#666666;"></div><div style="position:absolute;left:1297.00px;top:416.00px;width:300.00px;height:1.00px;background:#666666;"></div><div style="position:absolute;left:1297.00px;top:440.00px;width:300.00px;height:1.00px;background:#666666;"></div><div style="position:absolute;left:1297.00px;top:465.00px;width:300.00px;height:1.00px;background:#666666;"></div><div style="position:absolute;left:1297.00px;top:489.00px;width:300.00px;height:1.00px;background:#666666;"></div><div style="position:absolute;left:1297.00px;top:513.00px;width:300.00px;height:1.00px;background:#666666;"></div><div style="position:absolute;left:1297.00px;top:538.00px;width:300.00px;height:1.00px;background:#666666;"></div><div style="position:absolute;left:1297.00px;top:562.00px;width:300.00px;height:1.00px;background:#666666;"></div><div style="position:absolute;left:1480.00px;top:318.00px;width:1.00px;height:245.00px;background:#6e6e6e;"></div><div style="position:absolute;left:38.50px;top:636.60px;width:1907.50px;height:60.80px;background:#214d78;"></div><div style="position:absolute;left:38.00px;top:637.00px;width:1908.00px;height:1.00px;background:#4f4f4f;"></div><div style="position:absolute;left:-221.50px;width:600px;text-align:center;top:639.36px;font-size:14.7px;line-height:14.7px;color:#fff;font-weight:bold;white-space:nowrap;">Rule #1 -</div><div style="position:absolute;left:-221.50px;width:600px;text-align:center;top:658.26px;font-size:14.7px;line-height:14.7px;color:#fff;font-weight:bold;white-space:nowrap;">Market</div><div style="position:absolute;left:-221.50px;width:600px;text-align:center;top:677.16px;font-size:14.7px;line-height:14.7px;color:#fff;font-weight:bold;white-space:nowrap;">Symbol</div><div style="position:absolute;left:-116.75px;width:600px;text-align:center;top:639.36px;font-size:14.7px;line-height:14.7px;color:#fff;font-weight:bold;white-space:nowrap;">Market Name</div><div style="position:absolute;left:6.15px;width:600px;text-align:center;top:639.36px;font-size:14.7px;line-height:14.7px;color:#fff;font-weight:bold;white-space:nowrap;">Rule #2 -Set-up</div><div style="position:absolute;left:6.15px;width:600px;text-align:center;top:658.26px;font-size:14.7px;line-height:14.7px;color:#fff;font-weight:bold;white-space:nowrap;">Price $</div><div style="position:absolute;left:104.05px;width:600px;text-align:center;top:639.36px;font-size:14.7px;line-height:14.7px;color:#fff;font-weight:bold;white-space:nowrap;">Rule #3 -</div><div style="position:absolute;left:104.05px;width:600px;text-align:center;top:658.26px;font-size:14.7px;line-height:14.7px;color:#fff;font-weight:bold;white-space:nowrap;">Trigger $</div><div style="position:absolute;left:183.60px;width:600px;text-align:center;top:639.36px;font-size:14.7px;line-height:14.7px;color:#fff;font-weight:bold;white-space:nowrap;">Buy Price</div><div style="position:absolute;left:183.60px;width:600px;text-align:center;top:658.26px;font-size:14.7px;line-height:14.7px;color:#fff;font-weight:bold;white-space:nowrap;">$</div><div style="position:absolute;left:263.30px;width:600px;text-align:center;top:639.36px;font-size:14.7px;line-height:14.7px;color:#fff;font-weight:bold;white-space:nowrap;">Rule #4 -</div><div style="position:absolute;left:263.30px;width:600px;text-align:center;top:658.26px;font-size:14.7px;line-height:14.7px;color:#fff;font-weight:bold;white-space:nowrap;">ATR $</div><div style="position:absolute;left:343.00px;width:600px;text-align:center;top:639.36px;font-size:14.7px;line-height:14.7px;color:#fff;font-weight:bold;white-space:nowrap;">Rule #4 -</div><div style="position:absolute;left:343.00px;width:600px;text-align:center;top:658.26px;font-size:14.7px;line-height:14.7px;color:#fff;font-weight:bold;white-space:nowrap;">ATR x</div><div style="position:absolute;left:422.85px;width:600px;text-align:center;top:639.36px;font-size:14.7px;line-height:14.7px;color:#fff;font-weight:bold;white-space:nowrap;">Rule #4 -</div><div style="position:absolute;left:422.85px;width:600px;text-align:center;top:658.26px;font-size:14.7px;line-height:14.7px;color:#fff;font-weight:bold;white-space:nowrap;">Stop Loss</div><div style="position:absolute;left:422.85px;width:600px;text-align:center;top:677.16px;font-size:14.7px;line-height:14.7px;color:#fff;font-weight:bold;white-space:nowrap;">$ - ATR</div><div style="position:absolute;left:502.80px;width:600px;text-align:center;top:639.36px;font-size:14.7px;line-height:14.7px;color:#fff;font-weight:bold;white-space:nowrap;">Stop Loss</div><div style="position:absolute;left:502.80px;width:600px;text-align:center;top:658.26px;font-size:14.7px;line-height:14.7px;color:#fff;font-weight:bold;white-space:nowrap;">$ -Other</div><div style="position:absolute;left:600.65px;width:600px;text-align:center;top:639.36px;font-size:14.7px;line-height:14.7px;color:#fff;font-weight:bold;white-space:nowrap;">Account $</div><div style="position:absolute;left:698.50px;width:600px;text-align:center;top:639.36px;font-size:14.7px;line-height:14.7px;color:#fff;font-weight:bold;white-space:nowrap;">Max Loss</div><div style="position:absolute;left:698.50px;width:600px;text-align:center;top:658.26px;font-size:14.7px;line-height:14.7px;color:#fff;font-weight:bold;white-space:nowrap;">%</div><div style="position:absolute;left:778.35px;width:600px;text-align:center;top:639.36px;font-size:14.7px;line-height:14.7px;color:#fff;font-weight:bold;white-space:nowrap;">Comm. $</div><div style="position:absolute;left:876.40px;width:600px;text-align:center;top:639.36px;font-size:14.7px;line-height:14.7px;color:#fff;font-weight:bold;white-space:nowrap;">Max Loss $</div><div style="position:absolute;left:966.15px;width:600px;text-align:center;top:639.36px;font-size:14.7px;line-height:14.7px;color:#fff;font-weight:bold;white-space:nowrap;">Exc.</div><div style="position:absolute;left:966.15px;width:600px;text-align:center;top:658.26px;font-size:14.7px;line-height:14.7px;color:#fff;font-weight:bold;white-space:nowrap;">Rate $</div><div style="position:absolute;left:1043.65px;width:600px;text-align:center;top:639.36px;font-size:14.7px;line-height:14.7px;color:#fff;font-weight:bold;white-space:nowrap;"># of Shares</div><div style="position:absolute;left:1135.00px;width:600px;text-align:center;top:639.36px;font-size:14.7px;line-height:14.7px;color:#fff;font-weight:bold;white-space:nowrap;">Round to</div><div style="position:absolute;left:1238.55px;width:600px;text-align:center;top:639.36px;font-size:14.7px;line-height:14.7px;color:#fff;font-weight:bold;white-space:nowrap;">Estimated Cost</div><div style="position:absolute;left:1238.55px;width:600px;text-align:center;top:658.26px;font-size:14.7px;line-height:14.7px;color:#fff;font-weight:bold;white-space:nowrap;">$</div><div style="position:absolute;left:1354.75px;width:600px;text-align:center;top:639.36px;font-size:14.7px;line-height:14.7px;color:#fff;font-weight:bold;white-space:nowrap;">Buy date</div><div style="position:absolute;left:1470.75px;width:600px;text-align:center;top:639.36px;font-size:14.7px;line-height:14.7px;color:#fff;font-weight:bold;white-space:nowrap;">Buy Cost $</div><div style="position:absolute;left:1587.30px;width:600px;text-align:center;top:639.36px;font-size:14.7px;line-height:14.7px;color:#fff;font-weight:bold;white-space:nowrap;">Sell Date</div><svg style="position:absolute;left:110.50px;top:636.70px;" width="7.5" height="7.5" viewBox="0 0 7.5 7.5"><path d="M0 0 L7.5 0 L7.5 7.5 Z" fill="#f00000"/></svg><svg style="position:absolute;left:356.30px;top:636.70px;" width="7.5" height="7.5" viewBox="0 0 7.5 7.5"><path d="M0 0 L7.5 0 L7.5 7.5 Z" fill="#f00000"/></svg><svg style="position:absolute;left:435.80px;top:636.70px;" width="7.5" height="7.5" viewBox="0 0 7.5 7.5"><path d="M0 0 L7.5 0 L7.5 7.5 Z" fill="#f00000"/></svg><svg style="position:absolute;left:515.40px;top:636.70px;" width="7.5" height="7.5" viewBox="0 0 7.5 7.5"><path d="M0 0 L7.5 0 L7.5 7.5 Z" fill="#f00000"/></svg><svg style="position:absolute;left:595.20px;top:636.70px;" width="7.5" height="7.5" viewBox="0 0 7.5 7.5"><path d="M0 0 L7.5 0 L7.5 7.5 Z" fill="#f00000"/></svg><svg style="position:absolute;left:674.80px;top:636.70px;" width="7.5" height="7.5" viewBox="0 0 7.5 7.5"><path d="M0 0 L7.5 0 L7.5 7.5 Z" fill="#f00000"/></svg><svg style="position:absolute;left:754.90px;top:636.70px;" width="7.5" height="7.5" viewBox="0 0 7.5 7.5"><path d="M0 0 L7.5 0 L7.5 7.5 Z" fill="#f00000"/></svg><svg style="position:absolute;left:834.70px;top:636.70px;" width="7.5" height="7.5" viewBox="0 0 7.5 7.5"><path d="M0 0 L7.5 0 L7.5 7.5 Z" fill="#f00000"/></svg><svg style="position:absolute;left:950.60px;top:636.70px;" width="7.5" height="7.5" viewBox="0 0 7.5 7.5"><path d="M0 0 L7.5 0 L7.5 7.5 Z" fill="#f00000"/></svg><svg style="position:absolute;left:1030.40px;top:636.70px;" width="7.5" height="7.5" viewBox="0 0 7.5 7.5"><path d="M0 0 L7.5 0 L7.5 7.5 Z" fill="#f00000"/></svg><svg style="position:absolute;left:1110.30px;top:636.70px;" width="7.5" height="7.5" viewBox="0 0 7.5 7.5"><path d="M0 0 L7.5 0 L7.5 7.5 Z" fill="#f00000"/></svg><svg style="position:absolute;left:1226.50px;top:636.70px;" width="7.5" height="7.5" viewBox="0 0 7.5 7.5"><path d="M0 0 L7.5 0 L7.5 7.5 Z" fill="#f00000"/></svg><svg style="position:absolute;left:1289.80px;top:636.70px;" width="7.5" height="7.5" viewBox="0 0 7.5 7.5"><path d="M0 0 L7.5 0 L7.5 7.5 Z" fill="#f00000"/></svg><svg style="position:absolute;left:1381.50px;top:636.70px;" width="7.5" height="7.5" viewBox="0 0 7.5 7.5"><path d="M0 0 L7.5 0 L7.5 7.5 Z" fill="#f00000"/></svg><svg style="position:absolute;left:1472.50px;top:636.70px;" width="7.5" height="7.5" viewBox="0 0 7.5 7.5"><path d="M0 0 L7.5 0 L7.5 7.5 Z" fill="#f00000"/></svg><svg style="position:absolute;left:1588.60px;top:636.70px;" width="7.5" height="7.5" viewBox="0 0 7.5 7.5"><path d="M0 0 L7.5 0 L7.5 7.5 Z" fill="#f00000"/></svg><svg style="position:absolute;left:1704.90px;top:636.70px;" width="7.5" height="7.5" viewBox="0 0 7.5 7.5"><path d="M0 0 L7.5 0 L7.5 7.5 Z" fill="#f00000"/></svg><svg style="position:absolute;left:1820.60px;top:636.70px;" width="7.5" height="7.5" viewBox="0 0 7.5 7.5"><path d="M0 0 L7.5 0 L7.5 7.5 Z" fill="#f00000"/></svg><svg style="position:absolute;left:1938.00px;top:636.70px;" width="7.5" height="7.5" viewBox="0 0 7.5 7.5"><path d="M0 0 L7.5 0 L7.5 7.5 Z" fill="#f00000"/></svg><div style="position:absolute;left:38.50px;top:697.40px;width:1907.50px;height:24.35px;background:#e7e6e6;"></div><div style="position:absolute;left:443.80px;top:697.40px;width:79.60px;height:24.35px;background:#e2efda;"></div><div style="position:absolute;left:682.80px;top:697.40px;width:80.10px;height:24.35px;background:#fce4d6;"></div><div style="position:absolute;left:118.50px;top:721.75px;width:129.50px;height:428.25px;background:#e7e6e6;"></div><div style="position:absolute;left:443.80px;top:721.75px;width:79.60px;height:428.25px;background:#e2efda;"></div><div style="position:absolute;left:682.80px;top:721.75px;width:80.10px;height:428.25px;background:#fce4d6;"></div><div style="position:absolute;left:1118.30px;top:721.75px;width:116.20px;height:428.25px;background:#e7e6e6;"></div><div style="position:absolute;left:1297.80px;top:721.75px;width:91.70px;height:428.25px;background:#e7e6e6;"></div><div style="position:absolute;left:1480.50px;top:721.75px;width:116.10px;height:428.25px;background:#e7e6e6;"></div><div style="position:absolute;left:38.5px;top:697.40px;width:80px;height:24.35px;overflow:hidden;"><div style="position:absolute;left:3.5px;top:7.81px;font-size:14.7px;line-height:14.7px;color:#00ac4e;font-weight:normal;font-style:italic;white-space:nowrap;transform:scaleY(1.08);transform-origin:0 12.44px;">GLD</div></div><div style="position:absolute;left:122.00px;top:705.21px;font-size:14.7px;line-height:14.7px;color:#00ac4e;font-weight:normal;font-style:italic;white-space:nowrap;transform:scaleY(1.08);transform-origin:0 12.44px;">Gold</div><div style="position:absolute;left:251.50px;top:705.21px;font-size:14.7px;line-height:14.7px;color:#00ac4e;font-weight:normal;font-style:italic;white-space:nowrap;transform:scaleY(1.08);transform-origin:0 12.44px;">$186.80</div><div style="position:absolute;left:367.80px;top:705.21px;font-size:14.7px;line-height:14.7px;color:#00ac4e;font-weight:normal;font-style:italic;white-space:nowrap;transform:scaleY(1.08);transform-origin:0 12.44px;">$0.03</div><div style="position:absolute;left:447.30px;top:705.21px;font-size:14.7px;line-height:14.7px;color:#00ac4e;font-weight:normal;font-style:italic;white-space:nowrap;transform:scaleY(1.08);transform-origin:0 12.44px;">$186.83</div><div style="position:absolute;left:526.90px;top:705.21px;font-size:14.7px;line-height:14.7px;color:#00ac4e;font-weight:normal;font-style:italic;white-space:nowrap;transform:scaleY(1.08);transform-origin:0 12.44px;">$1.72</div><div style="position:absolute;left:143.00px;width:1000px;text-align:center;top:705.21px;font-size:14.7px;line-height:14.7px;color:#00ac4e;font-weight:normal;font-style:italic;white-space:nowrap;transform:scaleY(1.08);transform-origin:0 12.44px;">3</div><div style="position:absolute;left:686.30px;top:705.21px;font-size:14.7px;line-height:14.7px;color:#00ac4e;font-weight:normal;font-style:italic;white-space:nowrap;transform:scaleY(1.08);transform-origin:0 12.44px;">$181.67</div><div style="position:absolute;left:766.40px;top:705.21px;font-size:14.7px;line-height:14.7px;color:#00ac4e;font-weight:normal;font-style:italic;white-space:nowrap;transform:scaleY(1.08);transform-origin:0 12.44px;">$0.00</div><div style="position:absolute;left:846.20px;top:705.21px;font-size:14.7px;line-height:14.7px;color:#00ac4e;font-weight:normal;font-style:italic;white-space:nowrap;transform:scaleY(1.08);transform-origin:0 12.44px;">$288,000.00</div><div style="position:absolute;left:498.50px;width:1000px;text-align:center;top:705.21px;font-size:14.7px;line-height:14.7px;color:#00ac4e;font-weight:normal;font-style:italic;white-space:nowrap;transform:scaleY(1.08);transform-origin:0 12.44px;">1.00%</div><div style="position:absolute;left:578.35px;width:1000px;text-align:center;top:705.21px;font-size:14.7px;line-height:14.7px;color:#00ac4e;font-weight:normal;font-style:italic;white-space:nowrap;transform:scaleY(1.08);transform-origin:0 12.44px;">$9.95</div><div style="position:absolute;left:1121.80px;top:705.21px;font-size:14.7px;line-height:14.7px;color:#00ac4e;font-weight:normal;font-style:italic;white-space:nowrap;transform:scaleY(1.08);transform-origin:0 12.44px;">$2,860.10</div><div style="position:absolute;left:766.15px;width:1000px;text-align:center;top:705.21px;font-size:14.7px;line-height:14.7px;color:#00ac4e;font-weight:normal;font-style:italic;white-space:nowrap;transform:scaleY(1.08);transform-origin:0 12.44px;">$1.37</div><div style="position:absolute;left:843.65px;width:1000px;text-align:center;top:705.21px;font-size:14.7px;line-height:14.7px;color:#00ac4e;font-weight:normal;font-style:italic;white-space:nowrap;transform:scaleY(1.08);transform-origin:0 12.44px;">405</div><div style="position:absolute;left:935.00px;width:1000px;text-align:center;top:705.21px;font-size:14.7px;line-height:14.7px;color:#00ac4e;font-weight:normal;font-style:italic;white-space:nowrap;transform:scaleY(1.08);transform-origin:0 12.44px;">400</div><div style="position:absolute;left:1484.00px;top:705.21px;font-size:14.7px;line-height:14.7px;color:#00ac4e;font-weight:normal;font-style:italic;white-space:nowrap;transform:scaleY(1.08);transform-origin:0 12.44px;">$102,392.79</div><div style="position:absolute;left:1154.75px;width:1000px;text-align:center;top:705.21px;font-size:14.7px;line-height:14.7px;color:#00ac4e;font-weight:normal;font-style:italic;white-space:nowrap;transform:scaleY(1.08);transform-origin:0 12.44px;">2023-11-30</div><div style="position:absolute;left:1716.40px;top:705.21px;font-size:14.7px;line-height:14.7px;color:#00ac4e;font-weight:normal;font-style:italic;white-space:nowrap;transform:scaleY(1.08);transform-origin:0 12.44px;">$102,852.33</div><div style="position:absolute;left:1587.30px;width:600px;text-align:center;top:705.21px;font-size:14.7px;line-height:14.7px;color:#00ac4e;font-weight:normal;font-style:italic;white-space:nowrap;transform:scaleY(1.08);transform-origin:0 12.44px;">2024-05-07</div><div style="position:absolute;left:38.5px;top:721.75px;width:80px;height:24.35px;overflow:hidden;"><div style="position:absolute;left:3.5px;top:7.81px;font-size:14.7px;line-height:14.7px;color:#aa0618;font-weight:normal;font-style:normal;white-space:nowrap;transform:scaleY(1.08);transform-origin:0 12.44px;">WOOD</div></div><div style="position:absolute;left:122.00px;top:729.56px;font-size:14.7px;line-height:14.7px;color:#aa0618;font-weight:normal;font-style:normal;white-space:nowrap;transform:scaleY(1.08);transform-origin:0 12.44px;">Lumber</div><div style="position:absolute;left:251.50px;top:729.56px;font-size:14.7px;line-height:14.7px;color:#aa0618;font-weight:normal;font-style:normal;white-space:nowrap;transform:scaleY(1.08);transform-origin:0 12.44px;">$77.63</div><div style="position:absolute;left:367.80px;top:729.56px;font-size:14.7px;line-height:14.7px;color:#aa0618;font-weight:normal;font-style:normal;white-space:nowrap;transform:scaleY(1.08);transform-origin:0 12.44px;">$0.03</div><div style="position:absolute;left:447.30px;top:729.56px;font-size:14.7px;line-height:14.7px;color:#aa0618;font-weight:normal;font-style:normal;white-space:nowrap;transform:scaleY(1.08);transform-origin:0 12.44px;">$77.66</div><div style="position:absolute;left:526.90px;top:729.56px;font-size:14.7px;line-height:14.7px;color:#aa0618;font-weight:normal;font-style:normal;white-space:nowrap;transform:scaleY(1.08);transform-origin:0 12.44px;">$0.89</div><div style="position:absolute;left:143.00px;width:1000px;text-align:center;top:729.56px;font-size:14.7px;line-height:14.7px;color:#aa0618;font-weight:normal;font-style:normal;white-space:nowrap;transform:scaleY(1.08);transform-origin:0 12.44px;">3</div><div style="position:absolute;left:686.30px;top:729.56px;font-size:14.7px;line-height:14.7px;color:#aa0618;font-weight:normal;font-style:normal;white-space:nowrap;transform:scaleY(1.08);transform-origin:0 12.44px;">$74.99</div><div style="position:absolute;left:766.40px;top:729.56px;font-size:14.7px;line-height:14.7px;color:#aa0618;font-weight:normal;font-style:normal;white-space:nowrap;transform:scaleY(1.08);transform-origin:0 12.44px;">$0.00</div><div style="position:absolute;left:846.20px;top:729.56px;font-size:14.7px;line-height:14.7px;color:#aa0618;font-weight:normal;font-style:normal;white-space:nowrap;transform:scaleY(1.08);transform-origin:0 12.44px;">$288,000.00</div><div style="position:absolute;left:498.50px;width:1000px;text-align:center;top:729.56px;font-size:14.7px;line-height:14.7px;color:#aa0618;font-weight:normal;font-style:normal;white-space:nowrap;transform:scaleY(1.08);transform-origin:0 12.44px;">1.00%</div><div style="position:absolute;left:578.35px;width:1000px;text-align:center;top:729.56px;font-size:14.7px;line-height:14.7px;color:#aa0618;font-weight:normal;font-style:normal;white-space:nowrap;transform:scaleY(1.08);transform-origin:0 12.44px;">$9.95</div><div style="position:absolute;left:1121.80px;top:729.56px;font-size:14.7px;line-height:14.7px;color:#aa0618;font-weight:normal;font-style:normal;white-space:nowrap;transform:scaleY(1.08);transform-origin:0 12.44px;">$2,860.10</div><div style="position:absolute;left:766.15px;width:1000px;text-align:center;top:729.56px;font-size:14.7px;line-height:14.7px;color:#aa0618;font-weight:normal;font-style:normal;white-space:nowrap;transform:scaleY(1.08);transform-origin:0 12.44px;">$1.37</div><div style="position:absolute;left:843.65px;width:1000px;text-align:center;top:729.56px;font-size:14.7px;line-height:14.7px;color:#aa0618;font-weight:normal;font-style:normal;white-space:nowrap;transform:scaleY(1.08);transform-origin:0 12.44px;">782</div><div style="position:absolute;left:935.00px;width:1000px;text-align:center;top:729.56px;font-size:14.7px;line-height:14.7px;color:#aa0618;font-weight:normal;font-style:normal;white-space:nowrap;transform:scaleY(1.08);transform-origin:0 12.44px;">750</div><div style="position:absolute;left:1484.00px;top:729.56px;font-size:14.7px;line-height:14.7px;color:#aa0618;font-weight:normal;font-style:normal;white-space:nowrap;transform:scaleY(1.08);transform-origin:0 12.44px;">$79,805.60</div><div style="position:absolute;left:1154.75px;width:1000px;text-align:center;top:729.56px;font-size:14.7px;line-height:14.7px;color:#aa0618;font-weight:normal;font-style:normal;white-space:nowrap;transform:scaleY(1.08);transform-origin:0 12.44px;">2023-12-05</div><div style="position:absolute;left:1716.40px;top:729.56px;font-size:14.7px;line-height:14.7px;color:#aa0618;font-weight:normal;font-style:normal;white-space:nowrap;transform:scaleY(1.08);transform-origin:0 12.44px;">$79,790.54</div><div style="position:absolute;left:1587.30px;width:600px;text-align:center;top:729.56px;font-size:14.7px;line-height:14.7px;color:#aa0618;font-weight:normal;font-style:normal;white-space:nowrap;transform:scaleY(1.08);transform-origin:0 12.44px;">2024-01-22</div><div style="position:absolute;left:38.5px;top:746.10px;width:80px;height:24.35px;overflow:hidden;"><div style="position:absolute;left:3.5px;top:7.81px;font-size:14.7px;line-height:14.7px;color:#00ac4e;font-weight:normal;font-style:normal;white-space:nowrap;transform:scaleY(1.08);transform-origin:0 12.44px;">GLD</div></div><div style="position:absolute;left:122.00px;top:753.91px;font-size:14.7px;line-height:14.7px;color:#00ac4e;font-weight:normal;font-style:normal;white-space:nowrap;transform:scaleY(1.08);transform-origin:0 12.44px;">Gold</div><div style="position:absolute;left:251.50px;top:753.91px;font-size:14.7px;line-height:14.7px;color:#00ac4e;font-weight:normal;font-style:normal;white-space:nowrap;transform:scaleY(1.08);transform-origin:0 12.44px;">$186.80</div><div style="position:absolute;left:367.80px;top:753.91px;font-size:14.7px;line-height:14.7px;color:#00ac4e;font-weight:normal;font-style:normal;white-space:nowrap;transform:scaleY(1.08);transform-origin:0 12.44px;">$0.03</div><div style="position:absolute;left:447.30px;top:753.91px;font-size:14.7px;line-height:14.7px;color:#00ac4e;font-weight:normal;font-style:normal;white-space:nowrap;transform:scaleY(1.08);transform-origin:0 12.44px;">$186.83</div><div style="position:absolute;left:526.90px;top:753.91px;font-size:14.7px;line-height:14.7px;color:#00ac4e;font-weight:normal;font-style:normal;white-space:nowrap;transform:scaleY(1.08);transform-origin:0 12.44px;">$1.72</div><div style="position:absolute;left:143.00px;width:1000px;text-align:center;top:753.91px;font-size:14.7px;line-height:14.7px;color:#00ac4e;font-weight:normal;font-style:normal;white-space:nowrap;transform:scaleY(1.08);transform-origin:0 12.44px;">3</div><div style="position:absolute;left:686.30px;top:753.91px;font-size:14.7px;line-height:14.7px;color:#00ac4e;font-weight:normal;font-style:normal;white-space:nowrap;transform:scaleY(1.08);transform-origin:0 12.44px;">$181.67</div><div style="position:absolute;left:766.40px;top:753.91px;font-size:14.7px;line-height:14.7px;color:#00ac4e;font-weight:normal;font-style:normal;white-space:nowrap;transform:scaleY(1.08);transform-origin:0 12.44px;">$0.00</div><div style="position:absolute;left:846.20px;top:753.91px;font-size:14.7px;line-height:14.7px;color:#00ac4e;font-weight:normal;font-style:normal;white-space:nowrap;transform:scaleY(1.08);transform-origin:0 12.44px;">$288,000.00</div><div style="position:absolute;left:498.50px;width:1000px;text-align:center;top:753.91px;font-size:14.7px;line-height:14.7px;color:#00ac4e;font-weight:normal;font-style:normal;white-space:nowrap;transform:scaleY(1.08);transform-origin:0 12.44px;">1.00%</div><div style="position:absolute;left:578.35px;width:1000px;text-align:center;top:753.91px;font-size:14.7px;line-height:14.7px;color:#00ac4e;font-weight:normal;font-style:normal;white-space:nowrap;transform:scaleY(1.08);transform-origin:0 12.44px;">$9.95</div><div style="position:absolute;left:1121.80px;top:753.91px;font-size:14.7px;line-height:14.7px;color:#00ac4e;font-weight:normal;font-style:normal;white-space:nowrap;transform:scaleY(1.08);transform-origin:0 12.44px;">$2,860.10</div><div style="position:absolute;left:766.15px;width:1000px;text-align:center;top:753.91px;font-size:14.7px;line-height:14.7px;color:#00ac4e;font-weight:normal;font-style:normal;white-space:nowrap;transform:scaleY(1.08);transform-origin:0 12.44px;">$1.37</div><div style="position:absolute;left:843.65px;width:1000px;text-align:center;top:753.91px;font-size:14.7px;line-height:14.7px;color:#00ac4e;font-weight:normal;font-style:normal;white-space:nowrap;transform:scaleY(1.08);transform-origin:0 12.44px;">405</div><div style="position:absolute;left:935.00px;width:1000px;text-align:center;top:753.91px;font-size:14.7px;line-height:14.7px;color:#00ac4e;font-weight:normal;font-style:normal;white-space:nowrap;transform:scaleY(1.08);transform-origin:0 12.44px;">400</div><div style="position:absolute;left:1484.00px;top:753.91px;font-size:14.7px;line-height:14.7px;color:#00ac4e;font-weight:normal;font-style:normal;white-space:nowrap;transform:scaleY(1.08);transform-origin:0 12.44px;">$102,392.79</div><div style="position:absolute;left:1154.75px;width:1000px;text-align:center;top:753.91px;font-size:14.7px;line-height:14.7px;color:#00ac4e;font-weight:normal;font-style:normal;white-space:nowrap;transform:scaleY(1.08);transform-origin:0 12.44px;">2023-11-30</div><div style="position:absolute;left:1716.40px;top:753.91px;font-size:14.7px;line-height:14.7px;color:#00ac4e;font-weight:normal;font-style:normal;white-space:nowrap;transform:scaleY(1.08);transform-origin:0 12.44px;">$102,852.33</div><div style="position:absolute;left:1587.30px;width:600px;text-align:center;top:753.91px;font-size:14.7px;line-height:14.7px;color:#00ac4e;font-weight:normal;font-style:normal;white-space:nowrap;transform:scaleY(1.08);transform-origin:0 12.44px;">2024-05-07</div><div style="position:absolute;left:38.5px;top:770.45px;width:80px;height:24.35px;overflow:hidden;"><div style="position:absolute;left:3.5px;top:7.81px;font-size:14.7px;line-height:14.7px;color:#00ac4e;font-weight:normal;font-style:normal;white-space:nowrap;transform:scaleY(1.08);transform-origin:0 12.44px;">ETHX/B.TO</div></div><div style="position:absolute;left:122.00px;top:778.26px;font-size:14.7px;line-height:14.7px;color:#00ac4e;font-weight:normal;font-style:normal;white-space:nowrap;transform:scaleY(1.08);transform-origin:0 12.44px;">Ethereum</div><div style="position:absolute;left:251.50px;top:778.26px;font-size:14.7px;line-height:14.7px;color:#00ac4e;font-weight:normal;font-style:normal;white-space:nowrap;transform:scaleY(1.08);transform-origin:0 12.44px;">$10.92</div><div style="position:absolute;left:367.80px;top:778.26px;font-size:14.7px;line-height:14.7px;color:#00ac4e;font-weight:normal;font-style:normal;white-space:nowrap;transform:scaleY(1.08);transform-origin:0 12.44px;">$0.03</div><div style="position:absolute;left:447.30px;top:778.26px;font-size:14.7px;line-height:14.7px;color:#00ac4e;font-weight:normal;font-style:normal;white-space:nowrap;transform:scaleY(1.08);transform-origin:0 12.44px;">$10.95</div><div style="position:absolute;left:526.90px;top:778.26px;font-size:14.7px;line-height:14.7px;color:#00ac4e;font-weight:normal;font-style:normal;white-space:nowrap;transform:scaleY(1.08);transform-origin:0 12.44px;">$0.34</div><div style="position:absolute;left:143.00px;width:1000px;text-align:center;top:778.26px;font-size:14.7px;line-height:14.7px;color:#00ac4e;font-weight:normal;font-style:normal;white-space:nowrap;transform:scaleY(1.08);transform-origin:0 12.44px;">3</div><div style="position:absolute;left:686.30px;top:778.26px;font-size:14.7px;line-height:14.7px;color:#00ac4e;font-weight:normal;font-style:normal;white-space:nowrap;transform:scaleY(1.08);transform-origin:0 12.44px;">$9.93</div><div style="position:absolute;left:846.20px;top:778.26px;font-size:14.7px;line-height:14.7px;color:#00ac4e;font-weight:normal;font-style:normal;white-space:nowrap;transform:scaleY(1.08);transform-origin:0 12.44px;">$288,000.00</div><div style="position:absolute;left:498.50px;width:1000px;text-align:center;top:778.26px;font-size:14.7px;line-height:14.7px;color:#00ac4e;font-weight:normal;font-style:normal;white-space:nowrap;transform:scaleY(1.08);transform-origin:0 12.44px;">1.00%</div><div style="position:absolute;left:578.35px;width:1000px;text-align:center;top:778.26px;font-size:14.7px;line-height:14.7px;color:#00ac4e;font-weight:normal;font-style:normal;white-space:nowrap;transform:scaleY(1.08);transform-origin:0 12.44px;">$9.95</div><div style="position:absolute;left:1121.80px;top:778.26px;font-size:14.7px;line-height:14.7px;color:#00ac4e;font-weight:normal;font-style:normal;white-space:nowrap;transform:scaleY(1.08);transform-origin:0 12.44px;">$2,860.10</div><div style="position:absolute;left:766.15px;width:1000px;text-align:center;top:778.26px;font-size:14.7px;line-height:14.7px;color:#00ac4e;font-weight:normal;font-style:normal;white-space:nowrap;transform:scaleY(1.08);transform-origin:0 12.44px;">$1.00</div><div style="position:absolute;left:843.65px;width:1000px;text-align:center;top:778.26px;font-size:14.7px;line-height:14.7px;color:#00ac4e;font-weight:normal;font-style:normal;white-space:nowrap;transform:scaleY(1.08);transform-origin:0 12.44px;">2,804</div><div style="position:absolute;left:935.00px;width:1000px;text-align:center;top:778.26px;font-size:14.7px;line-height:14.7px;color:#00ac4e;font-weight:normal;font-style:normal;white-space:nowrap;transform:scaleY(1.08);transform-origin:0 12.44px;">2,800</div><div style="position:absolute;left:1484.00px;top:778.26px;font-size:14.7px;line-height:14.7px;color:#00ac4e;font-weight:normal;font-style:normal;white-space:nowrap;transform:scaleY(1.08);transform-origin:0 12.44px;">$30,669.95</div><div style="position:absolute;left:1154.75px;width:1000px;text-align:center;top:778.26px;font-size:14.7px;line-height:14.7px;color:#00ac4e;font-weight:normal;font-style:normal;white-space:nowrap;transform:scaleY(1.08);transform-origin:0 12.44px;">2023-12-06</div><div style="position:absolute;left:1716.40px;top:778.26px;font-size:14.7px;line-height:14.7px;color:#00ac4e;font-weight:normal;font-style:normal;white-space:nowrap;transform:scaleY(1.08);transform-origin:0 12.44px;">$30,699.95</div><div style="position:absolute;left:1587.30px;width:600px;text-align:center;top:778.26px;font-size:14.7px;line-height:14.7px;color:#00ac4e;font-weight:normal;font-style:normal;white-space:nowrap;transform:scaleY(1.08);transform-origin:0 12.44px;">2024-03-21</div><div style="position:absolute;left:38.5px;top:794.80px;width:80px;height:24.35px;overflow:hidden;"><div style="position:absolute;left:3.5px;top:7.81px;font-size:14.7px;line-height:14.7px;color:#aa0618;font-weight:normal;font-style:normal;white-space:nowrap;transform:scaleY(1.08);transform-origin:0 12.44px;">SLX</div></div><div style="position:absolute;left:122.00px;top:802.61px;font-size:14.7px;line-height:14.7px;color:#aa0618;font-weight:normal;font-style:normal;white-space:nowrap;transform:scaleY(1.08);transform-origin:0 12.44px;">Steel</div><div style="position:absolute;left:251.50px;top:802.61px;font-size:14.7px;line-height:14.7px;color:#aa0618;font-weight:normal;font-style:normal;white-space:nowrap;transform:scaleY(1.08);transform-origin:0 12.44px;">$72.29</div><div style="position:absolute;left:367.80px;top:802.61px;font-size:14.7px;line-height:14.7px;color:#aa0618;font-weight:normal;font-style:normal;white-space:nowrap;transform:scaleY(1.08);transform-origin:0 12.44px;">$0.03</div><div style="position:absolute;left:447.30px;top:802.61px;font-size:14.7px;line-height:14.7px;color:#aa0618;font-weight:normal;font-style:normal;white-space:nowrap;transform:scaleY(1.08);transform-origin:0 12.44px;">$72.32</div><div style="position:absolute;left:526.90px;top:802.61px;font-size:14.7px;line-height:14.7px;color:#aa0618;font-weight:normal;font-style:normal;white-space:nowrap;transform:scaleY(1.08);transform-origin:0 12.44px;">$1.04</div><div style="position:absolute;left:143.00px;width:1000px;text-align:center;top:802.61px;font-size:14.7px;line-height:14.7px;color:#aa0618;font-weight:normal;font-style:normal;white-space:nowrap;transform:scaleY(1.08);transform-origin:0 12.44px;">3</div><div style="position:absolute;left:686.30px;top:802.61px;font-size:14.7px;line-height:14.7px;color:#aa0618;font-weight:normal;font-style:normal;white-space:nowrap;transform:scaleY(1.08);transform-origin:0 12.44px;">$69.20</div><div style="position:absolute;left:846.20px;top:802.61px;font-size:14.7px;line-height:14.7px;color:#aa0618;font-weight:normal;font-style:normal;white-space:nowrap;transform:scaleY(1.08);transform-origin:0 12.44px;">$283,000.00</div><div style="position:absolute;left:498.50px;width:1000px;text-align:center;top:802.61px;font-size:14.7px;line-height:14.7px;color:#aa0618;font-weight:normal;font-style:normal;white-space:nowrap;transform:scaleY(1.08);transform-origin:0 12.44px;">1.00%</div><div style="position:absolute;left:578.35px;width:1000px;text-align:center;top:802.61px;font-size:14.7px;line-height:14.7px;color:#aa0618;font-weight:normal;font-style:normal;white-space:nowrap;transform:scaleY(1.08);transform-origin:0 12.44px;">$9.95</div><div style="position:absolute;left:1121.80px;top:802.61px;font-size:14.7px;line-height:14.7px;color:#aa0618;font-weight:normal;font-style:normal;white-space:nowrap;transform:scaleY(1.08);transform-origin:0 12.44px;">$2,810.10</div><div style="position:absolute;left:766.15px;width:1000px;text-align:center;top:802.61px;font-size:14.7px;line-height:14.7px;color:#aa0618;font-weight:normal;font-style:normal;white-space:nowrap;transform:scaleY(1.08);transform-origin:0 12.44px;">$1.34</div><div style="position:absolute;left:843.65px;width:1000px;text-align:center;top:802.61px;font-size:14.7px;line-height:14.7px;color:#aa0618;font-weight:normal;font-style:normal;white-space:nowrap;transform:scaleY(1.08);transform-origin:0 12.44px;">672</div><div style="position:absolute;left:935.00px;width:1000px;text-align:center;top:802.61px;font-size:14.7px;line-height:14.7px;color:#aa0618;font-weight:normal;font-style:normal;white-space:nowrap;transform:scaleY(1.08);transform-origin:0 12.44px;">675</div><div style="position:absolute;left:1484.00px;top:802.61px;font-size:14.7px;line-height:14.7px;color:#aa0618;font-weight:normal;font-style:normal;white-space:nowrap;transform:scaleY(1.08);transform-origin:0 12.44px;">$65,423.39</div><div style="position:absolute;left:1154.75px;width:1000px;text-align:center;top:802.61px;font-size:14.7px;line-height:14.7px;color:#aa0618;font-weight:normal;font-style:normal;white-space:nowrap;transform:scaleY(1.08);transform-origin:0 12.44px;">2023-12-20</div><div style="position:absolute;left:1716.40px;top:802.61px;font-size:14.7px;line-height:14.7px;color:#aa0618;font-weight:normal;font-style:normal;white-space:nowrap;transform:scaleY(1.08);transform-origin:0 12.44px;">$66,727.00</div><div style="position:absolute;left:1587.30px;width:600px;text-align:center;top:802.61px;font-size:14.7px;line-height:14.7px;color:#aa0618;font-weight:normal;font-style:normal;white-space:nowrap;transform:scaleY(1.08);transform-origin:0 12.44px;">2024-01-18</div><div style="position:absolute;left:38.5px;top:819.15px;width:80px;height:24.35px;overflow:hidden;"><div style="position:absolute;left:3.5px;top:7.81px;font-size:14.7px;line-height:14.7px;color:#aa0618;font-weight:normal;font-style:normal;white-space:nowrap;transform:scaleY(1.08);transform-origin:0 12.44px;">MX.TO</div></div><div style="position:absolute;left:122.00px;top:826.96px;font-size:14.7px;line-height:14.7px;color:#aa0618;font-weight:normal;font-style:normal;white-space:nowrap;transform:scaleY(1.08);transform-origin:0 12.44px;">Methanex</div><div style="position:absolute;left:251.50px;top:826.96px;font-size:14.7px;line-height:14.7px;color:#aa0618;font-weight:normal;font-style:normal;white-space:nowrap;transform:scaleY(1.08);transform-origin:0 12.44px;">$64.79</div><div style="position:absolute;left:367.80px;top:826.96px;font-size:14.7px;line-height:14.7px;color:#aa0618;font-weight:normal;font-style:normal;white-space:nowrap;transform:scaleY(1.08);transform-origin:0 12.44px;">$0.03</div><div style="position:absolute;left:447.30px;top:826.96px;font-size:14.7px;line-height:14.7px;color:#aa0618;font-weight:normal;font-style:normal;white-space:nowrap;transform:scaleY(1.08);transform-origin:0 12.44px;">$64.82</div><div style="position:absolute;left:526.90px;top:826.96px;font-size:14.7px;line-height:14.7px;color:#aa0618;font-weight:normal;font-style:normal;white-space:nowrap;transform:scaleY(1.08);transform-origin:0 12.44px;">$1.66</div><div style="position:absolute;left:143.00px;width:1000px;text-align:center;top:826.96px;font-size:14.7px;line-height:14.7px;color:#aa0618;font-weight:normal;font-style:normal;white-space:nowrap;transform:scaleY(1.08);transform-origin:0 12.44px;">3</div><div style="position:absolute;left:686.30px;top:826.96px;font-size:14.7px;line-height:14.7px;color:#aa0618;font-weight:normal;font-style:normal;white-space:nowrap;transform:scaleY(1.08);transform-origin:0 12.44px;">$59.84</div><div style="position:absolute;left:846.20px;top:826.96px;font-size:14.7px;line-height:14.7px;color:#aa0618;font-weight:normal;font-style:normal;white-space:nowrap;transform:scaleY(1.08);transform-origin:0 12.44px;">$283,000.00</div><div style="position:absolute;left:498.50px;width:1000px;text-align:center;top:826.96px;font-size:14.7px;line-height:14.7px;color:#aa0618;font-weight:normal;font-style:normal;white-space:nowrap;transform:scaleY(1.08);transform-origin:0 12.44px;">1.00%</div><div style="position:absolute;left:578.35px;width:1000px;text-align:center;top:826.96px;font-size:14.7px;line-height:14.7px;color:#aa0618;font-weight:normal;font-style:normal;white-space:nowrap;transform:scaleY(1.08);transform-origin:0 12.44px;">$9.95</div><div style="position:absolute;left:1121.80px;top:826.96px;font-size:14.7px;line-height:14.7px;color:#aa0618;font-weight:normal;font-style:normal;white-space:nowrap;transform:scaleY(1.08);transform-origin:0 12.44px;">$2,810.10</div><div style="position:absolute;left:766.15px;width:1000px;text-align:center;top:826.96px;font-size:14.7px;line-height:14.7px;color:#aa0618;font-weight:normal;font-style:normal;white-space:nowrap;transform:scaleY(1.08);transform-origin:0 12.44px;">$1.00</div><div style="position:absolute;left:843.65px;width:1000px;text-align:center;top:826.96px;font-size:14.7px;line-height:14.7px;color:#aa0618;font-weight:normal;font-style:normal;white-space:nowrap;transform:scaleY(1.08);transform-origin:0 12.44px;">564</div><div style="position:absolute;left:935.00px;width:1000px;text-align:center;top:826.96px;font-size:14.7px;line-height:14.7px;color:#aa0618;font-weight:normal;font-style:normal;white-space:nowrap;transform:scaleY(1.08);transform-origin:0 12.44px;">568</div><div style="position:absolute;left:1484.00px;top:826.96px;font-size:14.7px;line-height:14.7px;color:#aa0618;font-weight:normal;font-style:normal;white-space:nowrap;transform:scaleY(1.08);transform-origin:0 12.44px;">$36,827.71</div><div style="position:absolute;left:1154.75px;width:1000px;text-align:center;top:826.96px;font-size:14.7px;line-height:14.7px;color:#aa0618;font-weight:normal;font-style:normal;white-space:nowrap;transform:scaleY(1.08);transform-origin:0 12.44px;">2023-12-22</div><div style="position:absolute;left:1716.40px;top:826.96px;font-size:14.7px;line-height:14.7px;color:#aa0618;font-weight:normal;font-style:normal;white-space:nowrap;transform:scaleY(1.08);transform-origin:0 12.44px;">$36,889.19</div><div style="position:absolute;left:1587.30px;width:600px;text-align:center;top:826.96px;font-size:14.7px;line-height:14.7px;color:#aa0618;font-weight:normal;font-style:normal;white-space:nowrap;transform:scaleY(1.08);transform-origin:0 12.44px;">2024-01-12</div><div style="position:absolute;left:38.5px;top:843.50px;width:80px;height:24.35px;overflow:hidden;"><div style="position:absolute;left:3.5px;top:7.81px;font-size:14.7px;line-height:14.7px;color:#00ac4e;font-weight:normal;font-style:normal;white-space:nowrap;transform:scaleY(1.08);transform-origin:0 12.44px;">DBA</div></div><div style="position:absolute;left:122.00px;top:851.31px;font-size:14.7px;line-height:14.7px;color:#00ac4e;font-weight:normal;font-style:normal;white-space:nowrap;transform:scaleY(1.08);transform-origin:0 12.44px;">Agriculture</div><div style="position:absolute;left:251.50px;top:851.31px;font-size:14.7px;line-height:14.7px;color:#00ac4e;font-weight:normal;font-style:normal;white-space:nowrap;transform:scaleY(1.08);transform-origin:0 12.44px;">$21.67</div><div style="position:absolute;left:367.80px;top:851.31px;font-size:14.7px;line-height:14.7px;color:#00ac4e;font-weight:normal;font-style:normal;white-space:nowrap;transform:scaleY(1.08);transform-origin:0 12.44px;">$0.03</div><div style="position:absolute;left:447.30px;top:851.31px;font-size:14.7px;line-height:14.7px;color:#00ac4e;font-weight:normal;font-style:normal;white-space:nowrap;transform:scaleY(1.08);transform-origin:0 12.44px;">$21.70</div><div style="position:absolute;left:526.90px;top:851.31px;font-size:14.7px;line-height:14.7px;color:#00ac4e;font-weight:normal;font-style:normal;white-space:nowrap;transform:scaleY(1.08);transform-origin:0 12.44px;">$0.20</div><div style="position:absolute;left:143.00px;width:1000px;text-align:center;top:851.31px;font-size:14.7px;line-height:14.7px;color:#00ac4e;font-weight:normal;font-style:normal;white-space:nowrap;transform:scaleY(1.08);transform-origin:0 12.44px;">3</div><div style="position:absolute;left:686.30px;top:851.31px;font-size:14.7px;line-height:14.7px;color:#00ac4e;font-weight:normal;font-style:normal;white-space:nowrap;transform:scaleY(1.08);transform-origin:0 12.44px;">$21.10</div><div style="position:absolute;left:846.20px;top:851.31px;font-size:14.7px;line-height:14.7px;color:#00ac4e;font-weight:normal;font-style:normal;white-space:nowrap;transform:scaleY(1.08);transform-origin:0 12.44px;">$265,000.00</div><div style="position:absolute;left:498.50px;width:1000px;text-align:center;top:851.31px;font-size:14.7px;line-height:14.7px;color:#00ac4e;font-weight:normal;font-style:normal;white-space:nowrap;transform:scaleY(1.08);transform-origin:0 12.44px;">1.00%</div><div style="position:absolute;left:578.35px;width:1000px;text-align:center;top:851.31px;font-size:14.7px;line-height:14.7px;color:#00ac4e;font-weight:normal;font-style:normal;white-space:nowrap;transform:scaleY(1.08);transform-origin:0 12.44px;">$9.95</div><div style="position:absolute;left:1121.80px;top:851.31px;font-size:14.7px;line-height:14.7px;color:#00ac4e;font-weight:normal;font-style:normal;white-space:nowrap;transform:scaleY(1.08);transform-origin:0 12.44px;">$2,630.10</div><div style="position:absolute;left:766.15px;width:1000px;text-align:center;top:851.31px;font-size:14.7px;line-height:14.7px;color:#00ac4e;font-weight:normal;font-style:normal;white-space:nowrap;transform:scaleY(1.08);transform-origin:0 12.44px;">$1.35</div><div style="position:absolute;left:843.65px;width:1000px;text-align:center;top:851.31px;font-size:14.7px;line-height:14.7px;color:#00ac4e;font-weight:normal;font-style:normal;white-space:nowrap;transform:scaleY(1.08);transform-origin:0 12.44px;">3,247</div><div style="position:absolute;left:935.00px;width:1000px;text-align:center;top:851.31px;font-size:14.7px;line-height:14.7px;color:#00ac4e;font-weight:normal;font-style:normal;white-space:nowrap;transform:scaleY(1.08);transform-origin:0 12.44px;">3,272</div><div style="position:absolute;left:1484.00px;top:851.31px;font-size:14.7px;line-height:14.7px;color:#00ac4e;font-weight:normal;font-style:normal;white-space:nowrap;transform:scaleY(1.08);transform-origin:0 12.44px;">$95,863.19</div><div style="position:absolute;left:1154.75px;width:1000px;text-align:center;top:851.31px;font-size:14.7px;line-height:14.7px;color:#00ac4e;font-weight:normal;font-style:normal;white-space:nowrap;transform:scaleY(1.08);transform-origin:0 12.44px;">2024-02-05</div><div style="position:absolute;left:1716.40px;top:851.31px;font-size:14.7px;line-height:14.7px;color:#00ac4e;font-weight:normal;font-style:normal;white-space:nowrap;transform:scaleY(1.08);transform-origin:0 12.44px;">$95,859.44</div><div style="position:absolute;left:1587.30px;width:600px;text-align:center;top:851.31px;font-size:14.7px;line-height:14.7px;color:#00ac4e;font-weight:normal;font-style:normal;white-space:nowrap;transform:scaleY(1.08);transform-origin:0 12.44px;">2024-05-06</div><div style="position:absolute;left:38.5px;top:867.85px;width:80px;height:24.35px;overflow:hidden;"><div style="position:absolute;left:3.5px;top:7.81px;font-size:14.7px;line-height:14.7px;color:#00ac4e;font-weight:normal;font-style:normal;white-space:nowrap;transform:scaleY(1.08);transform-origin:0 12.44px;">BTCC/B.TO</div></div><div style="position:absolute;left:122.00px;top:875.66px;font-size:14.7px;line-height:14.7px;color:#00ac4e;font-weight:normal;font-style:normal;white-space:nowrap;transform:scaleY(1.08);transform-origin:0 12.44px;">Bitcoin</div><div style="position:absolute;left:251.50px;top:875.66px;font-size:14.7px;line-height:14.7px;color:#00ac4e;font-weight:normal;font-style:normal;white-space:nowrap;transform:scaleY(1.08);transform-origin:0 12.44px;">$9.71</div><div style="position:absolute;left:367.80px;top:875.66px;font-size:14.7px;line-height:14.7px;color:#00ac4e;font-weight:normal;font-style:normal;white-space:nowrap;transform:scaleY(1.08);transform-origin:0 12.44px;">$0.03</div><div style="position:absolute;left:447.30px;top:875.66px;font-size:14.7px;line-height:14.7px;color:#00ac4e;font-weight:normal;font-style:normal;white-space:nowrap;transform:scaleY(1.08);transform-origin:0 12.44px;">$9.74</div><div style="position:absolute;left:526.90px;top:875.66px;font-size:14.7px;line-height:14.7px;color:#00ac4e;font-weight:normal;font-style:normal;white-space:nowrap;transform:scaleY(1.08);transform-origin:0 12.44px;">$0.30</div><div style="position:absolute;left:143.00px;width:1000px;text-align:center;top:875.66px;font-size:14.7px;line-height:14.7px;color:#00ac4e;font-weight:normal;font-style:normal;white-space:nowrap;transform:scaleY(1.08);transform-origin:0 12.44px;">3</div><div style="position:absolute;left:686.30px;top:875.66px;font-size:14.7px;line-height:14.7px;color:#00ac4e;font-weight:normal;font-style:normal;white-space:nowrap;transform:scaleY(1.08);transform-origin:0 12.44px;">$8.84</div><div style="position:absolute;left:846.20px;top:875.66px;font-size:14.7px;line-height:14.7px;color:#00ac4e;font-weight:normal;font-style:normal;white-space:nowrap;transform:scaleY(1.08);transform-origin:0 12.44px;">$265,000.00</div><div style="position:absolute;left:498.50px;width:1000px;text-align:center;top:875.66px;font-size:14.7px;line-height:14.7px;color:#00ac4e;font-weight:normal;font-style:normal;white-space:nowrap;transform:scaleY(1.08);transform-origin:0 12.44px;">1.00%</div><div style="position:absolute;left:578.35px;width:1000px;text-align:center;top:875.66px;font-size:14.7px;line-height:14.7px;color:#00ac4e;font-weight:normal;font-style:normal;white-space:nowrap;transform:scaleY(1.08);transform-origin:0 12.44px;">$9.95</div><div style="position:absolute;left:1121.80px;top:875.66px;font-size:14.7px;line-height:14.7px;color:#00ac4e;font-weight:normal;font-style:normal;white-space:nowrap;transform:scaleY(1.08);transform-origin:0 12.44px;">$2,630.10</div><div style="position:absolute;left:766.15px;width:1000px;text-align:center;top:875.66px;font-size:14.7px;line-height:14.7px;color:#00ac4e;font-weight:normal;font-style:normal;white-space:nowrap;transform:scaleY(1.08);transform-origin:0 12.44px;">$1.00</div><div style="position:absolute;left:843.65px;width:1000px;text-align:center;top:875.66px;font-size:14.7px;line-height:14.7px;color:#00ac4e;font-weight:normal;font-style:normal;white-space:nowrap;transform:scaleY(1.08);transform-origin:0 12.44px;">2,922</div><div style="position:absolute;left:935.00px;width:1000px;text-align:center;top:875.66px;font-size:14.7px;line-height:14.7px;color:#00ac4e;font-weight:normal;font-style:normal;white-space:nowrap;transform:scaleY(1.08);transform-origin:0 12.44px;">2,944</div><div style="position:absolute;left:1484.00px;top:875.66px;font-size:14.7px;line-height:14.7px;color:#00ac4e;font-weight:normal;font-style:normal;white-space:nowrap;transform:scaleY(1.08);transform-origin:0 12.44px;">$28,684.51</div><div style="position:absolute;left:1154.75px;width:1000px;text-align:center;top:875.66px;font-size:14.7px;line-height:14.7px;color:#00ac4e;font-weight:normal;font-style:normal;white-space:nowrap;transform:scaleY(1.08);transform-origin:0 12.44px;">2024-02-15</div><div style="position:absolute;left:1716.40px;top:875.66px;font-size:14.7px;line-height:14.7px;color:#00ac4e;font-weight:normal;font-style:normal;white-space:nowrap;transform:scaleY(1.08);transform-origin:0 12.44px;">$28,897.59</div><div style="position:absolute;left:1587.30px;width:600px;text-align:center;top:875.66px;font-size:14.7px;line-height:14.7px;color:#00ac4e;font-weight:normal;font-style:normal;white-space:nowrap;transform:scaleY(1.08);transform-origin:0 12.44px;">2024-07-05</div><div style="position:absolute;left:38.5px;top:892.20px;width:80px;height:24.35px;overflow:hidden;"><div style="position:absolute;left:3.5px;top:7.81px;font-size:14.7px;line-height:14.7px;color:#00ac4e;font-weight:normal;font-style:normal;white-space:nowrap;transform:scaleY(1.08);transform-origin:0 12.44px;">VWO</div></div><div style="position:absolute;left:122.00px;top:900.01px;font-size:14.7px;line-height:14.7px;color:#00ac4e;font-weight:normal;font-style:normal;white-space:nowrap;transform:scaleY(1.08);transform-origin:0 12.44px;">Equity</div><div style="position:absolute;left:251.50px;top:900.01px;font-size:14.7px;line-height:14.7px;color:#00ac4e;font-weight:normal;font-style:normal;white-space:nowrap;transform:scaleY(1.08);transform-origin:0 12.44px;">$41.62</div><div style="position:absolute;left:367.80px;top:900.01px;font-size:14.7px;line-height:14.7px;color:#00ac4e;font-weight:normal;font-style:normal;white-space:nowrap;transform:scaleY(1.08);transform-origin:0 12.44px;">$0.03</div><div style="position:absolute;left:447.30px;top:900.01px;font-size:14.7px;line-height:14.7px;color:#00ac4e;font-weight:normal;font-style:normal;white-space:nowrap;transform:scaleY(1.08);transform-origin:0 12.44px;">$41.65</div><div style="position:absolute;left:526.90px;top:900.01px;font-size:14.7px;line-height:14.7px;color:#00ac4e;font-weight:normal;font-style:normal;white-space:nowrap;transform:scaleY(1.08);transform-origin:0 12.44px;">$0.42</div><div style="position:absolute;left:143.00px;width:1000px;text-align:center;top:900.01px;font-size:14.7px;line-height:14.7px;color:#00ac4e;font-weight:normal;font-style:normal;white-space:nowrap;transform:scaleY(1.08);transform-origin:0 12.44px;">3</div><div style="position:absolute;left:686.30px;top:900.01px;font-size:14.7px;line-height:14.7px;color:#00ac4e;font-weight:normal;font-style:normal;white-space:nowrap;transform:scaleY(1.08);transform-origin:0 12.44px;">$40.39</div><div style="position:absolute;left:846.20px;top:900.01px;font-size:14.7px;line-height:14.7px;color:#00ac4e;font-weight:normal;font-style:normal;white-space:nowrap;transform:scaleY(1.08);transform-origin:0 12.44px;">$265,000.00</div><div style="position:absolute;left:498.50px;width:1000px;text-align:center;top:900.01px;font-size:14.7px;line-height:14.7px;color:#00ac4e;font-weight:normal;font-style:normal;white-space:nowrap;transform:scaleY(1.08);transform-origin:0 12.44px;">1.00%</div><div style="position:absolute;left:578.35px;width:1000px;text-align:center;top:900.01px;font-size:14.7px;line-height:14.7px;color:#00ac4e;font-weight:normal;font-style:normal;white-space:nowrap;transform:scaleY(1.08);transform-origin:0 12.44px;">$9.95</div><div style="position:absolute;left:1121.80px;top:900.01px;font-size:14.7px;line-height:14.7px;color:#00ac4e;font-weight:normal;font-style:normal;white-space:nowrap;transform:scaleY(1.08);transform-origin:0 12.44px;">$2,630.10</div><div style="position:absolute;left:766.15px;width:1000px;text-align:center;top:900.01px;font-size:14.7px;line-height:14.7px;color:#00ac4e;font-weight:normal;font-style:normal;white-space:nowrap;transform:scaleY(1.08);transform-origin:0 12.44px;">$1.36</div><div style="position:absolute;left:843.65px;width:1000px;text-align:center;top:900.01px;font-size:14.7px;line-height:14.7px;color:#00ac4e;font-weight:normal;font-style:normal;white-space:nowrap;transform:scaleY(1.08);transform-origin:0 12.44px;">1,535</div><div style="position:absolute;left:935.00px;width:1000px;text-align:center;top:900.01px;font-size:14.7px;line-height:14.7px;color:#00ac4e;font-weight:normal;font-style:normal;white-space:nowrap;transform:scaleY(1.08);transform-origin:0 12.44px;">1,545</div><div style="position:absolute;left:1484.00px;top:900.01px;font-size:14.7px;line-height:14.7px;color:#00ac4e;font-weight:normal;font-style:normal;white-space:nowrap;transform:scaleY(1.08);transform-origin:0 12.44px;">$87,524.93</div><div style="position:absolute;left:1154.75px;width:1000px;text-align:center;top:900.01px;font-size:14.7px;line-height:14.7px;color:#00ac4e;font-weight:normal;font-style:normal;white-space:nowrap;transform:scaleY(1.08);transform-origin:0 12.44px;">2024-03-08</div><div style="position:absolute;left:1716.40px;top:900.01px;font-size:14.7px;line-height:14.7px;color:#00ac4e;font-weight:normal;font-style:normal;white-space:nowrap;transform:scaleY(1.08);transform-origin:0 12.44px;">$87,835.13</div><div style="position:absolute;left:1587.30px;width:600px;text-align:center;top:900.01px;font-size:14.7px;line-height:14.7px;color:#00ac4e;font-weight:normal;font-style:normal;white-space:nowrap;transform:scaleY(1.08);transform-origin:0 12.44px;">2024-06-05</div><div style="position:absolute;left:38.5px;top:916.55px;width:80px;height:24.35px;overflow:hidden;"><div style="position:absolute;left:3.5px;top:7.81px;font-size:14.7px;line-height:14.7px;color:#00ac4e;font-weight:normal;font-style:normal;white-space:nowrap;transform:scaleY(1.08);transform-origin:0 12.44px;">COPX</div></div><div style="position:absolute;left:122.00px;top:924.36px;font-size:14.7px;line-height:14.7px;color:#00ac4e;font-weight:normal;font-style:normal;white-space:nowrap;transform:scaleY(1.08);transform-origin:0 12.44px;">Copper</div><div style="position:absolute;left:251.50px;top:924.36px;font-size:14.7px;line-height:14.7px;color:#00ac4e;font-weight:normal;font-style:normal;white-space:nowrap;transform:scaleY(1.08);transform-origin:0 12.44px;">$40.73</div><div style="position:absolute;left:367.80px;top:924.36px;font-size:14.7px;line-height:14.7px;color:#00ac4e;font-weight:normal;font-style:normal;white-space:nowrap;transform:scaleY(1.08);transform-origin:0 12.44px;">$0.03</div><div style="position:absolute;left:447.30px;top:924.36px;font-size:14.7px;line-height:14.7px;color:#00ac4e;font-weight:normal;font-style:normal;white-space:nowrap;transform:scaleY(1.08);transform-origin:0 12.44px;">$40.76</div><div style="position:absolute;left:526.90px;top:924.36px;font-size:14.7px;line-height:14.7px;color:#00ac4e;font-weight:normal;font-style:normal;white-space:nowrap;transform:scaleY(1.08);transform-origin:0 12.44px;">$0.85</div><div style="position:absolute;left:143.00px;width:1000px;text-align:center;top:924.36px;font-size:14.7px;line-height:14.7px;color:#00ac4e;font-weight:normal;font-style:normal;white-space:nowrap;transform:scaleY(1.08);transform-origin:0 12.44px;">3</div><div style="position:absolute;left:686.30px;top:924.36px;font-size:14.7px;line-height:14.7px;color:#00ac4e;font-weight:normal;font-style:normal;white-space:nowrap;transform:scaleY(1.08);transform-origin:0 12.44px;">$38.21</div><div style="position:absolute;left:846.20px;top:924.36px;font-size:14.7px;line-height:14.7px;color:#00ac4e;font-weight:normal;font-style:normal;white-space:nowrap;transform:scaleY(1.08);transform-origin:0 12.44px;">$265,000.00</div><div style="position:absolute;left:498.50px;width:1000px;text-align:center;top:924.36px;font-size:14.7px;line-height:14.7px;color:#00ac4e;font-weight:normal;font-style:normal;white-space:nowrap;transform:scaleY(1.08);transform-origin:0 12.44px;">1.00%</div><div style="position:absolute;left:578.35px;width:1000px;text-align:center;top:924.36px;font-size:14.7px;line-height:14.7px;color:#00ac4e;font-weight:normal;font-style:normal;white-space:nowrap;transform:scaleY(1.08);transform-origin:0 12.44px;">$9.95</div><div style="position:absolute;left:1121.80px;top:924.36px;font-size:14.7px;line-height:14.7px;color:#00ac4e;font-weight:normal;font-style:normal;white-space:nowrap;transform:scaleY(1.08);transform-origin:0 12.44px;">$2,630.10</div><div style="position:absolute;left:766.15px;width:1000px;text-align:center;top:924.36px;font-size:14.7px;line-height:14.7px;color:#00ac4e;font-weight:normal;font-style:normal;white-space:nowrap;transform:scaleY(1.08);transform-origin:0 12.44px;">$1.36</div><div style="position:absolute;left:843.65px;width:1000px;text-align:center;top:924.36px;font-size:14.7px;line-height:14.7px;color:#00ac4e;font-weight:normal;font-style:normal;white-space:nowrap;transform:scaleY(1.08);transform-origin:0 12.44px;">758</div><div style="position:absolute;left:935.00px;width:1000px;text-align:center;top:924.36px;font-size:14.7px;line-height:14.7px;color:#00ac4e;font-weight:normal;font-style:normal;white-space:nowrap;transform:scaleY(1.08);transform-origin:0 12.44px;">764</div><div style="position:absolute;left:1484.00px;top:924.36px;font-size:14.7px;line-height:14.7px;color:#00ac4e;font-weight:normal;font-style:normal;white-space:nowrap;transform:scaleY(1.08);transform-origin:0 12.44px;">$42,361.22</div><div style="position:absolute;left:1154.75px;width:1000px;text-align:center;top:924.36px;font-size:14.7px;line-height:14.7px;color:#00ac4e;font-weight:normal;font-style:normal;white-space:nowrap;transform:scaleY(1.08);transform-origin:0 12.44px;">2024-03-18</div><div style="position:absolute;left:1716.40px;top:924.36px;font-size:14.7px;line-height:14.7px;color:#00ac4e;font-weight:normal;font-style:normal;white-space:nowrap;transform:scaleY(1.08);transform-origin:0 12.44px;">$42,612.35</div><div style="position:absolute;left:1587.30px;width:600px;text-align:center;top:924.36px;font-size:14.7px;line-height:14.7px;color:#00ac4e;font-weight:normal;font-style:normal;white-space:nowrap;transform:scaleY(1.08);transform-origin:0 12.44px;">2024-06-12</div><div style="position:absolute;left:38.5px;top:940.90px;width:80px;height:24.35px;overflow:hidden;"><div style="position:absolute;left:3.5px;top:7.81px;font-size:14.7px;line-height:14.7px;color:#aa0618;font-weight:normal;font-style:normal;white-space:nowrap;transform:scaleY(1.08);transform-origin:0 12.44px;">XEG.TO</div></div><div style="position:absolute;left:122.00px;top:948.71px;font-size:14.7px;line-height:14.7px;color:#aa0618;font-weight:normal;font-style:normal;white-space:nowrap;transform:scaleY(1.08);transform-origin:0 12.44px;">Energy Index</div><div style="position:absolute;left:251.50px;top:948.71px;font-size:14.7px;line-height:14.7px;color:#aa0618;font-weight:normal;font-style:normal;white-space:nowrap;transform:scaleY(1.08);transform-origin:0 12.44px;">$17.71</div><div style="position:absolute;left:367.80px;top:948.71px;font-size:14.7px;line-height:14.7px;color:#aa0618;font-weight:normal;font-style:normal;white-space:nowrap;transform:scaleY(1.08);transform-origin:0 12.44px;">$0.03</div><div style="position:absolute;left:447.30px;top:948.71px;font-size:14.7px;line-height:14.7px;color:#aa0618;font-weight:normal;font-style:normal;white-space:nowrap;transform:scaleY(1.08);transform-origin:0 12.44px;">$17.74</div><div style="position:absolute;left:526.90px;top:948.71px;font-size:14.7px;line-height:14.7px;color:#aa0618;font-weight:normal;font-style:normal;white-space:nowrap;transform:scaleY(1.08);transform-origin:0 12.44px;">$0.28</div><div style="position:absolute;left:143.00px;width:1000px;text-align:center;top:948.71px;font-size:14.7px;line-height:14.7px;color:#aa0618;font-weight:normal;font-style:normal;white-space:nowrap;transform:scaleY(1.08);transform-origin:0 12.44px;">3</div><div style="position:absolute;left:686.30px;top:948.71px;font-size:14.7px;line-height:14.7px;color:#aa0618;font-weight:normal;font-style:normal;white-space:nowrap;transform:scaleY(1.08);transform-origin:0 12.44px;">$16.90</div><div style="position:absolute;left:846.20px;top:948.71px;font-size:14.7px;line-height:14.7px;color:#aa0618;font-weight:normal;font-style:normal;white-space:nowrap;transform:scaleY(1.08);transform-origin:0 12.44px;">$265,000.00</div><div style="position:absolute;left:498.50px;width:1000px;text-align:center;top:948.71px;font-size:14.7px;line-height:14.7px;color:#aa0618;font-weight:normal;font-style:normal;white-space:nowrap;transform:scaleY(1.08);transform-origin:0 12.44px;">1.00%</div><div style="position:absolute;left:578.35px;width:1000px;text-align:center;top:948.71px;font-size:14.7px;line-height:14.7px;color:#aa0618;font-weight:normal;font-style:normal;white-space:nowrap;transform:scaleY(1.08);transform-origin:0 12.44px;">$9.95</div><div style="position:absolute;left:1121.80px;top:948.71px;font-size:14.7px;line-height:14.7px;color:#aa0618;font-weight:normal;font-style:normal;white-space:nowrap;transform:scaleY(1.08);transform-origin:0 12.44px;">$2,630.10</div><div style="position:absolute;left:766.15px;width:1000px;text-align:center;top:948.71px;font-size:14.7px;line-height:14.7px;color:#aa0618;font-weight:normal;font-style:normal;white-space:nowrap;transform:scaleY(1.08);transform-origin:0 12.44px;">$1.00</div><div style="position:absolute;left:843.65px;width:1000px;text-align:center;top:948.71px;font-size:14.7px;line-height:14.7px;color:#aa0618;font-weight:normal;font-style:normal;white-space:nowrap;transform:scaleY(1.08);transform-origin:0 12.44px;">3,131</div><div style="position:absolute;left:935.00px;width:1000px;text-align:center;top:948.71px;font-size:14.7px;line-height:14.7px;color:#aa0618;font-weight:normal;font-style:normal;white-space:nowrap;transform:scaleY(1.08);transform-origin:0 12.44px;">3,155</div><div style="position:absolute;left:1484.00px;top:948.71px;font-size:14.7px;line-height:14.7px;color:#aa0618;font-weight:normal;font-style:normal;white-space:nowrap;transform:scaleY(1.08);transform-origin:0 12.44px;">$55,979.65</div><div style="position:absolute;left:1154.75px;width:1000px;text-align:center;top:948.71px;font-size:14.7px;line-height:14.7px;color:#aa0618;font-weight:normal;font-style:normal;white-space:nowrap;transform:scaleY(1.08);transform-origin:0 12.44px;">2024-03-19</div><div style="position:absolute;left:1716.40px;top:948.71px;font-size:14.7px;line-height:14.7px;color:#aa0618;font-weight:normal;font-style:normal;white-space:nowrap;transform:scaleY(1.08);transform-origin:0 12.44px;">$55,979.65</div><div style="position:absolute;left:1587.30px;width:600px;text-align:center;top:948.71px;font-size:14.7px;line-height:14.7px;color:#aa0618;font-weight:normal;font-style:normal;white-space:nowrap;transform:scaleY(1.08);transform-origin:0 12.44px;">2024-06-18</div><div style="position:absolute;left:38.5px;top:965.25px;width:80px;height:24.35px;overflow:hidden;"><div style="position:absolute;left:3.5px;top:7.81px;font-size:14.7px;line-height:14.7px;color:#00ac4e;font-weight:normal;font-style:normal;white-space:nowrap;transform:scaleY(1.08);transform-origin:0 12.44px;">XBM.TO</div></div><div style="position:absolute;left:122.00px;top:973.06px;font-size:14.7px;line-height:14.7px;color:#00ac4e;font-weight:normal;font-style:normal;white-space:nowrap;transform:scaleY(1.08);transform-origin:0 12.44px;">Base Metals</div><div style="position:absolute;left:251.50px;top:973.06px;font-size:14.7px;line-height:14.7px;color:#00ac4e;font-weight:normal;font-style:normal;white-space:nowrap;transform:scaleY(1.08);transform-origin:0 12.44px;">$19.90</div><div style="position:absolute;left:367.80px;top:973.06px;font-size:14.7px;line-height:14.7px;color:#00ac4e;font-weight:normal;font-style:normal;white-space:nowrap;transform:scaleY(1.08);transform-origin:0 12.44px;">$0.03</div><div style="position:absolute;left:447.30px;top:973.06px;font-size:14.7px;line-height:14.7px;color:#00ac4e;font-weight:normal;font-style:normal;white-space:nowrap;transform:scaleY(1.08);transform-origin:0 12.44px;">$19.93</div><div style="position:absolute;left:526.90px;top:973.06px;font-size:14.7px;line-height:14.7px;color:#00ac4e;font-weight:normal;font-style:normal;white-space:nowrap;transform:scaleY(1.08);transform-origin:0 12.44px;">$0.35</div><div style="position:absolute;left:143.00px;width:1000px;text-align:center;top:973.06px;font-size:14.7px;line-height:14.7px;color:#00ac4e;font-weight:normal;font-style:normal;white-space:nowrap;transform:scaleY(1.08);transform-origin:0 12.44px;">3</div><div style="position:absolute;left:686.30px;top:973.06px;font-size:14.7px;line-height:14.7px;color:#00ac4e;font-weight:normal;font-style:normal;white-space:nowrap;transform:scaleY(1.08);transform-origin:0 12.44px;">$18.88</div><div style="position:absolute;left:846.20px;top:973.06px;font-size:14.7px;line-height:14.7px;color:#00ac4e;font-weight:normal;font-style:normal;white-space:nowrap;transform:scaleY(1.08);transform-origin:0 12.44px;">$265,000.00</div><div style="position:absolute;left:498.50px;width:1000px;text-align:center;top:973.06px;font-size:14.7px;line-height:14.7px;color:#00ac4e;font-weight:normal;font-style:normal;white-space:nowrap;transform:scaleY(1.08);transform-origin:0 12.44px;">1.00%</div><div style="position:absolute;left:578.35px;width:1000px;text-align:center;top:973.06px;font-size:14.7px;line-height:14.7px;color:#00ac4e;font-weight:normal;font-style:normal;white-space:nowrap;transform:scaleY(1.08);transform-origin:0 12.44px;">$9.95</div><div style="position:absolute;left:1121.80px;top:973.06px;font-size:14.7px;line-height:14.7px;color:#00ac4e;font-weight:normal;font-style:normal;white-space:nowrap;transform:scaleY(1.08);transform-origin:0 12.44px;">$2,630.10</div><div style="position:absolute;left:766.15px;width:1000px;text-align:center;top:973.06px;font-size:14.7px;line-height:14.7px;color:#00ac4e;font-weight:normal;font-style:normal;white-space:nowrap;transform:scaleY(1.08);transform-origin:0 12.44px;">$1.00</div><div style="position:absolute;left:843.65px;width:1000px;text-align:center;top:973.06px;font-size:14.7px;line-height:14.7px;color:#00ac4e;font-weight:normal;font-style:normal;white-space:nowrap;transform:scaleY(1.08);transform-origin:0 12.44px;">2,505</div><div style="position:absolute;left:935.00px;width:1000px;text-align:center;top:973.06px;font-size:14.7px;line-height:14.7px;color:#00ac4e;font-weight:normal;font-style:normal;white-space:nowrap;transform:scaleY(1.08);transform-origin:0 12.44px;">2,524</div><div style="position:absolute;left:1484.00px;top:973.06px;font-size:14.7px;line-height:14.7px;color:#00ac4e;font-weight:normal;font-style:normal;white-space:nowrap;transform:scaleY(1.08);transform-origin:0 12.44px;">$50,313.27</div><div style="position:absolute;left:1154.75px;width:1000px;text-align:center;top:973.06px;font-size:14.7px;line-height:14.7px;color:#00ac4e;font-weight:normal;font-style:normal;white-space:nowrap;transform:scaleY(1.08);transform-origin:0 12.44px;">2024-03-20</div><div style="position:absolute;left:1716.40px;top:973.06px;font-size:14.7px;line-height:14.7px;color:#00ac4e;font-weight:normal;font-style:normal;white-space:nowrap;transform:scaleY(1.08);transform-origin:0 12.44px;">$50,463.95</div><div style="position:absolute;left:1587.30px;width:600px;text-align:center;top:973.06px;font-size:14.7px;line-height:14.7px;color:#00ac4e;font-weight:normal;font-style:normal;white-space:nowrap;transform:scaleY(1.08);transform-origin:0 12.44px;">2024-06-14</div><div style="position:absolute;left:38.5px;top:989.60px;width:80px;height:24.35px;overflow:hidden;"><div style="position:absolute;left:3.5px;top:7.81px;font-size:14.7px;line-height:14.7px;color:#aa0618;font-weight:normal;font-style:normal;white-space:nowrap;transform:scaleY(1.08);transform-origin:0 12.44px;">BNO</div></div><div style="position:absolute;left:122.00px;top:997.41px;font-size:14.7px;line-height:14.7px;color:#aa0618;font-weight:normal;font-style:normal;white-space:nowrap;transform:scaleY(1.08);transform-origin:0 12.44px;">Brent Oil</div><div style="position:absolute;left:251.50px;top:997.41px;font-size:14.7px;line-height:14.7px;color:#aa0618;font-weight:normal;font-style:normal;white-space:nowrap;transform:scaleY(1.08);transform-origin:0 12.44px;">$31.89</div><div style="position:absolute;left:367.80px;top:997.41px;font-size:14.7px;line-height:14.7px;color:#aa0618;font-weight:normal;font-style:normal;white-space:nowrap;transform:scaleY(1.08);transform-origin:0 12.44px;">$0.03</div><div style="position:absolute;left:447.30px;top:997.41px;font-size:14.7px;line-height:14.7px;color:#aa0618;font-weight:normal;font-style:normal;white-space:nowrap;transform:scaleY(1.08);transform-origin:0 12.44px;">$31.92</div><div style="position:absolute;left:526.90px;top:997.41px;font-size:14.7px;line-height:14.7px;color:#aa0618;font-weight:normal;font-style:normal;white-space:nowrap;transform:scaleY(1.08);transform-origin:0 12.44px;">$0.55</div><div style="position:absolute;left:143.00px;width:1000px;text-align:center;top:997.41px;font-size:14.7px;line-height:14.7px;color:#aa0618;font-weight:normal;font-style:normal;white-space:nowrap;transform:scaleY(1.08);transform-origin:0 12.44px;">3</div><div style="position:absolute;left:686.30px;top:997.41px;font-size:14.7px;line-height:14.7px;color:#aa0618;font-weight:normal;font-style:normal;white-space:nowrap;transform:scaleY(1.08);transform-origin:0 12.44px;">$30.27</div><div style="position:absolute;left:846.20px;top:997.41px;font-size:14.7px;line-height:14.7px;color:#aa0618;font-weight:normal;font-style:normal;white-space:nowrap;transform:scaleY(1.08);transform-origin:0 12.44px;">$265,000.00</div><div style="position:absolute;left:498.50px;width:1000px;text-align:center;top:997.41px;font-size:14.7px;line-height:14.7px;color:#aa0618;font-weight:normal;font-style:normal;white-space:nowrap;transform:scaleY(1.08);transform-origin:0 12.44px;">1.00%</div><div style="position:absolute;left:578.35px;width:1000px;text-align:center;top:997.41px;font-size:14.7px;line-height:14.7px;color:#aa0618;font-weight:normal;font-style:normal;white-space:nowrap;transform:scaleY(1.08);transform-origin:0 12.44px;">$9.95</div><div style="position:absolute;left:1121.80px;top:997.41px;font-size:14.7px;line-height:14.7px;color:#aa0618;font-weight:normal;font-style:normal;white-space:nowrap;transform:scaleY(1.08);transform-origin:0 12.44px;">$2,630.10</div><div style="position:absolute;left:766.15px;width:1000px;text-align:center;top:997.41px;font-size:14.7px;line-height:14.7px;color:#aa0618;font-weight:normal;font-style:normal;white-space:nowrap;transform:scaleY(1.08);transform-origin:0 12.44px;">$1.38</div><div style="position:absolute;left:843.65px;width:1000px;text-align:center;top:997.41px;font-size:14.7px;line-height:14.7px;color:#aa0618;font-weight:normal;font-style:normal;white-space:nowrap;transform:scaleY(1.08);transform-origin:0 12.44px;">1,155</div><div style="position:absolute;left:935.00px;width:1000px;text-align:center;top:997.41px;font-size:14.7px;line-height:14.7px;color:#aa0618;font-weight:normal;font-style:normal;white-space:nowrap;transform:scaleY(1.08);transform-origin:0 12.44px;">1,164</div><div style="position:absolute;left:1484.00px;top:997.41px;font-size:14.7px;line-height:14.7px;color:#aa0618;font-weight:normal;font-style:normal;white-space:nowrap;transform:scaleY(1.08);transform-origin:0 12.44px;">$51,283.68</div><div style="position:absolute;left:1154.75px;width:1000px;text-align:center;top:997.41px;font-size:14.7px;line-height:14.7px;color:#aa0618;font-weight:normal;font-style:normal;white-space:nowrap;transform:scaleY(1.08);transform-origin:0 12.44px;">2024-04-02</div><div style="position:absolute;left:1716.40px;top:997.41px;font-size:14.7px;line-height:14.7px;color:#aa0618;font-weight:normal;font-style:normal;white-space:nowrap;transform:scaleY(1.08);transform-origin:0 12.44px;">$50,815.50</div><div style="position:absolute;left:1587.30px;width:600px;text-align:center;top:997.41px;font-size:14.7px;line-height:14.7px;color:#aa0618;font-weight:normal;font-style:normal;white-space:nowrap;transform:scaleY(1.08);transform-origin:0 12.44px;">2024-05-07</div><div style="position:absolute;left:38.5px;top:1013.95px;width:80px;height:24.35px;overflow:hidden;"><div style="position:absolute;left:3.5px;top:7.81px;font-size:14.7px;line-height:14.7px;color:#aa0618;font-weight:normal;font-style:normal;white-space:nowrap;transform:scaleY(1.08);transform-origin:0 12.44px;">WOOD</div></div><div style="position:absolute;left:122.00px;top:1021.76px;font-size:14.7px;line-height:14.7px;color:#aa0618;font-weight:normal;font-style:normal;white-space:nowrap;transform:scaleY(1.08);transform-origin:0 12.44px;">Lumber</div><div style="position:absolute;left:251.50px;top:1021.76px;font-size:14.7px;line-height:14.7px;color:#aa0618;font-weight:normal;font-style:normal;white-space:nowrap;transform:scaleY(1.08);transform-origin:0 12.44px;">$83.42</div><div style="position:absolute;left:367.80px;top:1021.76px;font-size:14.7px;line-height:14.7px;color:#aa0618;font-weight:normal;font-style:normal;white-space:nowrap;transform:scaleY(1.08);transform-origin:0 12.44px;">$0.03</div><div style="position:absolute;left:447.30px;top:1021.76px;font-size:14.7px;line-height:14.7px;color:#aa0618;font-weight:normal;font-style:normal;white-space:nowrap;transform:scaleY(1.08);transform-origin:0 12.44px;">$83.45</div><div style="position:absolute;left:526.90px;top:1021.76px;font-size:14.7px;line-height:14.7px;color:#aa0618;font-weight:normal;font-style:normal;white-space:nowrap;transform:scaleY(1.08);transform-origin:0 12.44px;">$0.95</div><div style="position:absolute;left:143.00px;width:1000px;text-align:center;top:1021.76px;font-size:14.7px;line-height:14.7px;color:#aa0618;font-weight:normal;font-style:normal;white-space:nowrap;transform:scaleY(1.08);transform-origin:0 12.44px;">3</div><div style="position:absolute;left:686.30px;top:1021.76px;font-size:14.7px;line-height:14.7px;color:#aa0618;font-weight:normal;font-style:normal;white-space:nowrap;transform:scaleY(1.08);transform-origin:0 12.44px;">$80.60</div><div style="position:absolute;left:846.20px;top:1021.76px;font-size:14.7px;line-height:14.7px;color:#aa0618;font-weight:normal;font-style:normal;white-space:nowrap;transform:scaleY(1.08);transform-origin:0 12.44px;">$265,000.00</div><div style="position:absolute;left:498.50px;width:1000px;text-align:center;top:1021.76px;font-size:14.7px;line-height:14.7px;color:#aa0618;font-weight:normal;font-style:normal;white-space:nowrap;transform:scaleY(1.08);transform-origin:0 12.44px;">1.00%</div><div style="position:absolute;left:578.35px;width:1000px;text-align:center;top:1021.76px;font-size:14.7px;line-height:14.7px;color:#aa0618;font-weight:normal;font-style:normal;white-space:nowrap;transform:scaleY(1.08);transform-origin:0 12.44px;">$9.95</div><div style="position:absolute;left:1121.80px;top:1021.76px;font-size:14.7px;line-height:14.7px;color:#aa0618;font-weight:normal;font-style:normal;white-space:nowrap;transform:scaleY(1.08);transform-origin:0 12.44px;">$2,630.10</div><div style="position:absolute;left:766.15px;width:1000px;text-align:center;top:1021.76px;font-size:14.7px;line-height:14.7px;color:#aa0618;font-weight:normal;font-style:normal;white-space:nowrap;transform:scaleY(1.08);transform-origin:0 12.44px;">$1.36</div><div style="position:absolute;left:843.65px;width:1000px;text-align:center;top:1021.76px;font-size:14.7px;line-height:14.7px;color:#aa0618;font-weight:normal;font-style:normal;white-space:nowrap;transform:scaleY(1.08);transform-origin:0 12.44px;">679</div><div style="position:absolute;left:935.00px;width:1000px;text-align:center;top:1021.76px;font-size:14.7px;line-height:14.7px;color:#aa0618;font-weight:normal;font-style:normal;white-space:nowrap;transform:scaleY(1.08);transform-origin:0 12.44px;">684</div><div style="position:absolute;left:1484.00px;top:1021.76px;font-size:14.7px;line-height:14.7px;color:#aa0618;font-weight:normal;font-style:normal;white-space:nowrap;transform:scaleY(1.08);transform-origin:0 12.44px;">$77,638.48</div><div style="position:absolute;left:1154.75px;width:1000px;text-align:center;top:1021.76px;font-size:14.7px;line-height:14.7px;color:#aa0618;font-weight:normal;font-style:normal;white-space:nowrap;transform:scaleY(1.08);transform-origin:0 12.44px;">2024-03-25</div><div style="position:absolute;left:1716.40px;top:1021.76px;font-size:14.7px;line-height:14.7px;color:#aa0618;font-weight:normal;font-style:normal;white-space:nowrap;transform:scaleY(1.08);transform-origin:0 12.44px;">$77,563.87</div><div style="position:absolute;left:1587.30px;width:600px;text-align:center;top:1021.76px;font-size:14.7px;line-height:14.7px;color:#aa0618;font-weight:normal;font-style:normal;white-space:nowrap;transform:scaleY(1.08);transform-origin:0 12.44px;">2024-04-17</div><div style="position:absolute;left:38.5px;top:1038.30px;width:80px;height:24.35px;overflow:hidden;"><div style="position:absolute;left:3.5px;top:7.81px;font-size:14.7px;line-height:14.7px;color:#00ac4e;font-weight:normal;font-style:normal;white-space:nowrap;transform:scaleY(1.08);transform-origin:0 12.44px;">XGD</div></div><div style="position:absolute;left:122.00px;top:1046.11px;font-size:14.7px;line-height:14.7px;color:#00ac4e;font-weight:normal;font-style:normal;white-space:nowrap;transform:scaleY(1.08);transform-origin:0 12.44px;">Gold Miners</div><div style="position:absolute;left:251.50px;top:1046.11px;font-size:14.7px;line-height:14.7px;color:#00ac4e;font-weight:normal;font-style:normal;white-space:nowrap;transform:scaleY(1.08);transform-origin:0 12.44px;">$18.76</div><div style="position:absolute;left:367.80px;top:1046.11px;font-size:14.7px;line-height:14.7px;color:#00ac4e;font-weight:normal;font-style:normal;white-space:nowrap;transform:scaleY(1.08);transform-origin:0 12.44px;">$0.03</div><div style="position:absolute;left:447.30px;top:1046.11px;font-size:14.7px;line-height:14.7px;color:#00ac4e;font-weight:normal;font-style:normal;white-space:nowrap;transform:scaleY(1.08);transform-origin:0 12.44px;">$18.79</div><div style="position:absolute;left:526.90px;top:1046.11px;font-size:14.7px;line-height:14.7px;color:#00ac4e;font-weight:normal;font-style:normal;white-space:nowrap;transform:scaleY(1.08);transform-origin:0 12.44px;">$0.38</div><div style="position:absolute;left:143.00px;width:1000px;text-align:center;top:1046.11px;font-size:14.7px;line-height:14.7px;color:#00ac4e;font-weight:normal;font-style:normal;white-space:nowrap;transform:scaleY(1.08);transform-origin:0 12.44px;">3</div><div style="position:absolute;left:686.30px;top:1046.11px;font-size:14.7px;line-height:14.7px;color:#00ac4e;font-weight:normal;font-style:normal;white-space:nowrap;transform:scaleY(1.08);transform-origin:0 12.44px;">$17.65</div><div style="position:absolute;left:846.20px;top:1046.11px;font-size:14.7px;line-height:14.7px;color:#00ac4e;font-weight:normal;font-style:normal;white-space:nowrap;transform:scaleY(1.08);transform-origin:0 12.44px;">$265,000.00</div><div style="position:absolute;left:498.50px;width:1000px;text-align:center;top:1046.11px;font-size:14.7px;line-height:14.7px;color:#00ac4e;font-weight:normal;font-style:normal;white-space:nowrap;transform:scaleY(1.08);transform-origin:0 12.44px;">1.00%</div><div style="position:absolute;left:578.35px;width:1000px;text-align:center;top:1046.11px;font-size:14.7px;line-height:14.7px;color:#00ac4e;font-weight:normal;font-style:normal;white-space:nowrap;transform:scaleY(1.08);transform-origin:0 12.44px;">$9.95</div><div style="position:absolute;left:1121.80px;top:1046.11px;font-size:14.7px;line-height:14.7px;color:#00ac4e;font-weight:normal;font-style:normal;white-space:nowrap;transform:scaleY(1.08);transform-origin:0 12.44px;">$2,630.10</div><div style="position:absolute;left:766.15px;width:1000px;text-align:center;top:1046.11px;font-size:14.7px;line-height:14.7px;color:#00ac4e;font-weight:normal;font-style:normal;white-space:nowrap;transform:scaleY(1.08);transform-origin:0 12.44px;">$1.00</div><div style="position:absolute;left:843.65px;width:1000px;text-align:center;top:1046.11px;font-size:14.7px;line-height:14.7px;color:#00ac4e;font-weight:normal;font-style:normal;white-space:nowrap;transform:scaleY(1.08);transform-origin:0 12.44px;">2,307</div><div style="position:absolute;left:935.00px;width:1000px;text-align:center;top:1046.11px;font-size:14.7px;line-height:14.7px;color:#00ac4e;font-weight:normal;font-style:normal;white-space:nowrap;transform:scaleY(1.08);transform-origin:0 12.44px;">2,325</div><div style="position:absolute;left:1484.00px;top:1046.11px;font-size:14.7px;line-height:14.7px;color:#00ac4e;font-weight:normal;font-style:normal;white-space:nowrap;transform:scaleY(1.08);transform-origin:0 12.44px;">$43,696.70</div><div style="position:absolute;left:1154.75px;width:1000px;text-align:center;top:1046.11px;font-size:14.7px;line-height:14.7px;color:#00ac4e;font-weight:normal;font-style:normal;white-space:nowrap;transform:scaleY(1.08);transform-origin:0 12.44px;">2024-04-05</div><div style="position:absolute;left:1716.40px;top:1046.11px;font-size:14.7px;line-height:14.7px;color:#00ac4e;font-weight:normal;font-style:normal;white-space:nowrap;transform:scaleY(1.08);transform-origin:0 12.44px;">$43,708.45</div><div style="position:absolute;left:1587.30px;width:600px;text-align:center;top:1046.11px;font-size:14.7px;line-height:14.7px;color:#00ac4e;font-weight:normal;font-style:normal;white-space:nowrap;transform:scaleY(1.08);transform-origin:0 12.44px;">2024-11-07</div><div style="position:absolute;left:38.5px;top:1062.65px;width:80px;height:24.35px;overflow:hidden;"><div style="position:absolute;left:3.5px;top:7.81px;font-size:14.7px;line-height:14.7px;color:#aa0618;font-weight:normal;font-style:normal;white-space:nowrap;transform:scaleY(1.08);transform-origin:0 12.44px;">USO</div></div><div style="position:absolute;left:122.00px;top:1070.46px;font-size:14.7px;line-height:14.7px;color:#aa0618;font-weight:normal;font-style:normal;white-space:nowrap;transform:scaleY(1.08);transform-origin:0 12.44px;">US Oil</div><div style="position:absolute;left:251.50px;top:1070.46px;font-size:14.7px;line-height:14.7px;color:#aa0618;font-weight:normal;font-style:normal;white-space:nowrap;transform:scaleY(1.08);transform-origin:0 12.44px;">$80.20</div><div style="position:absolute;left:367.80px;top:1070.46px;font-size:14.7px;line-height:14.7px;color:#aa0618;font-weight:normal;font-style:normal;white-space:nowrap;transform:scaleY(1.08);transform-origin:0 12.44px;">$0.03</div><div style="position:absolute;left:447.30px;top:1070.46px;font-size:14.7px;line-height:14.7px;color:#aa0618;font-weight:normal;font-style:normal;white-space:nowrap;transform:scaleY(1.08);transform-origin:0 12.44px;">$80.23</div><div style="position:absolute;left:526.90px;top:1070.46px;font-size:14.7px;line-height:14.7px;color:#aa0618;font-weight:normal;font-style:normal;white-space:nowrap;transform:scaleY(1.08);transform-origin:0 12.44px;">$1.44</div><div style="position:absolute;left:143.00px;width:1000px;text-align:center;top:1070.46px;font-size:14.7px;line-height:14.7px;color:#aa0618;font-weight:normal;font-style:normal;white-space:nowrap;transform:scaleY(1.08);transform-origin:0 12.44px;">3</div><div style="position:absolute;left:686.30px;top:1070.46px;font-size:14.7px;line-height:14.7px;color:#aa0618;font-weight:normal;font-style:normal;white-space:nowrap;transform:scaleY(1.08);transform-origin:0 12.44px;">$75.91</div><div style="position:absolute;left:846.20px;top:1070.46px;font-size:14.7px;line-height:14.7px;color:#aa0618;font-weight:normal;font-style:normal;white-space:nowrap;transform:scaleY(1.08);transform-origin:0 12.44px;">$265,000.00</div><div style="position:absolute;left:498.50px;width:1000px;text-align:center;top:1070.46px;font-size:14.7px;line-height:14.7px;color:#aa0618;font-weight:normal;font-style:normal;white-space:nowrap;transform:scaleY(1.08);transform-origin:0 12.44px;">1.00%</div><div style="position:absolute;left:578.35px;width:1000px;text-align:center;top:1070.46px;font-size:14.7px;line-height:14.7px;color:#aa0618;font-weight:normal;font-style:normal;white-space:nowrap;transform:scaleY(1.08);transform-origin:0 12.44px;">$9.95</div><div style="position:absolute;left:1121.80px;top:1070.46px;font-size:14.7px;line-height:14.7px;color:#aa0618;font-weight:normal;font-style:normal;white-space:nowrap;transform:scaleY(1.08);transform-origin:0 12.44px;">$2,630.10</div><div style="position:absolute;left:766.15px;width:1000px;text-align:center;top:1070.46px;font-size:14.7px;line-height:14.7px;color:#aa0618;font-weight:normal;font-style:normal;white-space:nowrap;transform:scaleY(1.08);transform-origin:0 12.44px;">$1.37</div><div style="position:absolute;left:843.65px;width:1000px;text-align:center;top:1070.46px;font-size:14.7px;line-height:14.7px;color:#aa0618;font-weight:normal;font-style:normal;white-space:nowrap;transform:scaleY(1.08);transform-origin:0 12.44px;">444</div><div style="position:absolute;left:935.00px;width:1000px;text-align:center;top:1070.46px;font-size:14.7px;line-height:14.7px;color:#aa0618;font-weight:normal;font-style:normal;white-space:nowrap;transform:scaleY(1.08);transform-origin:0 12.44px;">448</div><div style="position:absolute;left:1484.00px;top:1070.46px;font-size:14.7px;line-height:14.7px;color:#aa0618;font-weight:normal;font-style:normal;white-space:nowrap;transform:scaleY(1.08);transform-origin:0 12.44px;">$49,251.91</div><div style="position:absolute;left:1154.75px;width:1000px;text-align:center;top:1070.46px;font-size:14.7px;line-height:14.7px;color:#aa0618;font-weight:normal;font-style:normal;white-space:nowrap;transform:scaleY(1.08);transform-origin:0 12.44px;">2024-04-04</div><div style="position:absolute;left:1716.40px;top:1070.46px;font-size:14.7px;line-height:14.7px;color:#aa0618;font-weight:normal;font-style:normal;white-space:nowrap;transform:scaleY(1.08);transform-origin:0 12.44px;">$49,516.99</div><div style="position:absolute;left:1587.30px;width:600px;text-align:center;top:1070.46px;font-size:14.7px;line-height:14.7px;color:#aa0618;font-weight:normal;font-style:normal;white-space:nowrap;transform:scaleY(1.08);transform-origin:0 12.44px;">2024-05-03</div><div style="position:absolute;left:38.5px;top:1087.00px;width:80px;height:24.35px;overflow:hidden;"><div style="position:absolute;left:3.5px;top:7.81px;font-size:14.7px;line-height:14.7px;color:#aa0618;font-weight:normal;font-style:normal;white-space:nowrap;transform:scaleY(1.08);transform-origin:0 12.44px;">SLV</div></div><div style="position:absolute;left:122.00px;top:1094.81px;font-size:14.7px;line-height:14.7px;color:#aa0618;font-weight:normal;font-style:normal;white-space:nowrap;transform:scaleY(1.08);transform-origin:0 12.44px;">Silver</div><div style="position:absolute;left:251.50px;top:1094.81px;font-size:14.7px;line-height:14.7px;color:#aa0618;font-weight:normal;font-style:normal;white-space:nowrap;transform:scaleY(1.08);transform-origin:0 12.44px;">$23.90</div><div style="position:absolute;left:367.80px;top:1094.81px;font-size:14.7px;line-height:14.7px;color:#aa0618;font-weight:normal;font-style:normal;white-space:nowrap;transform:scaleY(1.08);transform-origin:0 12.44px;">$0.03</div><div style="position:absolute;left:447.30px;top:1094.81px;font-size:14.7px;line-height:14.7px;color:#aa0618;font-weight:normal;font-style:normal;white-space:nowrap;transform:scaleY(1.08);transform-origin:0 12.44px;">$23.93</div><div style="position:absolute;left:526.90px;top:1094.81px;font-size:14.7px;line-height:14.7px;color:#aa0618;font-weight:normal;font-style:normal;white-space:nowrap;transform:scaleY(1.08);transform-origin:0 12.44px;">$0.44</div><div style="position:absolute;left:143.00px;width:1000px;text-align:center;top:1094.81px;font-size:14.7px;line-height:14.7px;color:#aa0618;font-weight:normal;font-style:normal;white-space:nowrap;transform:scaleY(1.08);transform-origin:0 12.44px;">3</div><div style="position:absolute;left:686.30px;top:1094.81px;font-size:14.7px;line-height:14.7px;color:#aa0618;font-weight:normal;font-style:normal;white-space:nowrap;transform:scaleY(1.08);transform-origin:0 12.44px;">$22.61</div><div style="position:absolute;left:846.20px;top:1094.81px;font-size:14.7px;line-height:14.7px;color:#aa0618;font-weight:normal;font-style:normal;white-space:nowrap;transform:scaleY(1.08);transform-origin:0 12.44px;">$265,000.00</div><div style="position:absolute;left:498.50px;width:1000px;text-align:center;top:1094.81px;font-size:14.7px;line-height:14.7px;color:#aa0618;font-weight:normal;font-style:normal;white-space:nowrap;transform:scaleY(1.08);transform-origin:0 12.44px;">1.00%</div><div style="position:absolute;left:578.35px;width:1000px;text-align:center;top:1094.81px;font-size:14.7px;line-height:14.7px;color:#aa0618;font-weight:normal;font-style:normal;white-space:nowrap;transform:scaleY(1.08);transform-origin:0 12.44px;">$9.95</div><div style="position:absolute;left:1121.80px;top:1094.81px;font-size:14.7px;line-height:14.7px;color:#aa0618;font-weight:normal;font-style:normal;white-space:nowrap;transform:scaleY(1.08);transform-origin:0 12.44px;">$2,630.10</div><div style="position:absolute;left:766.15px;width:1000px;text-align:center;top:1094.81px;font-size:14.7px;line-height:14.7px;color:#aa0618;font-weight:normal;font-style:normal;white-space:nowrap;transform:scaleY(1.08);transform-origin:0 12.44px;">$1.37</div><div style="position:absolute;left:843.65px;width:1000px;text-align:center;top:1094.81px;font-size:14.7px;line-height:14.7px;color:#aa0618;font-weight:normal;font-style:normal;white-space:nowrap;transform:scaleY(1.08);transform-origin:0 12.44px;">1,454</div><div style="position:absolute;left:935.00px;width:1000px;text-align:center;top:1094.81px;font-size:14.7px;line-height:14.7px;color:#aa0618;font-weight:normal;font-style:normal;white-space:nowrap;transform:scaleY(1.08);transform-origin:0 12.44px;">1,565</div><div style="position:absolute;left:1484.00px;top:1094.81px;font-size:14.7px;line-height:14.7px;color:#aa0618;font-weight:normal;font-style:normal;white-space:nowrap;transform:scaleY(1.08);transform-origin:0 12.44px;">$51,317.07</div><div style="position:absolute;left:1154.75px;width:1000px;text-align:center;top:1094.81px;font-size:14.7px;line-height:14.7px;color:#aa0618;font-weight:normal;font-style:normal;white-space:nowrap;transform:scaleY(1.08);transform-origin:0 12.44px;">2024-04-05</div><div style="position:absolute;left:1716.40px;top:1094.81px;font-size:14.7px;line-height:14.7px;color:#aa0618;font-weight:normal;font-style:normal;white-space:nowrap;transform:scaleY(1.08);transform-origin:0 12.44px;">$48,578.92</div><div style="position:absolute;left:1587.30px;width:600px;text-align:center;top:1094.81px;font-size:14.7px;line-height:14.7px;color:#aa0618;font-weight:normal;font-style:normal;white-space:nowrap;transform:scaleY(1.08);transform-origin:0 12.44px;">2024-05-06</div><div style="position:absolute;left:38.5px;top:1111.35px;width:80px;height:24.35px;overflow:hidden;"><div style="position:absolute;left:3.5px;top:7.81px;font-size:14.7px;line-height:14.7px;color:#aa0618;font-weight:normal;font-style:normal;white-space:nowrap;transform:scaleY(1.08);transform-origin:0 12.44px;">MX.TO</div></div><div style="position:absolute;left:122.00px;top:1119.16px;font-size:14.7px;line-height:14.7px;color:#aa0618;font-weight:normal;font-style:normal;white-space:nowrap;transform:scaleY(1.08);transform-origin:0 12.44px;">Methanex</div><div style="position:absolute;left:251.50px;top:1119.16px;font-size:14.7px;line-height:14.7px;color:#aa0618;font-weight:normal;font-style:normal;white-space:nowrap;transform:scaleY(1.08);transform-origin:0 12.44px;">$66.11</div><div style="position:absolute;left:367.80px;top:1119.16px;font-size:14.7px;line-height:14.7px;color:#aa0618;font-weight:normal;font-style:normal;white-space:nowrap;transform:scaleY(1.08);transform-origin:0 12.44px;">$0.03</div><div style="position:absolute;left:447.30px;top:1119.16px;font-size:14.7px;line-height:14.7px;color:#aa0618;font-weight:normal;font-style:normal;white-space:nowrap;transform:scaleY(1.08);transform-origin:0 12.44px;">$66.14</div><div style="position:absolute;left:526.90px;top:1119.16px;font-size:14.7px;line-height:14.7px;color:#aa0618;font-weight:normal;font-style:normal;white-space:nowrap;transform:scaleY(1.08);transform-origin:0 12.44px;">$1.49</div><div style="position:absolute;left:143.00px;width:1000px;text-align:center;top:1119.16px;font-size:14.7px;line-height:14.7px;color:#aa0618;font-weight:normal;font-style:normal;white-space:nowrap;transform:scaleY(1.08);transform-origin:0 12.44px;">3</div><div style="position:absolute;left:686.30px;top:1119.16px;font-size:14.7px;line-height:14.7px;color:#aa0618;font-weight:normal;font-style:normal;white-space:nowrap;transform:scaleY(1.08);transform-origin:0 12.44px;">$61.67</div><div style="position:absolute;left:846.20px;top:1119.16px;font-size:14.7px;line-height:14.7px;color:#aa0618;font-weight:normal;font-style:normal;white-space:nowrap;transform:scaleY(1.08);transform-origin:0 12.44px;">$265,000.00</div><div style="position:absolute;left:498.50px;width:1000px;text-align:center;top:1119.16px;font-size:14.7px;line-height:14.7px;color:#aa0618;font-weight:normal;font-style:normal;white-space:nowrap;transform:scaleY(1.08);transform-origin:0 12.44px;">1.00%</div><div style="position:absolute;left:578.35px;width:1000px;text-align:center;top:1119.16px;font-size:14.7px;line-height:14.7px;color:#aa0618;font-weight:normal;font-style:normal;white-space:nowrap;transform:scaleY(1.08);transform-origin:0 12.44px;">$9.95</div><div style="position:absolute;left:1121.80px;top:1119.16px;font-size:14.7px;line-height:14.7px;color:#aa0618;font-weight:normal;font-style:normal;white-space:nowrap;transform:scaleY(1.08);transform-origin:0 12.44px;">$2,630.10</div><div style="position:absolute;left:766.15px;width:1000px;text-align:center;top:1119.16px;font-size:14.7px;line-height:14.7px;color:#aa0618;font-weight:normal;font-style:normal;white-space:nowrap;transform:scaleY(1.08);transform-origin:0 12.44px;">$1.00</div><div style="position:absolute;left:843.65px;width:1000px;text-align:center;top:1119.16px;font-size:14.7px;line-height:14.7px;color:#aa0618;font-weight:normal;font-style:normal;white-space:nowrap;transform:scaleY(1.08);transform-origin:0 12.44px;">588</div><div style="position:absolute;left:935.00px;width:1000px;text-align:center;top:1119.16px;font-size:14.7px;line-height:14.7px;color:#aa0618;font-weight:normal;font-style:normal;white-space:nowrap;transform:scaleY(1.08);transform-origin:0 12.44px;">593</div><div style="position:absolute;left:1484.00px;top:1119.16px;font-size:14.7px;line-height:14.7px;color:#aa0618;font-weight:normal;font-style:normal;white-space:nowrap;transform:scaleY(1.08);transform-origin:0 12.44px;">$39,230.97</div><div style="position:absolute;left:1154.75px;width:1000px;text-align:center;top:1119.16px;font-size:14.7px;line-height:14.7px;color:#aa0618;font-weight:normal;font-style:normal;white-space:nowrap;transform:scaleY(1.08);transform-origin:0 12.44px;">2024-04-08</div><div style="position:absolute;left:1716.40px;top:1119.16px;font-size:14.7px;line-height:14.7px;color:#aa0618;font-weight:normal;font-style:normal;white-space:nowrap;transform:scaleY(1.08);transform-origin:0 12.44px;">$39,382.08</div><div style="position:absolute;left:1587.30px;width:600px;text-align:center;top:1119.16px;font-size:14.7px;line-height:14.7px;color:#aa0618;font-weight:normal;font-style:normal;white-space:nowrap;transform:scaleY(1.08);transform-origin:0 12.44px;">2024-06-26</div><div style="position:absolute;left:38.5px;top:1135.70px;width:80px;height:24.35px;overflow:hidden;"><div style="position:absolute;left:3.5px;top:7.81px;font-size:14.7px;line-height:14.7px;color:#aa0618;font-weight:normal;font-style:normal;white-space:nowrap;transform:scaleY(1.08);transform-origin:0 12.44px;">NTR.TO</div></div><div style="position:absolute;left:122.00px;top:1143.51px;font-size:14.7px;line-height:14.7px;color:#aa0618;font-weight:normal;font-style:normal;white-space:nowrap;transform:scaleY(1.08);transform-origin:0 12.44px;">Nutrien</div><div style="position:absolute;left:251.50px;top:1143.51px;font-size:14.7px;line-height:14.7px;color:#aa0618;font-weight:normal;font-style:normal;white-space:nowrap;transform:scaleY(1.08);transform-origin:0 12.44px;">$79.84</div><div style="position:absolute;left:367.80px;top:1143.51px;font-size:14.7px;line-height:14.7px;color:#aa0618;font-weight:normal;font-style:normal;white-space:nowrap;transform:scaleY(1.08);transform-origin:0 12.44px;">$0.03</div><div style="position:absolute;left:447.30px;top:1143.51px;font-size:14.7px;line-height:14.7px;color:#aa0618;font-weight:normal;font-style:normal;white-space:nowrap;transform:scaleY(1.08);transform-origin:0 12.44px;">$79.87</div><div style="position:absolute;left:526.90px;top:1143.51px;font-size:14.7px;line-height:14.7px;color:#aa0618;font-weight:normal;font-style:normal;white-space:nowrap;transform:scaleY(1.08);transform-origin:0 12.44px;">$1.65</div><div style="position:absolute;left:143.00px;width:1000px;text-align:center;top:1143.51px;font-size:14.7px;line-height:14.7px;color:#aa0618;font-weight:normal;font-style:normal;white-space:nowrap;transform:scaleY(1.08);transform-origin:0 12.44px;">3</div><div style="position:absolute;left:686.30px;top:1143.51px;font-size:14.7px;line-height:14.7px;color:#aa0618;font-weight:normal;font-style:normal;white-space:nowrap;transform:scaleY(1.08);transform-origin:0 12.44px;">$74.92</div><div style="position:absolute;left:846.20px;top:1143.51px;font-size:14.7px;line-height:14.7px;color:#aa0618;font-weight:normal;font-style:normal;white-space:nowrap;transform:scaleY(1.08);transform-origin:0 12.44px;">$265,000.00</div><div style="position:absolute;left:498.50px;width:1000px;text-align:center;top:1143.51px;font-size:14.7px;line-height:14.7px;color:#aa0618;font-weight:normal;font-style:normal;white-space:nowrap;transform:scaleY(1.08);transform-origin:0 12.44px;">1.00%</div><div style="position:absolute;left:578.35px;width:1000px;text-align:center;top:1143.51px;font-size:14.7px;line-height:14.7px;color:#aa0618;font-weight:normal;font-style:normal;white-space:nowrap;transform:scaleY(1.08);transform-origin:0 12.44px;">$9.95</div><div style="position:absolute;left:1121.80px;top:1143.51px;font-size:14.7px;line-height:14.7px;color:#aa0618;font-weight:normal;font-style:normal;white-space:nowrap;transform:scaleY(1.08);transform-origin:0 12.44px;">$2,630.10</div><div style="position:absolute;left:766.15px;width:1000px;text-align:center;top:1143.51px;font-size:14.7px;line-height:14.7px;color:#aa0618;font-weight:normal;font-style:normal;white-space:nowrap;transform:scaleY(1.08);transform-origin:0 12.44px;">$1.00</div><div style="position:absolute;left:843.65px;width:1000px;text-align:center;top:1143.51px;font-size:14.7px;line-height:14.7px;color:#aa0618;font-weight:normal;font-style:normal;white-space:nowrap;transform:scaleY(1.08);transform-origin:0 12.44px;">531</div><div style="position:absolute;left:935.00px;width:1000px;text-align:center;top:1143.51px;font-size:14.7px;line-height:14.7px;color:#aa0618;font-weight:normal;font-style:normal;white-space:nowrap;transform:scaleY(1.08);transform-origin:0 12.44px;">535</div><div style="position:absolute;left:1484.00px;top:1143.51px;font-size:14.7px;line-height:14.7px;color:#aa0618;font-weight:normal;font-style:normal;white-space:nowrap;transform:scaleY(1.08);transform-origin:0 12.44px;">$42,740.40</div><div style="position:absolute;left:1154.75px;width:1000px;text-align:center;top:1143.51px;font-size:14.7px;line-height:14.7px;color:#aa0618;font-weight:normal;font-style:normal;white-space:nowrap;transform:scaleY(1.08);transform-origin:0 12.44px;">2024-05-14</div><div style="position:absolute;left:1716.40px;top:1143.51px;font-size:14.7px;line-height:14.7px;color:#aa0618;font-weight:normal;font-style:normal;white-space:nowrap;transform:scaleY(1.08);transform-origin:0 12.44px;">$42,804.60</div><div style="position:absolute;left:1587.30px;width:600px;text-align:center;top:1143.51px;font-size:14.7px;line-height:14.7px;color:#aa0618;font-weight:normal;font-style:normal;white-space:nowrap;transform:scaleY(1.08);transform-origin:0 12.44px;">2024-06-12</div><svg style="position:absolute;left:119.00px;top:698.60px;" width="7.5" height="7.5" viewBox="0 0 7.5 7.5"><path d="M0 0 L7.5 0 L0 7.5 Z" fill="#0a8a0a"/></svg><svg style="position:absolute;left:444.30px;top:698.60px;" width="7.5" height="7.5" viewBox="0 0 7.5 7.5"><path d="M0 0 L7.5 0 L0 7.5 Z" fill="#0a8a0a"/></svg><svg style="position:absolute;left:683.30px;top:698.60px;" width="7.5" height="7.5" viewBox="0 0 7.5 7.5"><path d="M0 0 L7.5 0 L0 7.5 Z" fill="#0a8a0a"/></svg><svg style="position:absolute;left:1118.80px;top:698.60px;" width="7.5" height="7.5" viewBox="0 0 7.5 7.5"><path d="M0 0 L7.5 0 L0 7.5 Z" fill="#0a8a0a"/></svg><svg style="position:absolute;left:1298.30px;top:698.60px;" width="7.5" height="7.5" viewBox="0 0 7.5 7.5"><path d="M0 0 L7.5 0 L0 7.5 Z" fill="#0a8a0a"/></svg><svg style="position:absolute;left:1481.00px;top:698.60px;" width="7.5" height="7.5" viewBox="0 0 7.5 7.5"><path d="M0 0 L7.5 0 L0 7.5 Z" fill="#0a8a0a"/></svg><div style="position:absolute;left:38.00px;top:721.00px;width:1908.00px;height:1.00px;background:#5a5a5a;"></div><div style="position:absolute;left:38.00px;top:746.00px;width:1908.00px;height:1.00px;background:#5a5a5a;"></div><div style="position:absolute;left:38.00px;top:770.00px;width:1908.00px;height:1.00px;background:#5a5a5a;"></div><div style="position:absolute;left:38.00px;top:794.00px;width:1908.00px;height:1.00px;background:#5a5a5a;"></div><div style="position:absolute;left:38.00px;top:819.00px;width:1908.00px;height:1.00px;background:#5a5a5a;"></div><div style="position:absolute;left:38.00px;top:843.00px;width:1908.00px;height:1.00px;background:#5a5a5a;"></div><div style="position:absolute;left:38.00px;top:867.00px;width:1908.00px;height:1.00px;background:#5a5a5a;"></div><div style="position:absolute;left:38.00px;top:892.00px;width:1908.00px;height:1.00px;background:#5a5a5a;"></div><div style="position:absolute;left:38.00px;top:916.00px;width:1908.00px;height:1.00px;background:#5a5a5a;"></div><div style="position:absolute;left:38.00px;top:940.00px;width:1908.00px;height:1.00px;background:#5a5a5a;"></div><div style="position:absolute;left:38.00px;top:965.00px;width:1908.00px;height:1.00px;background:#5a5a5a;"></div><div style="position:absolute;left:38.00px;top:989.00px;width:1908.00px;height:1.00px;background:#5a5a5a;"></div><div style="position:absolute;left:38.00px;top:1013.00px;width:1908.00px;height:1.00px;background:#5a5a5a;"></div><div style="position:absolute;left:38.00px;top:1038.00px;width:1908.00px;height:1.00px;background:#5a5a5a;"></div><div style="position:absolute;left:38.00px;top:1062.00px;width:1908.00px;height:1.00px;background:#5a5a5a;"></div><div style="position:absolute;left:38.00px;top:1087.00px;width:1908.00px;height:1.00px;background:#5a5a5a;"></div><div style="position:absolute;left:38.00px;top:1111.00px;width:1908.00px;height:1.00px;background:#5a5a5a;"></div><div style="position:absolute;left:38.00px;top:1135.00px;width:1908.00px;height:1.00px;background:#5a5a5a;"></div><div style="position:absolute;left:38.00px;top:697.00px;width:1908.00px;height:1.00px;background:#5a5a5a;"></div><div style="position:absolute;left:0.00px;top:247.40px;width:30.20px;height:902.60px;background:#f7f7f7;"></div><div style="position:absolute;left:0.00px;top:269.75px;width:30.20px;height:1.00px;background:#dedede;"></div><div style="position:absolute;left:11.22px;top:253.94px;font-size:13.60px;line-height:13.60px;color:#4a4a4a;font-weight:normal;font-style:normal;white-space:nowrap;">1</div><div style="position:absolute;left:0.00px;top:294.10px;width:30.20px;height:1.00px;background:#dedede;"></div><div style="position:absolute;left:11.43px;top:278.29px;font-size:13.60px;line-height:13.60px;color:#4a4a4a;font-weight:normal;font-style:normal;white-space:nowrap;">2</div><div style="position:absolute;left:0.00px;top:318.45px;width:30.20px;height:1.00px;background:#dedede;"></div><div style="position:absolute;left:11.43px;top:302.64px;font-size:13.60px;line-height:13.60px;color:#4a4a4a;font-weight:normal;font-style:normal;white-space:nowrap;">3</div><div style="position:absolute;left:0.00px;top:342.80px;width:30.20px;height:1.00px;background:#dedede;"></div><div style="position:absolute;left:11.49px;top:326.99px;font-size:13.60px;line-height:13.60px;color:#4a4a4a;font-weight:normal;font-style:normal;white-space:nowrap;">4</div><div style="position:absolute;left:0.00px;top:367.15px;width:30.20px;height:1.00px;background:#dedede;"></div><div style="position:absolute;left:11.43px;top:351.34px;font-size:13.60px;line-height:13.60px;color:#4a4a4a;font-weight:normal;font-style:normal;white-space:nowrap;">5</div><div style="position:absolute;left:0.00px;top:391.50px;width:30.20px;height:1.00px;background:#dedede;"></div><div style="position:absolute;left:11.36px;top:375.69px;font-size:13.60px;line-height:13.60px;color:#4a4a4a;font-weight:normal;font-style:normal;white-space:nowrap;">6</div><div style="position:absolute;left:0.00px;top:415.85px;width:30.20px;height:1.00px;background:#dedede;"></div><div style="position:absolute;left:11.43px;top:400.04px;font-size:13.60px;line-height:13.60px;color:#4a4a4a;font-weight:normal;font-style:normal;white-space:nowrap;">7</div><div style="position:absolute;left:0.00px;top:440.20px;width:30.20px;height:1.00px;background:#dedede;"></div><div style="position:absolute;left:11.39px;top:424.39px;font-size:13.60px;line-height:13.60px;color:#4a4a4a;font-weight:normal;font-style:normal;white-space:nowrap;">8</div><div style="position:absolute;left:0.00px;top:464.55px;width:30.20px;height:1.00px;background:#dedede;"></div><div style="position:absolute;left:11.43px;top:448.74px;font-size:13.60px;line-height:13.60px;color:#4a4a4a;font-weight:normal;font-style:normal;white-space:nowrap;">9</div><div style="position:absolute;left:0.00px;top:488.90px;width:30.20px;height:1.00px;background:#dedede;"></div><div style="position:absolute;left:7.38px;top:473.09px;font-size:13.60px;line-height:13.60px;color:#4a4a4a;font-weight:normal;font-style:normal;white-space:nowrap;">10</div><div style="position:absolute;left:0.00px;top:513.25px;width:30.20px;height:1.00px;background:#dedede;"></div><div style="position:absolute;left:7.96px;top:497.44px;font-size:13.60px;line-height:13.60px;color:#4a4a4a;font-weight:normal;font-style:normal;white-space:nowrap;">11</div><div style="position:absolute;left:0.00px;top:537.60px;width:30.20px;height:1.00px;background:#dedede;"></div><div style="position:absolute;left:7.48px;top:521.79px;font-size:13.60px;line-height:13.60px;color:#4a4a4a;font-weight:normal;font-style:normal;white-space:nowrap;">12</div><div style="position:absolute;left:0.00px;top:561.95px;width:30.20px;height:1.00px;background:#dedede;"></div><div style="position:absolute;left:7.41px;top:546.14px;font-size:13.60px;line-height:13.60px;color:#4a4a4a;font-weight:normal;font-style:normal;white-space:nowrap;">13</div><div style="position:absolute;left:0.00px;top:586.30px;width:30.20px;height:1.00px;background:#dedede;"></div><div style="position:absolute;left:7.35px;top:570.49px;font-size:13.60px;line-height:13.60px;color:#4a4a4a;font-weight:normal;font-style:normal;white-space:nowrap;">14</div><div style="position:absolute;left:0.00px;top:610.65px;width:30.20px;height:1.00px;background:#dedede;"></div><div style="position:absolute;left:7.41px;top:594.84px;font-size:13.60px;line-height:13.60px;color:#4a4a4a;font-weight:normal;font-style:normal;white-space:nowrap;">15</div><div style="position:absolute;left:0.00px;top:635.00px;width:30.20px;height:1.00px;background:#dedede;"></div><div style="position:absolute;left:7.41px;top:619.19px;font-size:13.60px;line-height:13.60px;color:#0f6a31;font-weight:normal;font-style:normal;white-space:nowrap;">16</div><div style="position:absolute;left:0.00px;top:696.90px;width:30.20px;height:1.00px;background:#dedede;"></div><div style="position:absolute;left:7.45px;top:681.09px;font-size:13.60px;line-height:13.60px;color:#4a4a4a;font-weight:normal;font-style:normal;white-space:nowrap;">19</div><div style="position:absolute;left:0.00px;top:721.25px;width:30.20px;height:1.00px;background:#dedede;"></div><div style="position:absolute;left:7.55px;top:705.44px;font-size:13.60px;line-height:13.60px;color:#4a4a4a;font-weight:normal;font-style:normal;white-space:nowrap;">20</div><div style="position:absolute;left:0.00px;top:745.60px;width:30.20px;height:1.00px;background:#dedede;"></div><div style="position:absolute;left:7.62px;top:729.79px;font-size:13.60px;line-height:13.60px;color:#4a4a4a;font-weight:normal;font-style:normal;white-space:nowrap;">21</div><div style="position:absolute;left:0.00px;top:769.95px;width:30.20px;height:1.00px;background:#dedede;"></div><div style="position:absolute;left:7.65px;top:754.14px;font-size:13.60px;line-height:13.60px;color:#4a4a4a;font-weight:normal;font-style:normal;white-space:nowrap;">22</div><div style="position:absolute;left:0.00px;top:794.30px;width:30.20px;height:1.00px;background:#dedede;"></div><div style="position:absolute;left:7.58px;top:778.49px;font-size:13.60px;line-height:13.60px;color:#4a4a4a;font-weight:normal;font-style:normal;white-space:nowrap;">23</div><div style="position:absolute;left:0.00px;top:818.65px;width:30.20px;height:1.00px;background:#dedede;"></div><div style="position:absolute;left:7.52px;top:802.84px;font-size:13.60px;line-height:13.60px;color:#4a4a4a;font-weight:normal;font-style:normal;white-space:nowrap;">24</div><div style="position:absolute;left:0.00px;top:843.00px;width:30.20px;height:1.00px;background:#dedede;"></div><div style="position:absolute;left:7.58px;top:827.19px;font-size:13.60px;line-height:13.60px;color:#4a4a4a;font-weight:normal;font-style:normal;white-space:nowrap;">25</div><div style="position:absolute;left:0.00px;top:867.35px;width:30.20px;height:1.00px;background:#dedede;"></div><div style="position:absolute;left:7.58px;top:851.54px;font-size:13.60px;line-height:13.60px;color:#4a4a4a;font-weight:normal;font-style:normal;white-space:nowrap;">26</div><div style="position:absolute;left:0.00px;top:891.70px;width:30.20px;height:1.00px;background:#dedede;"></div><div style="position:absolute;left:7.65px;top:875.89px;font-size:13.60px;line-height:13.60px;color:#4a4a4a;font-weight:normal;font-style:normal;white-space:nowrap;">27</div><div style="position:absolute;left:0.00px;top:916.05px;width:30.20px;height:1.00px;background:#dedede;"></div><div style="position:absolute;left:7.58px;top:900.24px;font-size:13.60px;line-height:13.60px;color:#4a4a4a;font-weight:normal;font-style:normal;white-space:nowrap;">28</div><div style="position:absolute;left:0.00px;top:940.40px;width:30.20px;height:1.00px;background:#dedede;"></div><div style="position:absolute;left:7.62px;top:924.59px;font-size:13.60px;line-height:13.60px;color:#4a4a4a;font-weight:normal;font-style:normal;white-space:nowrap;">29</div><div style="position:absolute;left:0.00px;top:964.75px;width:30.20px;height:1.00px;background:#dedede;"></div><div style="position:absolute;left:7.62px;top:948.94px;font-size:13.60px;line-height:13.60px;color:#4a4a4a;font-weight:normal;font-style:normal;white-space:nowrap;">30</div><div style="position:absolute;left:0.00px;top:989.10px;width:30.20px;height:1.00px;background:#dedede;"></div><div style="position:absolute;left:7.69px;top:973.29px;font-size:13.60px;line-height:13.60px;color:#4a4a4a;font-weight:normal;font-style:normal;white-space:nowrap;">31</div><div style="position:absolute;left:0.00px;top:1013.45px;width:30.20px;height:1.00px;background:#dedede;"></div><div style="position:absolute;left:7.72px;top:997.64px;font-size:13.60px;line-height:13.60px;color:#4a4a4a;font-weight:normal;font-style:normal;white-space:nowrap;">32</div><div style="position:absolute;left:0.00px;top:1037.80px;width:30.20px;height:1.00px;background:#dedede;"></div><div style="position:absolute;left:7.65px;top:1021.99px;font-size:13.60px;line-height:13.60px;color:#4a4a4a;font-weight:normal;font-style:normal;white-space:nowrap;">33</div><div style="position:absolute;left:0.00px;top:1062.15px;width:30.20px;height:1.00px;background:#dedede;"></div><div style="position:absolute;left:7.58px;top:1046.34px;font-size:13.60px;line-height:13.60px;color:#4a4a4a;font-weight:normal;font-style:normal;white-space:nowrap;">34</div><div style="position:absolute;left:0.00px;top:1086.50px;width:30.20px;height:1.00px;background:#dedede;"></div><div style="position:absolute;left:7.65px;top:1070.69px;font-size:13.60px;line-height:13.60px;color:#4a4a4a;font-weight:normal;font-style:normal;white-space:nowrap;">35</div><div style="position:absolute;left:0.00px;top:1110.85px;width:30.20px;height:1.00px;background:#dedede;"></div><div style="position:absolute;left:7.65px;top:1095.04px;font-size:13.60px;line-height:13.60px;color:#4a4a4a;font-weight:normal;font-style:normal;white-space:nowrap;">36</div><div style="position:absolute;left:0.00px;top:1135.20px;width:30.20px;height:1.00px;background:#dedede;"></div><div style="position:absolute;left:7.72px;top:1119.39px;font-size:13.60px;line-height:13.60px;color:#4a4a4a;font-weight:normal;font-style:normal;white-space:nowrap;">37</div><div style="position:absolute;left:0.00px;top:1159.55px;width:30.20px;height:1.00px;background:#dedede;"></div><div style="position:absolute;left:7.65px;top:1143.74px;font-size:13.60px;line-height:13.60px;color:#4a4a4a;font-weight:normal;font-style:normal;white-space:nowrap;">38</div><div style="position:absolute;left:28.20px;top:611.15px;width:2.80px;height:26.00px;background:#0f6a31;"></div><div style="position:absolute;left:0.00px;top:634.30px;width:31.00px;height:2.80px;background:#0f6a31;"></div><div style="position:absolute;left:1827.00px;top:609.20px;width:122.00px;height:28.40px;border:2.8px solid #136c35;"></div><div style="position:absolute;left:1941.50px;top:632.20px;width:6.00px;height:6.00px;background:#136c35;"></div><div style="position:absolute;left:0.00px;top:1150.00px;width:1946.00px;height:35.20px;background:#efefef;"></div><div style="position:absolute;left:0.00px;top:1150.00px;width:1946.00px;height:0.80px;background:#d2d2d2;"></div><div style="position:absolute;left:0.00px;top:1184.60px;width:1946.00px;height:1.20px;background:#c4c4c4;"></div><svg style="position:absolute;left:20.00px;top:1160.00px;" width="12" height="16" viewBox="0 0 12 16"><path d="M10.5 1 L1.5 8 L10.5 15 Z" fill="#b5b5b5"/></svg><svg style="position:absolute;left:49.50px;top:1160.00px;" width="12" height="16" viewBox="0 0 12 16"><path d="M1.5 1 L10.5 8 L1.5 15 Z" fill="#b5b5b5"/></svg><div style="position:absolute;left:81.20px;top:1153.00px;width:1.10px;height:25.00px;background:#d4d4d4;"></div><div style="position:absolute;left:212.20px;top:1153.00px;width:1.10px;height:25.00px;background:#d4d4d4;"></div><div style="position:absolute;left:318.90px;top:1153.00px;width:1.10px;height:25.00px;background:#d4d4d4;"></div><div style="position:absolute;left:503.40px;top:1153.00px;width:1.10px;height:25.00px;background:#d4d4d4;"></div><div style="position:absolute;left:731.10px;top:1153.00px;width:1.10px;height:25.00px;background:#d4d4d4;"></div><div style="position:absolute;left:913.80px;top:1153.00px;width:1.10px;height:25.00px;background:#d4d4d4;"></div><div style="position:absolute;left:1447.50px;top:1153.00px;width:1.10px;height:25.00px;background:#d4d4d4;"></div><div style="position:absolute;left:1589.50px;top:1153.00px;width:1.10px;height:25.00px;background:#d4d4d4;"></div><div style="position:absolute;left:1640.50px;top:1153.00px;width:1.10px;height:25.00px;background:#d4d4d4;"></div><div style="position:absolute;left:105.56px;top:1158.70px;font-size:16.30px;line-height:16.30px;color:#555555;font-weight:normal;font-style:normal;white-space:nowrap;">User Guide</div><div style="position:absolute;left:236.66px;top:1158.70px;font-size:16.30px;line-height:16.30px;color:#555555;font-weight:normal;font-style:normal;white-space:nowrap;">Markets</div><div style="position:absolute;left:347.92px;top:1158.70px;font-size:16.30px;line-height:16.30px;color:#555555;font-weight:normal;font-style:normal;white-space:nowrap;">Backtest -Journal</div><div style="position:absolute;left:534.33px;top:1158.70px;font-size:16.30px;line-height:16.30px;color:#555555;font-weight:normal;font-style:normal;white-space:nowrap;">Backtest -Performance</div><div style="position:absolute;left:760.12px;top:1158.70px;font-size:16.30px;line-height:16.30px;color:#555555;font-weight:normal;font-style:normal;white-space:nowrap;">Backtest - Charts</div><div style="position:absolute;left:938.48px;top:1158.70px;font-size:16.30px;line-height:16.30px;color:#555555;font-weight:normal;font-style:normal;white-space:nowrap;">Trading Plan</div><div style="position:absolute;left:1261.03px;top:1158.70px;font-size:16.30px;line-height:16.30px;color:#555555;font-weight:normal;font-style:normal;white-space:nowrap;">Trading -Performance</div><div style="position:absolute;left:1473.02px;top:1158.70px;font-size:16.30px;line-height:16.30px;color:#555555;font-weight:normal;font-style:normal;white-space:nowrap;">Benchmarks</div><div style="position:absolute;left:1055.00px;top:1149.60px;width:176.00px;height:30.60px;background:#fff;border-radius:0 0 5px 5px;box-shadow:0 1px 1.5px rgba(0,0,0,0.28);"></div><div style="position:absolute;left:1079.43px;top:1158.70px;font-size:16.30px;line-height:16.30px;color:#1f7a43;font-weight:bold;font-style:normal;white-space:nowrap;">Trading -Journal</div><svg style="position:absolute;left:1607.00px;top:1158.00px;" width="18" height="18" viewBox="0 0 18 18"><path d="M9 2 V16 M2 9 H16" stroke="#555" stroke-width="2.6"/></svg><div style="position:absolute;left:0.00px;top:1185.80px;width:1946.00px;height:30.20px;background:linear-gradient(180deg,#e3e3e3,#d9d9d9);"></div><div style="position:absolute;left:32.10px;top:1192.69px;font-size:16.20px;line-height:16.20px;color:#3c3c3c;font-weight:normal;font-style:normal;white-space:nowrap;transform:scaleX(1.0039);transform-origin:0 0;">Ready</div><svg style="position:absolute;left:107.00px;top:1190.00px;" width="23" height="22" viewBox="0 0 23 22"><circle cx="4.5" cy="4" r="3" fill="#5a5a5a"/><path d="M4.5 8 V19 H18 V4 H21" stroke="#5a5a5a" stroke-width="2.2" fill="none"/><path d="M1 19 H12" stroke="#5a5a5a" stroke-width="2.2"/></svg><svg style="position:absolute;left:150.00px;top:1189.00px;" width="23" height="23" viewBox="0 0 23 23"><circle cx="9.5" cy="3.5" r="2.5" fill="none" stroke="#5a5a5a" stroke-width="1.3"/><path d="M2 7.5 Q9.5 10 17 7.5 M9.5 9 V14 L5 21 M9.5 14 L13 18 M13.5 15 L21 22 M21 15 L13.5 22" stroke="#5a5a5a" stroke-width="1.4" fill="none" stroke-linecap="round"/></svg><div style="position:absolute;left:177.30px;top:1192.69px;font-size:16.20px;line-height:16.20px;color:#3c3c3c;font-weight:normal;font-style:normal;white-space:nowrap;transform:scaleX(1.0658);transform-origin:0 0;">Accessibility: Investigate</div><div style="position:absolute;left:1515.00px;top:1186.00px;width:49.70px;height:30.00px;background:#a9a9a9;"></div><svg style="position:absolute;left:1530.00px;top:1191.00px;" width="19" height="19" viewBox="0 0 19 19"><g fill="#fff"><rect x="1" y="1" width="4.6" height="4.6" rx="0.8"/><rect x="7.2" y="1" width="4.6" height="4.6" rx="0.8"/><rect x="13.4" y="1" width="4.6" height="4.6" rx="0.8"/><rect x="1" y="7.2" width="4.6" height="4.6" rx="0.8"/><rect x="7.2" y="7.2" width="4.6" height="4.6" rx="0.8"/><rect x="13.4" y="7.2" width="4.6" height="4.6" rx="0.8"/><rect x="1" y="13.4" width="4.6" height="4.6" rx="0.8"/><rect x="7.2" y="13.4" width="4.6" height="4.6" rx="0.8"/><rect x="13.4" y="13.4" width="4.6" height="4.6" rx="0.8"/></g></svg><svg style="position:absolute;left:1578.00px;top:1191.00px;" width="21" height="21" viewBox="0 0 21 21"><rect x="1" y="1" width="19" height="19" fill="none" stroke="#555" stroke-width="1.6"/><rect x="5" y="5" width="11" height="11" fill="none" stroke="#555" stroke-width="1.2"/><path d="M7 8 H14 M7 10.5 H14 M7 13 H14" stroke="#555" stroke-width="1"/></svg><svg style="position:absolute;left:1627.00px;top:1191.00px;" width="19" height="19" viewBox="0 0 19 19"><rect x="1" y="1" width="17" height="17" fill="none" stroke="#555" stroke-width="1.6"/><path d="M1 10 H12 V1 M6.5 1 V10" stroke="#555" stroke-width="1.5" fill="none"/></svg><div style="position:absolute;left:1672.50px;top:1199.50px;width:10.00px;height:2.40px;background:#555;"></div><div style="position:absolute;left:1691.70px;top:1198.50px;width:135.00px;height:4.50px;background:#a6a6a6;border-radius:2.5px;"></div><div style="position:absolute;left:1741.70px;top:1189.50px;width:22.00px;height:22.00px;background:#fff;border-radius:50%;box-shadow:0 0.5px 2px rgba(0,0,0,0.35);"></div><svg style="position:absolute;left:1835.00px;top:1194.00px;" width="14" height="14" viewBox="0 0 14 14"><path d="M7 1 V13 M1 7 H13" stroke="#555" stroke-width="2.4"/></svg><div style="position:absolute;left:1875.02px;top:1192.69px;font-size:16.20px;line-height:16.20px;color:#3c3c3c;font-weight:normal;font-style:normal;white-space:nowrap;">90%</div><svg style="position:absolute;left:1680.00px;top:272.00px;" width="250" height="106" viewBox="0 0 250 106">
<path d="M5.4 45.8 L18.7 45.8 L27.2 64 L49.5 28.6 L61.6 34.3 L74.6 13.6 L69.9 12.8 L84.2 4.4 L84.2 19.7 L80.6 16.5 L64.7 43.6 L52.6 37.8 L29.6 79.2 L24.6 79.2 Z" fill="#1a73c2"/>
<g fill="none" stroke="#1a73c2" stroke-width="8.6">
<rect x="50.5" y="49.4" width="29.4" height="25.4" rx="12.7"/>
<rect x="88" y="49.4" width="29.4" height="25.4" rx="12.7"/>
<path d="M129.3 49.4 H144.5 A12.7 12.7 0 0 1 144.5 74.8 H129.3 Z"/>
<rect x="166.5" y="49.4" width="29.4" height="25.4" rx="12.7"/>
<rect x="204" y="49.4" width="29.4" height="25.4" rx="12.7"/>
</g>
<path d="M17 94 H64 M190 94 H237.8" stroke="#555" stroke-width="1.7"/>
<text x="70.5" y="100" font-family="Liberation Sans" font-size="18.5" textLength="111" lengthAdjust="spacingAndGlyphs" fill="#404040">TRADING</text>
</svg>
</body></html>
